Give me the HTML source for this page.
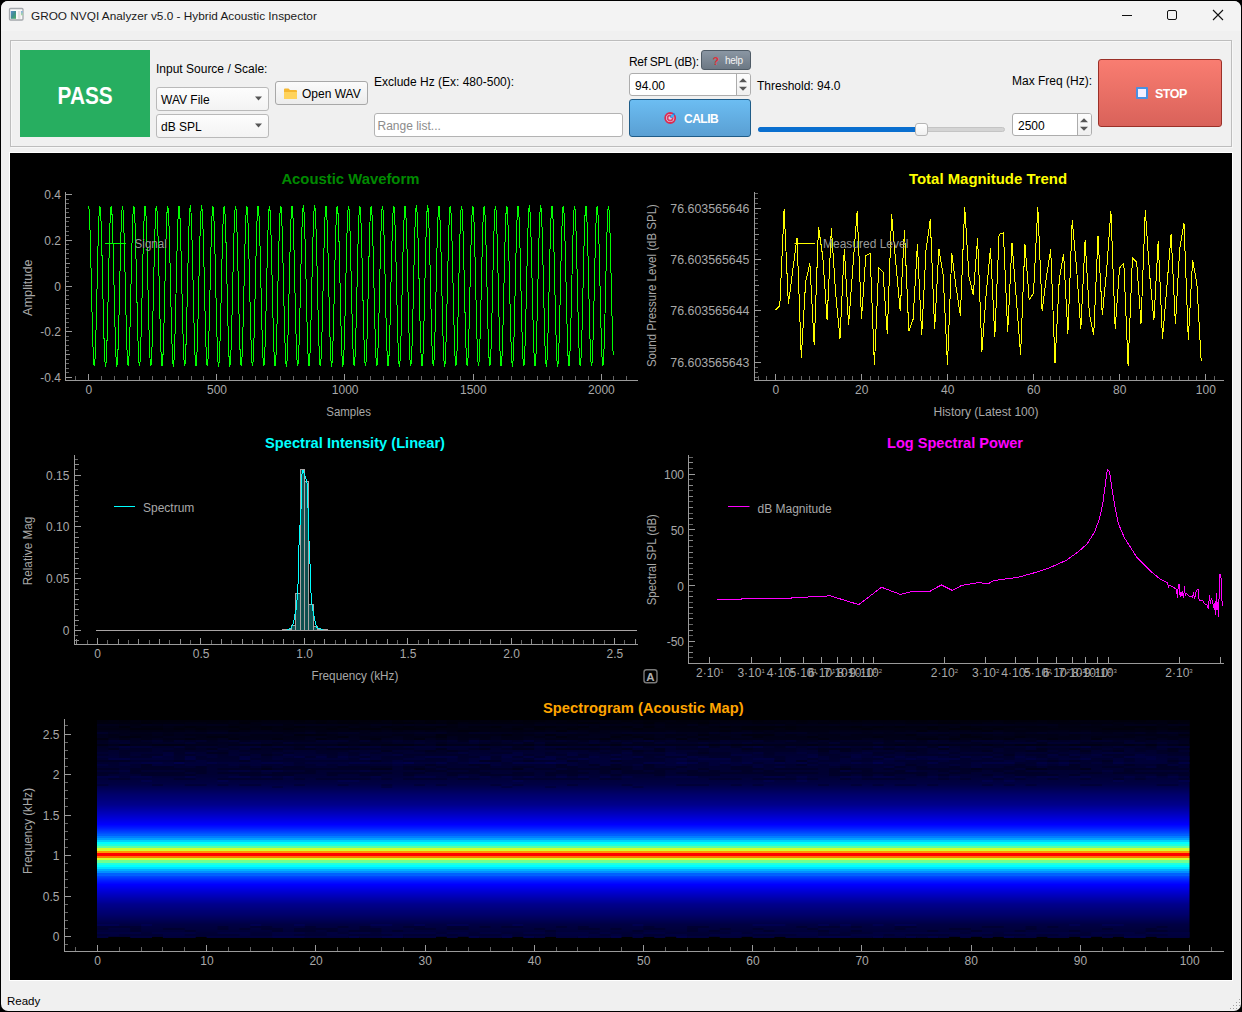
<!DOCTYPE html><html><head><meta charset="utf-8"><style>
*{box-sizing:border-box}
html,body{margin:0;padding:0}
body{width:1242px;height:1012px;overflow:hidden;background:#000;font-family:"Liberation Sans", sans-serif;position:relative;font-size:12px;color:#000}
.a{position:absolute}
#win{position:absolute;left:1px;top:1px;width:1240px;height:1010px;background:#f0f0f0;border-radius:7px;overflow:hidden}
#tb{position:absolute;left:0;top:0;width:1240px;height:30px;background:#f3f3f3}
.lbl{position:absolute;white-space:nowrap;font-size:12px;line-height:14px;color:#000;margin-top:1px}
.combo{position:absolute;border:1px solid #b9b9b9;border-radius:3px;background:linear-gradient(#fdfdfd,#f3f3f3)}
.btn{position:absolute;border:1px solid #a8a8a8;border-radius:3px;background:linear-gradient(#fbfbfb,#ececec)}
.edit{position:absolute;border:1px solid #b3b3b3;border-radius:3px;background:#fff}
</style></head><body><div id="win">
<div id="tb"></div>
<svg class="a" style="left:7px;top:6px" width="16" height="14"><defs><linearGradient id="ic1" x1="0" y1="0" x2="1" y2="1"><stop offset="0" stop-color="#5a8ccc"/><stop offset="0.5" stop-color="#3f8f90"/><stop offset="1" stop-color="#4fae60"/></linearGradient><linearGradient id="ic2" x1="0" y1="0" x2="0" y2="1"><stop offset="0" stop-color="#8ab0e0"/><stop offset="1" stop-color="#a8dca0"/></linearGradient></defs><rect x="1.5" y="1.5" width="13.5" height="11.5" rx="1" fill="#fafafa" stroke="#a4a8ac" stroke-width="1.3"/><rect x="2.8" y="4" width="5.2" height="7.8" fill="url(#ic1)"/><rect x="9.9" y="4" width="2.6" height="7.8" fill="#e2e2e2"/><rect x="13" y="4" width="1.9" height="4.3" fill="url(#ic2)"/></svg>
<div class="lbl" style="left:30px;top:7px;font-size:11.8px;line-height:14px;color:#1a1a1a">GROO NVQI Analyzer v5.0 - Hybrid Acoustic Inspector</div>
<div class="a" style="left:1121px;top:14px;width:10px;height:1px;background:#111"></div>
<div class="a" style="left:1166px;top:9px;width:10px;height:10px;border:1px solid #111;border-radius:2px"></div>
<svg class="a" style="left:1211px;top:8px" width="12" height="12"><path d="M1 1L11 11M11 1L1 11" stroke="#111" stroke-width="1.1"/></svg>
<div class="a" style="left:9px;top:39px;width:1222px;height:107px;border:1px solid #bdbdbd;box-shadow:inset 1px 1px 0 #f7f7f7, 1px 1px 0 #f7f7f7"></div>
<div class="a" style="left:19px;top:49px;width:130px;height:87px;background:#27ae60;color:#fff;font-weight:bold;font-size:23.5px;text-align:center;line-height:92px"><span style="display:inline-block;transform:scaleX(0.885)">PASS</span></div>
<div class="lbl" style="left:155px;top:60px">Input Source / Scale:</div>
<div class="combo" style="left:155px;top:86px;width:113px;height:24px"><div class="lbl" style="left:4px;top:3.5px">WAV File</div><svg class="a" style="left:97px;top:8px" width="9" height="6"><path d="M1 0.5L8 0.5L4.5 4.5Z" fill="#555"/></svg></div>
<div class="combo" style="left:155px;top:113px;width:113px;height:24px"><div class="lbl" style="left:4px;top:3.5px">dB SPL</div><svg class="a" style="left:97px;top:8px" width="9" height="6"><path d="M1 0.5L8 0.5L4.5 4.5Z" fill="#555"/></svg></div>
<div class="btn" style="left:274px;top:80px;width:93px;height:24px"><svg class="a" style="left:8px;top:6px" width="13" height="11"><path d="M0 1.5Q0 0.5 1 0.5L4.5 0.5L6 2L12 2Q13 2 13 3L13 11L0 11Z" fill="#f5b731"/><path d="M0 4L13 4L13 11L0 11Z" fill="#ffd35c"/></svg><div class="lbl" style="left:26px;top:4px">Open WAV</div></div>
<div class="lbl" style="left:373px;top:73px">Exclude Hz (Ex: 480-500):</div>
<div class="edit" style="left:373px;top:112px;width:249px;height:24px"><div class="lbl" style="left:2.5px;top:4px;color:#8c8c8c">Range list...</div></div>
<div class="lbl" style="left:628px;top:53px;letter-spacing:-0.3px">Ref SPL (dB):</div>
<div class="a" style="left:700px;top:49px;width:50px;height:20px;border:1px solid #4f5b66;border-radius:3px;background:linear-gradient(#8a96a3,#6c7884)"><div class="lbl" style="left:10.5px;top:2px;color:#e0303a;font-weight:bold;font-size:10.5px">?</div><div class="lbl" style="left:23px;top:2px;color:#f4f4f4;font-size:10px;letter-spacing:-0.3px">help</div></div>
<div class="edit" style="left:628px;top:72px;width:122px;height:23px;border-color:#adadad"><div class="lbl" style="left:5px;top:4px">94.00</div><div class="a" style="left:106px;top:0;width:14px;height:21px;background:linear-gradient(#fdfdfd,#efefef);border-radius:0 2px 2px 0"></div><div class="a" style="left:106px;top:0;width:1px;height:21px;background:#acacac"></div><svg class="a" style="left:108px;top:3px" width="10" height="15"><path d="M1 5.2L5 1.2L9 5.2Z" fill="#555"/><path d="M1 9.8L9 9.8L5 13.8Z" fill="#555"/></svg></div>
<div class="a" style="left:628px;top:98px;width:122px;height:38px;border:1px solid #1f5c88;border-radius:3px;background:linear-gradient(#6cbdf2,#5a9fd3)"><svg class="a" style="left:34px;top:11px" width="14" height="14"><circle cx="6.2" cy="7" r="5" fill="#dcd6ea" stroke="#dc2a50" stroke-width="1.8"/><circle cx="6.2" cy="7" r="2.6" fill="#e8c8d8" stroke="#e03a64" stroke-width="1.6"/><path d="M6.5 6.5L10.5 2.5" stroke="#2a78e0" stroke-width="2"/><circle cx="8.5" cy="5" r="1.6" fill="#40b8f0"/></svg><div class="lbl" style="left:54px;top:11px;color:#fff;font-weight:bold;font-size:12px;letter-spacing:-0.5px">CALIB</div></div>
<div class="lbl" style="left:756px;top:77px">Threshold: 94.0</div>
<div class="a" style="left:757px;top:126px;width:247px;height:5px;border-radius:3px;background:#d4d4d4;border:1px solid #c4c4c4"></div>
<div class="a" style="left:757px;top:126px;width:162px;height:5px;border-radius:3px;background:#0a6fcf"></div>
<div class="a" style="left:914px;top:122px;width:13px;height:13px;border-radius:3px;background:linear-gradient(#ffffff,#f0f0f0);border:1px solid #b5b5b5"></div>
<div class="lbl" style="left:1011px;top:72px">Max Freq (Hz):</div>
<div class="edit" style="left:1011px;top:112px;width:80px;height:23px;border-color:#adadad"><div class="lbl" style="left:5px;top:4px">2500</div><div class="a" style="left:64px;top:0;width:14px;height:21px;background:linear-gradient(#fdfdfd,#efefef);border-radius:0 2px 2px 0"></div><div class="a" style="left:64px;top:0;width:1px;height:21px;background:#acacac"></div><svg class="a" style="left:66px;top:3px" width="10" height="15"><path d="M1 5.2L5 1.2L9 5.2Z" fill="#555"/><path d="M1 9.8L9 9.8L5 13.8Z" fill="#555"/></svg></div>
<div class="a" style="left:1097px;top:58px;width:124px;height:68px;border:1px solid #9a3028;border-radius:3px;background:linear-gradient(#f97d71,#d9625a)"><div class="a" style="left:37px;top:27px;width:12px;height:12px;background:#4a90e2;border-radius:1px"><div class="a" style="left:2px;top:2px;width:8px;height:8px;background:#f4efff"></div></div><div class="lbl" style="left:56px;top:26px;color:#fff;font-weight:bold;font-size:12.5px;letter-spacing:-0.5px">STOP</div></div>
<div class="lbl" style="left:6px;top:992px;font-size:11.5px">Ready</div>
<div class="a" style="left:1238px;top:998px;width:1px;height:1px;background:#a0a0a0"></div>
<div class="a" style="left:1235px;top:1001px;width:1px;height:1px;background:#a0a0a0"></div>
<div class="a" style="left:1238px;top:1001px;width:1px;height:1px;background:#a0a0a0"></div>
<div class="a" style="left:1232px;top:1004px;width:1px;height:1px;background:#a0a0a0"></div>
<div class="a" style="left:1235px;top:1004px;width:1px;height:1px;background:#a0a0a0"></div>
<div class="a" style="left:1238px;top:1004px;width:1px;height:1px;background:#a0a0a0"></div>
<div class="a" style="left:1229px;top:1007px;width:1px;height:1px;background:#a0a0a0"></div>
<div class="a" style="left:1232px;top:1007px;width:1px;height:1px;background:#a0a0a0"></div>
<div class="a" style="left:1235px;top:1007px;width:1px;height:1px;background:#a0a0a0"></div>
</div>
<svg class="a" style="left:0;top:0" width="1242" height="1012" font-family='"Liberation Sans", sans-serif'>
<rect x="9" y="152" width="1224" height="829" fill="#fff"/>
<rect x="10" y="153" width="1222" height="827" fill="#000"/>
<line x1="65.5" y1="192" x2="65.5" y2="381" stroke="#9a9a9a" stroke-width="1"/>
<line x1="65" y1="380.5" x2="638" y2="380.5" stroke="#9a9a9a" stroke-width="1"/>
<line x1="66" y1="377.5" x2="72" y2="377.5" stroke="#9a9a9a" stroke-width="1"/>
<line x1="66" y1="331.5" x2="72" y2="331.5" stroke="#9a9a9a" stroke-width="1"/>
<line x1="66" y1="286.5" x2="72" y2="286.5" stroke="#9a9a9a" stroke-width="1"/>
<line x1="66" y1="240.5" x2="72" y2="240.5" stroke="#9a9a9a" stroke-width="1"/>
<line x1="66" y1="194.5" x2="72" y2="194.5" stroke="#9a9a9a" stroke-width="1"/>
<line x1="66" y1="354.5" x2="70" y2="354.5" stroke="#8a8a8a" stroke-width="1"/>
<line x1="66" y1="308.5" x2="70" y2="308.5" stroke="#8a8a8a" stroke-width="1"/>
<line x1="66" y1="263.5" x2="70" y2="263.5" stroke="#8a8a8a" stroke-width="1"/>
<line x1="66" y1="217.5" x2="70" y2="217.5" stroke="#8a8a8a" stroke-width="1"/>
<line x1="66" y1="372.5" x2="69" y2="372.5" stroke="#646464" stroke-width="1"/>
<line x1="66" y1="368.5" x2="69" y2="368.5" stroke="#646464" stroke-width="1"/>
<line x1="66" y1="363.5" x2="69" y2="363.5" stroke="#646464" stroke-width="1"/>
<line x1="66" y1="359.5" x2="69" y2="359.5" stroke="#646464" stroke-width="1"/>
<line x1="66" y1="350.5" x2="69" y2="350.5" stroke="#646464" stroke-width="1"/>
<line x1="66" y1="345.5" x2="69" y2="345.5" stroke="#646464" stroke-width="1"/>
<line x1="66" y1="340.5" x2="69" y2="340.5" stroke="#646464" stroke-width="1"/>
<line x1="66" y1="336.5" x2="69" y2="336.5" stroke="#646464" stroke-width="1"/>
<line x1="66" y1="327.5" x2="69" y2="327.5" stroke="#646464" stroke-width="1"/>
<line x1="66" y1="322.5" x2="69" y2="322.5" stroke="#646464" stroke-width="1"/>
<line x1="66" y1="318.5" x2="69" y2="318.5" stroke="#646464" stroke-width="1"/>
<line x1="66" y1="313.5" x2="69" y2="313.5" stroke="#646464" stroke-width="1"/>
<line x1="66" y1="304.5" x2="69" y2="304.5" stroke="#646464" stroke-width="1"/>
<line x1="66" y1="299.5" x2="69" y2="299.5" stroke="#646464" stroke-width="1"/>
<line x1="66" y1="295.5" x2="69" y2="295.5" stroke="#646464" stroke-width="1"/>
<line x1="66" y1="290.5" x2="69" y2="290.5" stroke="#646464" stroke-width="1"/>
<line x1="66" y1="281.5" x2="69" y2="281.5" stroke="#646464" stroke-width="1"/>
<line x1="66" y1="276.5" x2="69" y2="276.5" stroke="#646464" stroke-width="1"/>
<line x1="66" y1="272.5" x2="69" y2="272.5" stroke="#646464" stroke-width="1"/>
<line x1="66" y1="267.5" x2="69" y2="267.5" stroke="#646464" stroke-width="1"/>
<line x1="66" y1="258.5" x2="69" y2="258.5" stroke="#646464" stroke-width="1"/>
<line x1="66" y1="253.5" x2="69" y2="253.5" stroke="#646464" stroke-width="1"/>
<line x1="66" y1="249.5" x2="69" y2="249.5" stroke="#646464" stroke-width="1"/>
<line x1="66" y1="244.5" x2="69" y2="244.5" stroke="#646464" stroke-width="1"/>
<line x1="66" y1="235.5" x2="69" y2="235.5" stroke="#646464" stroke-width="1"/>
<line x1="66" y1="231.5" x2="69" y2="231.5" stroke="#646464" stroke-width="1"/>
<line x1="66" y1="226.5" x2="69" y2="226.5" stroke="#646464" stroke-width="1"/>
<line x1="66" y1="221.5" x2="69" y2="221.5" stroke="#646464" stroke-width="1"/>
<line x1="66" y1="212.5" x2="69" y2="212.5" stroke="#646464" stroke-width="1"/>
<line x1="66" y1="208.5" x2="69" y2="208.5" stroke="#646464" stroke-width="1"/>
<line x1="66" y1="203.5" x2="69" y2="203.5" stroke="#646464" stroke-width="1"/>
<line x1="66" y1="199.5" x2="69" y2="199.5" stroke="#646464" stroke-width="1"/>
<text x="61" y="199" font-size="12" fill="#a8a8a8" text-anchor="end" font-weight="normal" >0.4</text>
<text x="61" y="244.75" font-size="12" fill="#a8a8a8" text-anchor="end" font-weight="normal" >0.2</text>
<text x="61" y="290.5" font-size="12" fill="#a8a8a8" text-anchor="end" font-weight="normal" >0</text>
<text x="61" y="336.25" font-size="12" fill="#a8a8a8" text-anchor="end" font-weight="normal" >-0.2</text>
<text x="61" y="382" font-size="12" fill="#a8a8a8" text-anchor="end" font-weight="normal" >-0.4</text>
<line x1="88.5" y1="380" x2="88.5" y2="374" stroke="#9a9a9a" stroke-width="1"/>
<line x1="216.5" y1="380" x2="216.5" y2="374" stroke="#9a9a9a" stroke-width="1"/>
<line x1="344.5" y1="380" x2="344.5" y2="374" stroke="#9a9a9a" stroke-width="1"/>
<line x1="473.5" y1="380" x2="473.5" y2="374" stroke="#9a9a9a" stroke-width="1"/>
<line x1="601.5" y1="380" x2="601.5" y2="374" stroke="#9a9a9a" stroke-width="1"/>
<line x1="75.5" y1="380" x2="75.5" y2="376" stroke="#646464" stroke-width="1"/>
<line x1="101.5" y1="380" x2="101.5" y2="376" stroke="#646464" stroke-width="1"/>
<line x1="114.5" y1="380" x2="114.5" y2="376" stroke="#646464" stroke-width="1"/>
<line x1="127.5" y1="380" x2="127.5" y2="376" stroke="#646464" stroke-width="1"/>
<line x1="139.5" y1="380" x2="139.5" y2="376" stroke="#646464" stroke-width="1"/>
<line x1="152.5" y1="380" x2="152.5" y2="376" stroke="#646464" stroke-width="1"/>
<line x1="165.5" y1="380" x2="165.5" y2="376" stroke="#646464" stroke-width="1"/>
<line x1="178.5" y1="380" x2="178.5" y2="376" stroke="#646464" stroke-width="1"/>
<line x1="191.5" y1="380" x2="191.5" y2="376" stroke="#646464" stroke-width="1"/>
<line x1="203.5" y1="380" x2="203.5" y2="376" stroke="#646464" stroke-width="1"/>
<line x1="229.5" y1="380" x2="229.5" y2="376" stroke="#646464" stroke-width="1"/>
<line x1="242.5" y1="380" x2="242.5" y2="376" stroke="#646464" stroke-width="1"/>
<line x1="255.5" y1="380" x2="255.5" y2="376" stroke="#646464" stroke-width="1"/>
<line x1="267.5" y1="380" x2="267.5" y2="376" stroke="#646464" stroke-width="1"/>
<line x1="280.5" y1="380" x2="280.5" y2="376" stroke="#646464" stroke-width="1"/>
<line x1="293.5" y1="380" x2="293.5" y2="376" stroke="#646464" stroke-width="1"/>
<line x1="306.5" y1="380" x2="306.5" y2="376" stroke="#646464" stroke-width="1"/>
<line x1="319.5" y1="380" x2="319.5" y2="376" stroke="#646464" stroke-width="1"/>
<line x1="332.5" y1="380" x2="332.5" y2="376" stroke="#646464" stroke-width="1"/>
<line x1="357.5" y1="380" x2="357.5" y2="376" stroke="#646464" stroke-width="1"/>
<line x1="370.5" y1="380" x2="370.5" y2="376" stroke="#646464" stroke-width="1"/>
<line x1="383.5" y1="380" x2="383.5" y2="376" stroke="#646464" stroke-width="1"/>
<line x1="396.5" y1="380" x2="396.5" y2="376" stroke="#646464" stroke-width="1"/>
<line x1="408.5" y1="380" x2="408.5" y2="376" stroke="#646464" stroke-width="1"/>
<line x1="421.5" y1="380" x2="421.5" y2="376" stroke="#646464" stroke-width="1"/>
<line x1="434.5" y1="380" x2="434.5" y2="376" stroke="#646464" stroke-width="1"/>
<line x1="447.5" y1="380" x2="447.5" y2="376" stroke="#646464" stroke-width="1"/>
<line x1="460.5" y1="380" x2="460.5" y2="376" stroke="#646464" stroke-width="1"/>
<line x1="485.5" y1="380" x2="485.5" y2="376" stroke="#646464" stroke-width="1"/>
<line x1="498.5" y1="380" x2="498.5" y2="376" stroke="#646464" stroke-width="1"/>
<line x1="511.5" y1="380" x2="511.5" y2="376" stroke="#646464" stroke-width="1"/>
<line x1="524.5" y1="380" x2="524.5" y2="376" stroke="#646464" stroke-width="1"/>
<line x1="537.5" y1="380" x2="537.5" y2="376" stroke="#646464" stroke-width="1"/>
<line x1="549.5" y1="380" x2="549.5" y2="376" stroke="#646464" stroke-width="1"/>
<line x1="562.5" y1="380" x2="562.5" y2="376" stroke="#646464" stroke-width="1"/>
<line x1="575.5" y1="380" x2="575.5" y2="376" stroke="#646464" stroke-width="1"/>
<line x1="588.5" y1="380" x2="588.5" y2="376" stroke="#646464" stroke-width="1"/>
<line x1="613.5" y1="380" x2="613.5" y2="376" stroke="#646464" stroke-width="1"/>
<line x1="626.5" y1="380" x2="626.5" y2="376" stroke="#646464" stroke-width="1"/>
<text x="88.9" y="394" font-size="12" fill="#a8a8a8" text-anchor="middle" font-weight="normal" >0</text>
<text x="217.04" y="394" font-size="12" fill="#a8a8a8" text-anchor="middle" font-weight="normal" >500</text>
<text x="345.18" y="394" font-size="12" fill="#a8a8a8" text-anchor="middle" font-weight="normal" >1000</text>
<text x="473.32" y="394" font-size="12" fill="#a8a8a8" text-anchor="middle" font-weight="normal" >1500</text>
<text x="601.46" y="394" font-size="12" fill="#a8a8a8" text-anchor="middle" font-weight="normal" >2000</text>
<text x="348.6" y="415.8" font-size="12" fill="#a8a8a8" text-anchor="middle" font-weight="normal" textLength="44.7" lengthAdjust="spacingAndGlyphs" >Samples</text>
<text x="32.2" y="287.7" font-size="12" fill="#a8a8a8" text-anchor="middle" font-weight="normal" textLength="56.7" lengthAdjust="spacingAndGlyphs" transform="rotate(-90 32.2 287.7)">Amplitude</text>
<text x="350.4" y="183.7" font-size="15" fill="#008a00" text-anchor="middle" font-weight="bold" textLength="138" lengthAdjust="spacingAndGlyphs" >Acoustic Waveform</text>
<polyline points="88.60,206.4 88.86,207.2 89.11,209.6 89.37,213.6 89.63,219.0 89.88,225.8 90.14,233.8 90.39,242.8 90.65,252.7 90.91,263.4 91.16,274.4 91.42,285.7 91.68,297.0 91.93,308.1 92.19,318.7 92.44,328.7 92.70,337.8 92.96,345.9 93.21,352.7 93.47,358.2 93.73,362.2 93.98,364.7 94.24,365.6 94.49,364.9 94.75,362.6 95.01,358.7 95.26,353.3 95.52,346.6 95.78,338.7 96.03,329.7 96.29,319.8 96.54,309.2 96.80,298.1 97.06,286.9 97.31,275.5 97.57,264.4 97.83,253.8 98.08,243.8 98.34,234.6 98.59,226.5 98.85,219.6 99.11,214.0 99.36,209.9 99.62,207.4 99.88,206.4 100.13,207.0 100.39,209.3 100.65,213.1 100.90,218.4 101.16,225.0 101.41,232.9 101.67,241.9 101.93,251.7 102.18,262.3 102.44,273.3 102.70,284.6 102.95,295.9 103.21,307.0 103.46,317.7 103.72,327.8 103.98,337.0 104.23,345.1 104.49,352.1 104.75,357.7 105.00,361.9 105.26,364.5 105.51,365.6 105.77,365.0 106.03,362.9 106.28,359.1 106.54,353.9 106.80,347.3 107.05,339.5 107.31,330.6 107.56,320.8 107.82,310.3 108.08,299.3 108.33,288.0 108.59,276.7 108.85,265.5 109.10,254.8 109.36,244.7 109.61,235.5 109.87,227.3 110.13,220.2 110.38,214.5 110.64,210.3 110.90,207.6 111.15,206.4 111.41,206.9 111.67,209.0 111.92,212.6 112.18,217.8 112.43,224.3 112.69,232.1 112.95,240.9 113.20,250.7 113.46,261.2 113.72,272.2 113.97,283.4 114.23,294.8 114.48,305.9 114.74,316.7 115.00,326.8 115.25,336.1 115.51,344.4 115.77,351.5 116.02,357.2 116.28,361.5 116.53,364.3 116.79,365.6 117.05,365.2 117.30,363.1 117.56,359.6 117.82,354.5 118.07,348.1 118.33,340.4 118.58,331.5 118.84,321.8 119.10,311.4 119.35,300.4 119.61,289.1 119.87,277.8 120.12,266.6 120.38,255.9 120.63,245.7 120.89,236.4 121.15,228.0 121.40,220.9 121.66,215.0 121.92,210.6 122.17,207.8 122.43,206.5 122.69,206.8 122.94,208.7 123.20,212.2 123.45,217.2 123.71,223.6 123.97,231.2 124.22,240.0 124.48,249.7 124.74,260.1 124.99,271.1 125.25,282.3 125.50,293.6 125.76,304.8 126.02,315.6 126.27,325.8 126.53,335.2 126.79,343.6 127.04,350.8 127.30,356.7 127.55,361.2 127.81,364.1 128.07,365.5 128.32,365.3 128.58,363.4 128.84,360.0 129.09,355.1 129.35,348.8 129.60,341.2 129.86,332.5 130.12,322.8 130.37,312.4 130.63,301.5 130.89,290.3 131.14,278.9 131.40,267.7 131.66,256.9 131.91,246.7 132.17,237.3 132.42,228.8 132.68,221.5 132.94,215.6 133.19,211.0 133.45,208.0 133.71,206.5 133.96,206.7 134.22,208.5 134.47,211.8 134.73,216.6 134.99,222.9 135.24,230.4 135.50,239.1 135.76,248.7 136.01,259.0 136.27,269.9 136.52,281.2 136.78,292.5 137.04,303.7 137.29,314.6 137.55,324.8 137.81,334.3 138.06,342.8 138.32,350.1 138.57,356.2 138.83,360.8 139.09,363.9 139.34,365.4 139.60,365.4 139.86,363.7 140.11,360.4 140.37,355.6 140.62,349.5 140.88,342.0 141.14,333.4 141.39,323.8 141.65,313.5 141.91,302.6 142.16,291.4 142.42,280.1 142.68,268.8 142.93,258.0 143.19,247.7 143.44,238.2 143.70,229.6 143.96,222.2 144.21,216.1 144.47,211.4 144.73,208.2 144.98,206.6 145.24,206.6 145.49,208.2 145.75,211.4 146.01,216.1 146.26,222.2 146.52,229.6 146.78,238.2 147.03,247.7 147.29,258.0 147.54,268.8 147.80,280.1 148.06,291.4 148.31,302.6 148.57,313.5 148.83,323.8 149.08,333.4 149.34,342.0 149.59,349.5 149.85,355.6 150.11,360.4 150.36,363.7 150.62,365.4 150.88,365.4 151.13,363.9 151.39,360.8 151.64,356.2 151.90,350.1 152.16,342.8 152.41,334.3 152.67,324.8 152.93,314.6 153.18,303.7 153.44,292.5 153.70,281.2 153.95,269.9 154.21,259.0 154.46,248.7 154.72,239.1 154.98,230.4 155.23,222.9 155.49,216.6 155.75,211.8 156.00,208.5 156.26,206.7 156.51,206.5 156.77,208.0 157.03,211.0 157.28,215.6 157.54,221.5 157.80,228.8 158.05,237.3 158.31,246.7 158.56,256.9 158.82,267.7 159.08,278.9 159.33,290.3 159.59,301.5 159.85,312.4 160.10,322.8 160.36,332.5 160.61,341.2 160.87,348.8 161.13,355.1 161.38,360.0 161.64,363.4 161.90,365.3 162.15,365.5 162.41,364.1 162.66,361.2 162.92,356.7 163.18,350.8 163.43,343.6 163.69,335.2 163.95,325.8 164.20,315.6 164.46,304.8 164.72,293.6 164.97,282.3 165.23,271.1 165.48,260.1 165.74,249.7 166.00,240.0 166.25,231.2 166.51,223.6 166.77,217.2 167.02,212.2 167.28,208.7 167.53,206.8 167.79,206.5 168.05,207.8 168.30,210.6 168.56,215.0 168.82,220.9 169.07,228.0 169.33,236.4 169.58,245.7 169.84,255.9 170.10,266.6 170.35,277.8 170.61,289.1 170.87,300.4 171.12,311.4 171.38,321.8 171.63,331.5 171.89,340.4 172.15,348.1 172.40,354.5 172.66,359.6 172.92,363.1 173.17,365.2 173.43,365.6 173.68,364.3 173.94,361.5 174.20,357.2 174.45,351.5 174.71,344.4 174.97,336.1 175.22,326.8 175.48,316.7 175.74,305.9 175.99,294.8 176.25,283.4 176.50,272.2 176.76,261.2 177.02,250.7 177.27,240.9 177.53,232.1 177.79,224.3 178.04,217.8 178.30,212.6 178.55,209.0 178.81,206.9 179.07,206.4 179.32,207.6 179.58,210.3 179.84,214.5 180.09,220.2 180.35,227.3 180.60,235.5 180.86,244.7 181.12,254.8 181.37,265.5 181.63,276.7 181.89,288.0 182.14,299.3 182.40,310.3 182.65,320.8 182.91,330.6 183.17,339.5 183.42,347.3 183.68,353.9 183.94,359.1 184.19,362.9 184.45,365.0 184.70,365.6 184.96,364.5 185.22,361.9 185.47,357.7 185.73,352.1 185.99,345.1 186.24,337.0 186.50,327.8 186.76,317.7 187.01,307.0 187.27,295.9 187.52,284.6 187.78,273.3 188.04,262.3 188.29,251.7 188.55,241.9 188.81,232.9 189.06,225.0 189.32,218.4 189.57,213.1 189.83,209.3 190.09,207.0 190.34,206.4 190.60,207.4 190.86,209.9 191.11,214.0 191.37,219.6 191.62,226.5 191.88,234.6 192.14,243.8 192.39,253.8 192.65,264.4 192.91,275.5 193.16,286.9 193.42,298.1 193.67,309.2 193.93,319.8 194.19,329.7 194.44,338.7 194.70,346.6 194.96,353.3 195.21,358.7 195.47,362.6 195.73,364.9 195.98,365.6 196.24,364.7 196.49,362.2 196.75,358.2 197.01,352.7 197.26,345.9 197.52,337.8 197.78,328.7 198.03,318.7 198.29,308.1 198.54,297.0 198.80,285.7 199.06,274.4 199.31,263.4 199.57,252.7 199.83,242.8 200.08,233.8 200.34,225.8 200.59,219.0 200.85,213.6 201.11,209.6 201.36,207.2 201.62,206.4 201.88,207.2 202.13,209.6 202.39,213.6 202.64,219.0 202.90,225.8 203.16,233.8 203.41,242.8 203.67,252.7 203.93,263.4 204.18,274.4 204.44,285.7 204.69,297.0 204.95,308.1 205.21,318.7 205.46,328.7 205.72,337.8 205.98,345.9 206.23,352.7 206.49,358.2 206.75,362.2 207.00,364.7 207.26,365.6 207.51,364.9 207.77,362.6 208.03,358.7 208.28,353.3 208.54,346.6 208.80,338.7 209.05,329.7 209.31,319.8 209.56,309.2 209.82,298.1 210.08,286.9 210.33,275.5 210.59,264.4 210.85,253.8 211.10,243.8 211.36,234.6 211.61,226.5 211.87,219.6 212.13,214.0 212.38,209.9 212.64,207.4 212.90,206.4 213.15,207.0 213.41,209.3 213.66,213.1 213.92,218.4 214.18,225.0 214.43,232.9 214.69,241.9 214.95,251.7 215.20,262.3 215.46,273.3 215.71,284.6 215.97,295.9 216.23,307.0 216.48,317.7 216.74,327.8 217.00,337.0 217.25,345.1 217.51,352.1 217.77,357.7 218.02,361.9 218.28,364.5 218.53,365.6 218.79,365.0 219.05,362.9 219.30,359.1 219.56,353.9 219.82,347.3 220.07,339.5 220.33,330.6 220.58,320.8 220.84,310.3 221.10,299.3 221.35,288.0 221.61,276.7 221.87,265.5 222.12,254.8 222.38,244.7 222.63,235.5 222.89,227.3 223.15,220.2 223.40,214.5 223.66,210.3 223.92,207.6 224.17,206.4 224.43,206.9 224.68,209.0 224.94,212.6 225.20,217.8 225.45,224.3 225.71,232.1 225.97,240.9 226.22,250.7 226.48,261.2 226.73,272.2 226.99,283.4 227.25,294.8 227.50,305.9 227.76,316.7 228.02,326.8 228.27,336.1 228.53,344.4 228.79,351.5 229.04,357.2 229.30,361.5 229.55,364.3 229.81,365.6 230.07,365.2 230.32,363.1 230.58,359.6 230.84,354.5 231.09,348.1 231.35,340.4 231.60,331.5 231.86,321.8 232.12,311.4 232.37,300.4 232.63,289.1 232.89,277.8 233.14,266.6 233.40,255.9 233.65,245.7 233.91,236.4 234.17,228.0 234.42,220.9 234.68,215.0 234.94,210.6 235.19,207.8 235.45,206.5 235.70,206.8 235.96,208.7 236.22,212.2 236.47,217.2 236.73,223.6 236.99,231.2 237.24,240.0 237.50,249.7 237.75,260.1 238.01,271.1 238.27,282.3 238.52,293.6 238.78,304.8 239.04,315.6 239.29,325.8 239.55,335.2 239.81,343.6 240.06,350.8 240.32,356.7 240.57,361.2 240.83,364.1 241.09,365.5 241.34,365.3 241.60,363.4 241.86,360.0 242.11,355.1 242.37,348.8 242.62,341.2 242.88,332.5 243.14,322.8 243.39,312.4 243.65,301.5 243.91,290.3 244.16,278.9 244.42,267.7 244.67,256.9 244.93,246.7 245.19,237.3 245.44,228.8 245.70,221.5 245.96,215.6 246.21,211.0 246.47,208.0 246.72,206.5 246.98,206.7 247.24,208.5 247.49,211.8 247.75,216.6 248.01,222.9 248.26,230.4 248.52,239.1 248.78,248.7 249.03,259.0 249.29,269.9 249.54,281.2 249.80,292.5 250.06,303.7 250.31,314.6 250.57,324.8 250.83,334.3 251.08,342.8 251.34,350.1 251.59,356.2 251.85,360.8 252.11,363.9 252.36,365.4 252.62,365.4 252.88,363.7 253.13,360.4 253.39,355.6 253.64,349.5 253.90,342.0 254.16,333.4 254.41,323.8 254.67,313.5 254.93,302.6 255.18,291.4 255.44,280.1 255.69,268.8 255.95,258.0 256.21,247.7 256.46,238.2 256.72,229.6 256.98,222.2 257.23,216.1 257.49,211.4 257.74,208.2 258.00,206.6 258.26,206.6 258.51,208.2 258.77,211.4 259.03,216.1 259.28,222.2 259.54,229.6 259.80,238.2 260.05,247.7 260.31,258.0 260.56,268.8 260.82,280.1 261.08,291.4 261.33,302.6 261.59,313.5 261.85,323.8 262.10,333.4 262.36,342.0 262.61,349.5 262.87,355.6 263.13,360.4 263.38,363.7 263.64,365.4 263.90,365.4 264.15,363.9 264.41,360.8 264.66,356.2 264.92,350.1 265.18,342.8 265.43,334.3 265.69,324.8 265.95,314.6 266.20,303.7 266.46,292.5 266.71,281.2 266.97,269.9 267.23,259.0 267.48,248.7 267.74,239.1 268.00,230.4 268.25,222.9 268.51,216.6 268.76,211.8 269.02,208.5 269.28,206.7 269.53,206.5 269.79,208.0 270.05,211.0 270.30,215.6 270.56,221.5 270.82,228.8 271.07,237.3 271.33,246.7 271.58,256.9 271.84,267.7 272.10,278.9 272.35,290.3 272.61,301.5 272.87,312.4 273.12,322.8 273.38,332.5 273.63,341.2 273.89,348.8 274.15,355.1 274.40,360.0 274.66,363.4 274.92,365.3 275.17,365.5 275.43,364.1 275.68,361.2 275.94,356.7 276.20,350.8 276.45,343.6 276.71,335.2 276.97,325.8 277.22,315.6 277.48,304.8 277.73,293.6 277.99,282.3 278.25,271.1 278.50,260.1 278.76,249.7 279.02,240.0 279.27,231.2 279.53,223.6 279.78,217.2 280.04,212.2 280.30,208.7 280.55,206.8 280.81,206.5 281.07,207.8 281.32,210.6 281.58,215.0 281.84,220.9 282.09,228.0 282.35,236.4 282.60,245.7 282.86,255.9 283.12,266.6 283.37,277.8 283.63,289.1 283.89,300.4 284.14,311.4 284.40,321.8 284.65,331.5 284.91,340.4 285.17,348.1 285.42,354.5 285.68,359.6 285.94,363.1 286.19,365.2 286.45,365.6 286.70,364.3 286.96,361.5 287.22,357.2 287.47,351.5 287.73,344.4 287.99,336.1 288.24,326.8 288.50,316.7 288.75,305.9 289.01,294.8 289.27,283.4 289.52,272.2 289.78,261.2 290.04,250.7 290.29,240.9 290.55,232.1 290.80,224.3 291.06,217.8 291.32,212.6 291.57,209.0 291.83,206.9 292.09,206.4 292.34,207.6 292.60,210.3 292.86,214.5 293.11,220.2 293.37,227.3 293.62,235.5 293.88,244.7 294.14,254.8 294.39,265.5 294.65,276.7 294.91,288.0 295.16,299.3 295.42,310.3 295.67,320.8 295.93,330.6 296.19,339.5 296.44,347.3 296.70,353.9 296.96,359.1 297.21,362.9 297.47,365.0 297.72,365.6 297.98,364.5 298.24,361.9 298.49,357.7 298.75,352.1 299.01,345.1 299.26,337.0 299.52,327.8 299.77,317.7 300.03,307.0 300.29,295.9 300.54,284.6 300.80,273.3 301.06,262.3 301.31,251.7 301.57,241.9 301.82,232.9 302.08,225.0 302.34,218.4 302.59,213.1 302.85,209.3 303.11,207.0 303.36,206.4 303.62,207.4 303.88,209.9 304.13,214.0 304.39,219.6 304.64,226.5 304.90,234.6 305.16,243.8 305.41,253.8 305.67,264.4 305.93,275.5 306.18,286.9 306.44,298.1 306.69,309.2 306.95,319.8 307.21,329.7 307.46,338.7 307.72,346.6 307.98,353.3 308.23,358.7 308.49,362.6 308.74,364.9 309.00,365.6 309.26,364.7 309.51,362.2 309.77,358.2 310.03,352.7 310.28,345.9 310.54,337.8 310.79,328.7 311.05,318.7 311.31,308.1 311.56,297.0 311.82,285.7 312.08,274.4 312.33,263.4 312.59,252.7 312.85,242.8 313.10,233.8 313.36,225.8 313.61,219.0 313.87,213.6 314.13,209.6 314.38,207.2 314.64,206.4 314.90,207.2 315.15,209.6 315.41,213.6 315.66,219.0 315.92,225.8 316.18,233.8 316.43,242.8 316.69,252.7 316.95,263.4 317.20,274.4 317.46,285.7 317.71,297.0 317.97,308.1 318.23,318.7 318.48,328.7 318.74,337.8 319.00,345.9 319.25,352.7 319.51,358.2 319.76,362.2 320.02,364.7 320.28,365.6 320.53,364.9 320.79,362.6 321.05,358.7 321.30,353.3 321.56,346.6 321.81,338.7 322.07,329.7 322.33,319.8 322.58,309.2 322.84,298.1 323.10,286.9 323.35,275.5 323.61,264.4 323.87,253.8 324.12,243.8 324.38,234.6 324.63,226.5 324.89,219.6 325.15,214.0 325.40,209.9 325.66,207.4 325.92,206.4 326.17,207.0 326.43,209.3 326.68,213.1 326.94,218.4 327.20,225.0 327.45,232.9 327.71,241.9 327.97,251.7 328.22,262.3 328.48,273.3 328.73,284.6 328.99,295.9 329.25,307.0 329.50,317.7 329.76,327.8 330.02,337.0 330.27,345.1 330.53,352.1 330.78,357.7 331.04,361.9 331.30,364.5 331.55,365.6 331.81,365.0 332.07,362.9 332.32,359.1 332.58,353.9 332.83,347.3 333.09,339.5 333.35,330.6 333.60,320.8 333.86,310.3 334.12,299.3 334.37,288.0 334.63,276.7 334.89,265.5 335.14,254.8 335.40,244.7 335.65,235.5 335.91,227.3 336.17,220.2 336.42,214.5 336.68,210.3 336.94,207.6 337.19,206.4 337.45,206.9 337.70,209.0 337.96,212.6 338.22,217.8 338.47,224.3 338.73,232.1 338.99,240.9 339.24,250.7 339.50,261.2 339.75,272.2 340.01,283.4 340.27,294.8 340.52,305.9 340.78,316.7 341.04,326.8 341.29,336.1 341.55,344.4 341.80,351.5 342.06,357.2 342.32,361.5 342.57,364.3 342.83,365.6 343.09,365.2 343.34,363.1 343.60,359.6 343.85,354.5 344.11,348.1 344.37,340.4 344.62,331.5 344.88,321.8 345.14,311.4 345.39,300.4 345.65,289.1 345.91,277.8 346.16,266.6 346.42,255.9 346.67,245.7 346.93,236.4 347.19,228.0 347.44,220.9 347.70,215.0 347.96,210.6 348.21,207.8 348.47,206.5 348.72,206.8 348.98,208.7 349.24,212.2 349.49,217.2 349.75,223.6 350.01,231.2 350.26,240.0 350.52,249.7 350.77,260.1 351.03,271.1 351.29,282.3 351.54,293.6 351.80,304.8 352.06,315.6 352.31,325.8 352.57,335.2 352.82,343.6 353.08,350.8 353.34,356.7 353.59,361.2 353.85,364.1 354.11,365.5 354.36,365.3 354.62,363.4 354.87,360.0 355.13,355.1 355.39,348.8 355.64,341.2 355.90,332.5 356.16,322.8 356.41,312.4 356.67,301.5 356.93,290.3 357.18,278.9 357.44,267.7 357.69,256.9 357.95,246.7 358.21,237.3 358.46,228.8 358.72,221.5 358.98,215.6 359.23,211.0 359.49,208.0 359.74,206.5 360.00,206.7 360.26,208.5 360.51,211.8 360.77,216.6 361.03,222.9 361.28,230.4 361.54,239.1 361.79,248.7 362.05,259.0 362.31,269.9 362.56,281.2 362.82,292.5 363.08,303.7 363.33,314.6 363.59,324.8 363.84,334.3 364.10,342.8 364.36,350.1 364.61,356.2 364.87,360.8 365.13,363.9 365.38,365.4 365.64,365.4 365.89,363.7 366.15,360.4 366.41,355.6 366.66,349.5 366.92,342.0 367.18,333.4 367.43,323.8 367.69,313.5 367.95,302.6 368.20,291.4 368.46,280.1 368.71,268.8 368.97,258.0 369.23,247.7 369.48,238.2 369.74,229.6 370.00,222.2 370.25,216.1 370.51,211.4 370.76,208.2 371.02,206.6 371.28,206.6 371.53,208.2 371.79,211.4 372.05,216.1 372.30,222.2 372.56,229.6 372.81,238.2 373.07,247.7 373.33,258.0 373.58,268.8 373.84,280.1 374.10,291.4 374.35,302.6 374.61,313.5 374.86,323.8 375.12,333.4 375.38,342.0 375.63,349.5 375.89,355.6 376.15,360.4 376.40,363.7 376.66,365.4 376.91,365.4 377.17,363.9 377.43,360.8 377.68,356.2 377.94,350.1 378.20,342.8 378.45,334.3 378.71,324.8 378.97,314.6 379.22,303.7 379.48,292.5 379.73,281.2 379.99,269.9 380.25,259.0 380.50,248.7 380.76,239.1 381.02,230.4 381.27,222.9 381.53,216.6 381.78,211.8 382.04,208.5 382.30,206.7 382.55,206.5 382.81,208.0 383.07,211.0 383.32,215.6 383.58,221.5 383.83,228.8 384.09,237.3 384.35,246.7 384.60,256.9 384.86,267.7 385.12,278.9 385.37,290.3 385.63,301.5 385.88,312.4 386.14,322.8 386.40,332.5 386.65,341.2 386.91,348.8 387.17,355.1 387.42,360.0 387.68,363.4 387.94,365.3 388.19,365.5 388.45,364.1 388.70,361.2 388.96,356.7 389.22,350.8 389.47,343.6 389.73,335.2 389.99,325.8 390.24,315.6 390.50,304.8 390.75,293.6 391.01,282.3 391.27,271.1 391.52,260.1 391.78,249.7 392.04,240.0 392.29,231.2 392.55,223.6 392.80,217.2 393.06,212.2 393.32,208.7 393.57,206.8 393.83,206.5 394.09,207.8 394.34,210.6 394.60,215.0 394.85,220.9 395.11,228.0 395.37,236.4 395.62,245.7 395.88,255.9 396.14,266.6 396.39,277.8 396.65,289.1 396.90,300.4 397.16,311.4 397.42,321.8 397.67,331.5 397.93,340.4 398.19,348.1 398.44,354.5 398.70,359.6 398.96,363.1 399.21,365.2 399.47,365.6 399.72,364.3 399.98,361.5 400.24,357.2 400.49,351.5 400.75,344.4 401.01,336.1 401.26,326.8 401.52,316.7 401.77,305.9 402.03,294.8 402.29,283.4 402.54,272.2 402.80,261.2 403.06,250.7 403.31,240.9 403.57,232.1 403.82,224.3 404.08,217.8 404.34,212.6 404.59,209.0 404.85,206.9 405.11,206.4 405.36,207.6 405.62,210.3 405.87,214.5 406.13,220.2 406.39,227.3 406.64,235.5 406.90,244.7 407.16,254.8 407.41,265.5 407.67,276.7 407.92,288.0 408.18,299.3 408.44,310.3 408.69,320.8 408.95,330.6 409.21,339.5 409.46,347.3 409.72,353.9 409.98,359.1 410.23,362.9 410.49,365.0 410.74,365.6 411.00,364.5 411.26,361.9 411.51,357.7 411.77,352.1 412.03,345.1 412.28,337.0 412.54,327.8 412.79,317.7 413.05,307.0 413.31,295.9 413.56,284.6 413.82,273.3 414.08,262.3 414.33,251.7 414.59,241.9 414.84,232.9 415.10,225.0 415.36,218.4 415.61,213.1 415.87,209.3 416.13,207.0 416.38,206.4 416.64,207.4 416.89,209.9 417.15,214.0 417.41,219.6 417.66,226.5 417.92,234.6 418.18,243.8 418.43,253.8 418.69,264.4 418.94,275.5 419.20,286.9 419.46,298.1 419.71,309.2 419.97,319.8 420.23,329.7 420.48,338.7 420.74,346.6 421.00,353.3 421.25,358.7 421.51,362.6 421.76,364.9 422.02,365.6 422.28,364.7 422.53,362.2 422.79,358.2 423.05,352.7 423.30,345.9 423.56,337.8 423.81,328.7 424.07,318.7 424.33,308.1 424.58,297.0 424.84,285.7 425.10,274.4 425.35,263.4 425.61,252.7 425.86,242.8 426.12,233.8 426.38,225.8 426.63,219.0 426.89,213.6 427.15,209.6 427.40,207.2 427.66,206.4 427.91,207.2 428.17,209.6 428.43,213.6 428.68,219.0 428.94,225.8 429.20,233.8 429.45,242.8 429.71,252.7 429.96,263.4 430.22,274.4 430.48,285.7 430.73,297.0 430.99,308.1 431.25,318.7 431.50,328.7 431.76,337.8 432.02,345.9 432.27,352.7 432.53,358.2 432.78,362.2 433.04,364.7 433.30,365.6 433.55,364.9 433.81,362.6 434.07,358.7 434.32,353.3 434.58,346.6 434.83,338.7 435.09,329.7 435.35,319.8 435.60,309.2 435.86,298.1 436.12,286.9 436.37,275.5 436.63,264.4 436.88,253.8 437.14,243.8 437.40,234.6 437.65,226.5 437.91,219.6 438.17,214.0 438.42,209.9 438.68,207.4 438.93,206.4 439.19,207.0 439.45,209.3 439.70,213.1 439.96,218.4 440.22,225.0 440.47,232.9 440.73,241.9 440.99,251.7 441.24,262.3 441.50,273.3 441.75,284.6 442.01,295.9 442.27,307.0 442.52,317.7 442.78,327.8 443.04,337.0 443.29,345.1 443.55,352.1 443.80,357.7 444.06,361.9 444.32,364.5 444.57,365.6 444.83,365.0 445.09,362.9 445.34,359.1 445.60,353.9 445.85,347.3 446.11,339.5 446.37,330.6 446.62,320.8 446.88,310.3 447.14,299.3 447.39,288.0 447.65,276.7 447.90,265.5 448.16,254.8 448.42,244.7 448.67,235.5 448.93,227.3 449.19,220.2 449.44,214.5 449.70,210.3 449.95,207.6 450.21,206.4 450.47,206.9 450.72,209.0 450.98,212.6 451.24,217.8 451.49,224.3 451.75,232.1 452.01,240.9 452.26,250.7 452.52,261.2 452.77,272.2 453.03,283.4 453.29,294.8 453.54,305.9 453.80,316.7 454.06,326.8 454.31,336.1 454.57,344.4 454.82,351.5 455.08,357.2 455.34,361.5 455.59,364.3 455.85,365.6 456.11,365.2 456.36,363.1 456.62,359.6 456.87,354.5 457.13,348.1 457.39,340.4 457.64,331.5 457.90,321.8 458.16,311.4 458.41,300.4 458.67,289.1 458.92,277.8 459.18,266.6 459.44,255.9 459.69,245.7 459.95,236.4 460.21,228.0 460.46,220.9 460.72,215.0 460.97,210.6 461.23,207.8 461.49,206.5 461.74,206.8 462.00,208.7 462.26,212.2 462.51,217.2 462.77,223.6 463.03,231.2 463.28,240.0 463.54,249.7 463.79,260.1 464.05,271.1 464.31,282.3 464.56,293.6 464.82,304.8 465.08,315.6 465.33,325.8 465.59,335.2 465.84,343.6 466.10,350.8 466.36,356.7 466.61,361.2 466.87,364.1 467.13,365.5 467.38,365.3 467.64,363.4 467.89,360.0 468.15,355.1 468.41,348.8 468.66,341.2 468.92,332.5 469.18,322.8 469.43,312.4 469.69,301.5 469.94,290.3 470.20,278.9 470.46,267.7 470.71,256.9 470.97,246.7 471.23,237.3 471.48,228.8 471.74,221.5 471.99,215.6 472.25,211.0 472.51,208.0 472.76,206.5 473.02,206.7 473.28,208.5 473.53,211.8 473.79,216.6 474.05,222.9 474.30,230.4 474.56,239.1 474.81,248.7 475.07,259.0 475.33,269.9 475.58,281.2 475.84,292.5 476.10,303.7 476.35,314.6 476.61,324.8 476.86,334.3 477.12,342.8 477.38,350.1 477.63,356.2 477.89,360.8 478.15,363.9 478.40,365.4 478.66,365.4 478.91,363.7 479.17,360.4 479.43,355.6 479.68,349.5 479.94,342.0 480.20,333.4 480.45,323.8 480.71,313.5 480.96,302.6 481.22,291.4 481.48,280.1 481.73,268.8 481.99,258.0 482.25,247.7 482.50,238.2 482.76,229.6 483.01,222.2 483.27,216.1 483.53,211.4 483.78,208.2 484.04,206.6 484.30,206.6 484.55,208.2 484.81,211.4 485.07,216.1 485.32,222.2 485.58,229.6 485.83,238.2 486.09,247.7 486.35,258.0 486.60,268.8 486.86,280.1 487.12,291.4 487.37,302.6 487.63,313.5 487.88,323.8 488.14,333.4 488.40,342.0 488.65,349.5 488.91,355.6 489.17,360.4 489.42,363.7 489.68,365.4 489.93,365.4 490.19,363.9 490.45,360.8 490.70,356.2 490.96,350.1 491.22,342.8 491.47,334.3 491.73,324.8 491.98,314.6 492.24,303.7 492.50,292.5 492.75,281.2 493.01,269.9 493.27,259.0 493.52,248.7 493.78,239.1 494.03,230.4 494.29,222.9 494.55,216.6 494.80,211.8 495.06,208.5 495.32,206.7 495.57,206.5 495.83,208.0 496.09,211.0 496.34,215.6 496.60,221.5 496.85,228.8 497.11,237.3 497.37,246.7 497.62,256.9 497.88,267.7 498.14,278.9 498.39,290.3 498.65,301.5 498.90,312.4 499.16,322.8 499.42,332.5 499.67,341.2 499.93,348.8 500.19,355.1 500.44,360.0 500.70,363.4 500.95,365.3 501.21,365.5 501.47,364.1 501.72,361.2 501.98,356.7 502.24,350.8 502.49,343.6 502.75,335.2 503.00,325.8 503.26,315.6 503.52,304.8 503.77,293.6 504.03,282.3 504.29,271.1 504.54,260.1 504.80,249.7 505.06,240.0 505.31,231.2 505.57,223.6 505.82,217.2 506.08,212.2 506.34,208.7 506.59,206.8 506.85,206.5 507.11,207.8 507.36,210.6 507.62,215.0 507.87,220.9 508.13,228.0 508.39,236.4 508.64,245.7 508.90,255.9 509.16,266.6 509.41,277.8 509.67,289.1 509.92,300.4 510.18,311.4 510.44,321.8 510.69,331.5 510.95,340.4 511.21,348.1 511.46,354.5 511.72,359.6 511.97,363.1 512.23,365.2 512.49,365.6 512.74,364.3 513.00,361.5 513.26,357.2 513.51,351.5 513.77,344.4 514.02,336.1 514.28,326.8 514.54,316.7 514.79,305.9 515.05,294.8 515.31,283.4 515.56,272.2 515.82,261.2 516.08,250.7 516.33,240.9 516.59,232.1 516.84,224.3 517.10,217.8 517.36,212.6 517.61,209.0 517.87,206.9 518.13,206.4 518.38,207.6 518.64,210.3 518.89,214.5 519.15,220.2 519.41,227.3 519.66,235.5 519.92,244.7 520.18,254.8 520.43,265.5 520.69,276.7 520.94,288.0 521.20,299.3 521.46,310.3 521.71,320.8 521.97,330.6 522.23,339.5 522.48,347.3 522.74,353.9 522.99,359.1 523.25,362.9 523.51,365.0 523.76,365.6 524.02,364.5 524.28,361.9 524.53,357.7 524.79,352.1 525.04,345.1 525.30,337.0 525.56,327.8 525.81,317.7 526.07,307.0 526.33,295.9 526.58,284.6 526.84,273.3 527.10,262.3 527.35,251.7 527.61,241.9 527.86,232.9 528.12,225.0 528.38,218.4 528.63,213.1 528.89,209.3 529.15,207.0 529.40,206.4 529.66,207.4 529.91,209.9 530.17,214.0 530.43,219.6 530.68,226.5 530.94,234.6 531.20,243.8 531.45,253.8 531.71,264.4 531.96,275.5 532.22,286.9 532.48,298.1 532.73,309.2 532.99,319.8 533.25,329.7 533.50,338.7 533.76,346.6 534.01,353.3 534.27,358.7 534.53,362.6 534.78,364.9 535.04,365.6 535.30,364.7 535.55,362.2 535.81,358.2 536.06,352.7 536.32,345.9 536.58,337.8 536.83,328.7 537.09,318.7 537.35,308.1 537.60,297.0 537.86,285.7 538.12,274.4 538.37,263.4 538.63,252.7 538.88,242.8 539.14,233.8 539.40,225.8 539.65,219.0 539.91,213.6 540.17,209.6 540.42,207.2 540.68,206.4 540.93,207.2 541.19,209.6 541.45,213.6 541.70,219.0 541.96,225.8 542.22,233.8 542.47,242.8 542.73,252.7 542.98,263.4 543.24,274.4 543.50,285.7 543.75,297.0 544.01,308.1 544.27,318.7 544.52,328.7 544.78,337.8 545.03,345.9 545.29,352.7 545.55,358.2 545.80,362.2 546.06,364.7 546.32,365.6 546.57,364.9 546.83,362.6 547.08,358.7 547.34,353.3 547.60,346.6 547.85,338.7 548.11,329.7 548.37,319.8 548.62,309.2 548.88,298.1 549.14,286.9 549.39,275.5 549.65,264.4 549.90,253.8 550.16,243.8 550.42,234.6 550.67,226.5 550.93,219.6 551.19,214.0 551.44,209.9 551.70,207.4 551.95,206.4 552.21,207.0 552.47,209.3 552.72,213.1 552.98,218.4 553.24,225.0 553.49,232.9 553.75,241.9 554.00,251.7 554.26,262.3 554.52,273.3 554.77,284.6 555.03,295.9 555.29,307.0 555.54,317.7 555.80,327.8 556.05,337.0 556.31,345.1 556.57,352.1 556.82,357.7 557.08,361.9 557.34,364.5 557.59,365.6 557.85,365.0 558.10,362.9 558.36,359.1 558.62,353.9 558.87,347.3 559.13,339.5 559.39,330.6 559.64,320.8 559.90,310.3 560.16,299.3 560.41,288.0 560.67,276.7 560.92,265.5 561.18,254.8 561.44,244.7 561.69,235.5 561.95,227.3 562.21,220.2 562.46,214.5 562.72,210.3 562.97,207.6 563.23,206.4 563.49,206.9 563.74,209.0 564.00,212.6 564.26,217.8 564.51,224.3 564.77,232.1 565.02,240.9 565.28,250.7 565.54,261.2 565.79,272.2 566.05,283.4 566.31,294.8 566.56,305.9 566.82,316.7 567.07,326.8 567.33,336.1 567.59,344.4 567.84,351.5 568.10,357.2 568.36,361.5 568.61,364.3 568.87,365.6 569.12,365.2 569.38,363.1 569.64,359.6 569.89,354.5 570.15,348.1 570.41,340.4 570.66,331.5 570.92,321.8 571.18,311.4 571.43,300.4 571.69,289.1 571.94,277.8 572.20,266.6 572.46,255.9 572.71,245.7 572.97,236.4 573.23,228.0 573.48,220.9 573.74,215.0 573.99,210.6 574.25,207.8 574.51,206.5 574.76,206.8 575.02,208.7 575.28,212.2 575.53,217.2 575.79,223.6 576.04,231.2 576.30,240.0 576.56,249.7 576.81,260.1 577.07,271.1 577.33,282.3 577.58,293.6 577.84,304.8 578.09,315.6 578.35,325.8 578.61,335.2 578.86,343.6 579.12,350.8 579.38,356.7 579.63,361.2 579.89,364.1 580.15,365.5 580.40,365.3 580.66,363.4 580.91,360.0 581.17,355.1 581.43,348.8 581.68,341.2 581.94,332.5 582.20,322.8 582.45,312.4 582.71,301.5 582.96,290.3 583.22,278.9 583.48,267.7 583.73,256.9 583.99,246.7 584.25,237.3 584.50,228.8 584.76,221.5 585.01,215.6 585.27,211.0 585.53,208.0 585.78,206.5 586.04,206.7 586.30,208.5 586.55,211.8 586.81,216.6 587.06,222.9 587.32,230.4 587.58,239.1 587.83,248.7 588.09,259.0 588.35,269.9 588.60,281.2 588.86,292.5 589.11,303.7 589.37,314.6 589.63,324.8 589.88,334.3 590.14,342.8 590.40,350.1 590.65,356.2 590.91,360.8 591.17,363.9 591.42,365.4 591.68,365.4 591.93,363.7 592.19,360.4 592.45,355.6 592.70,349.5 592.96,342.0 593.22,333.4 593.47,323.8 593.73,313.5 593.98,302.6 594.24,291.4 594.50,280.1 594.75,268.8 595.01,258.0 595.27,247.7 595.52,238.2 595.78,229.6 596.03,222.2 596.29,216.1 596.55,211.4 596.80,208.2 597.06,206.6 597.32,206.6 597.57,208.2 597.83,211.4 598.08,216.1 598.34,222.2 598.60,229.6 598.85,238.2 599.11,247.7 599.37,258.0 599.62,268.8 599.88,280.1 600.13,291.4 600.39,302.6 600.65,313.5 600.90,323.8 601.16,333.4 601.42,342.0 601.67,349.5 601.93,355.6 602.19,360.4 602.44,363.7 602.70,365.4 602.95,365.4 603.21,363.9 603.47,360.8 603.72,356.2 603.98,350.1 604.24,342.8 604.49,334.3 604.75,324.8 605.00,314.6 605.26,303.7 605.52,292.5 605.77,281.2 606.03,269.9 606.29,259.0 606.54,248.7 606.80,239.1 607.05,230.4 607.31,222.9 607.57,216.6 607.82,211.8 608.08,208.5 608.34,206.7 608.59,206.5 608.85,208.0 609.10,211.0 609.36,215.6 609.62,221.5 609.87,228.8 610.13,237.3 610.39,246.7 610.64,256.9 610.90,267.7 611.15,278.9 611.41,290.3 611.67,301.5 611.92,312.4 612.18,322.8 612.44,332.5 612.69,341.2 612.95,348.8 613.21,355.1" fill="none" stroke="#00ff00" stroke-width="1" shape-rendering="crispEdges"/>
<line x1="105" y1="243.5" x2="126" y2="243.5" stroke="#00ff00" stroke-width="1"/>
<text x="134.6" y="248" font-size="12" fill="#9a9a9a" text-anchor="start" font-weight="normal" textLength="32.2" lengthAdjust="spacingAndGlyphs" >Signal</text>
<line x1="754.5" y1="192" x2="754.5" y2="381" stroke="#9a9a9a" stroke-width="1"/>
<line x1="754" y1="380.5" x2="1224" y2="380.5" stroke="#9a9a9a" stroke-width="1"/>
<line x1="755" y1="362.5" x2="761" y2="362.5" stroke="#9a9a9a" stroke-width="1"/>
<line x1="755" y1="310.5" x2="761" y2="310.5" stroke="#9a9a9a" stroke-width="1"/>
<line x1="755" y1="259.5" x2="761" y2="259.5" stroke="#9a9a9a" stroke-width="1"/>
<line x1="755" y1="208.5" x2="761" y2="208.5" stroke="#9a9a9a" stroke-width="1"/>
<line x1="755" y1="336.5" x2="759" y2="336.5" stroke="#8a8a8a" stroke-width="1"/>
<line x1="755" y1="285.5" x2="759" y2="285.5" stroke="#8a8a8a" stroke-width="1"/>
<line x1="755" y1="234.5" x2="759" y2="234.5" stroke="#8a8a8a" stroke-width="1"/>
<line x1="755" y1="377.5" x2="758" y2="377.5" stroke="#646464" stroke-width="1"/>
<line x1="755" y1="372.5" x2="758" y2="372.5" stroke="#646464" stroke-width="1"/>
<line x1="755" y1="367.5" x2="758" y2="367.5" stroke="#646464" stroke-width="1"/>
<line x1="755" y1="356.5" x2="758" y2="356.5" stroke="#646464" stroke-width="1"/>
<line x1="755" y1="351.5" x2="758" y2="351.5" stroke="#646464" stroke-width="1"/>
<line x1="755" y1="346.5" x2="758" y2="346.5" stroke="#646464" stroke-width="1"/>
<line x1="755" y1="341.5" x2="758" y2="341.5" stroke="#646464" stroke-width="1"/>
<line x1="755" y1="331.5" x2="758" y2="331.5" stroke="#646464" stroke-width="1"/>
<line x1="755" y1="326.5" x2="758" y2="326.5" stroke="#646464" stroke-width="1"/>
<line x1="755" y1="321.5" x2="758" y2="321.5" stroke="#646464" stroke-width="1"/>
<line x1="755" y1="316.5" x2="758" y2="316.5" stroke="#646464" stroke-width="1"/>
<line x1="755" y1="305.5" x2="758" y2="305.5" stroke="#646464" stroke-width="1"/>
<line x1="755" y1="300.5" x2="758" y2="300.5" stroke="#646464" stroke-width="1"/>
<line x1="755" y1="295.5" x2="758" y2="295.5" stroke="#646464" stroke-width="1"/>
<line x1="755" y1="290.5" x2="758" y2="290.5" stroke="#646464" stroke-width="1"/>
<line x1="755" y1="280.5" x2="758" y2="280.5" stroke="#646464" stroke-width="1"/>
<line x1="755" y1="275.5" x2="758" y2="275.5" stroke="#646464" stroke-width="1"/>
<line x1="755" y1="269.5" x2="758" y2="269.5" stroke="#646464" stroke-width="1"/>
<line x1="755" y1="264.5" x2="758" y2="264.5" stroke="#646464" stroke-width="1"/>
<line x1="755" y1="254.5" x2="758" y2="254.5" stroke="#646464" stroke-width="1"/>
<line x1="755" y1="249.5" x2="758" y2="249.5" stroke="#646464" stroke-width="1"/>
<line x1="755" y1="244.5" x2="758" y2="244.5" stroke="#646464" stroke-width="1"/>
<line x1="755" y1="239.5" x2="758" y2="239.5" stroke="#646464" stroke-width="1"/>
<line x1="755" y1="228.5" x2="758" y2="228.5" stroke="#646464" stroke-width="1"/>
<line x1="755" y1="223.5" x2="758" y2="223.5" stroke="#646464" stroke-width="1"/>
<line x1="755" y1="218.5" x2="758" y2="218.5" stroke="#646464" stroke-width="1"/>
<line x1="755" y1="213.5" x2="758" y2="213.5" stroke="#646464" stroke-width="1"/>
<line x1="755" y1="203.5" x2="758" y2="203.5" stroke="#646464" stroke-width="1"/>
<line x1="755" y1="198.5" x2="758" y2="198.5" stroke="#646464" stroke-width="1"/>
<line x1="755" y1="193.5" x2="758" y2="193.5" stroke="#646464" stroke-width="1"/>
<text x="749.5" y="213" font-size="12" fill="#a8a8a8" text-anchor="end" font-weight="normal" textLength="79.2" lengthAdjust="spacingAndGlyphs" >76.603565646</text>
<text x="749.5" y="264.2" font-size="12" fill="#a8a8a8" text-anchor="end" font-weight="normal" textLength="79.2" lengthAdjust="spacingAndGlyphs" >76.603565645</text>
<text x="749.5" y="315.4" font-size="12" fill="#a8a8a8" text-anchor="end" font-weight="normal" textLength="79.2" lengthAdjust="spacingAndGlyphs" >76.603565644</text>
<text x="749.5" y="366.6" font-size="12" fill="#a8a8a8" text-anchor="end" font-weight="normal" textLength="79.2" lengthAdjust="spacingAndGlyphs" >76.603565643</text>
<line x1="775.5" y1="380" x2="775.5" y2="374" stroke="#9a9a9a" stroke-width="1"/>
<line x1="861.5" y1="380" x2="861.5" y2="374" stroke="#9a9a9a" stroke-width="1"/>
<line x1="947.5" y1="380" x2="947.5" y2="374" stroke="#9a9a9a" stroke-width="1"/>
<line x1="1033.5" y1="380" x2="1033.5" y2="374" stroke="#9a9a9a" stroke-width="1"/>
<line x1="1119.5" y1="380" x2="1119.5" y2="374" stroke="#9a9a9a" stroke-width="1"/>
<line x1="1205.5" y1="380" x2="1205.5" y2="374" stroke="#9a9a9a" stroke-width="1"/>
<line x1="758.5" y1="380" x2="758.5" y2="376" stroke="#646464" stroke-width="1"/>
<line x1="766.5" y1="380" x2="766.5" y2="376" stroke="#646464" stroke-width="1"/>
<line x1="784.5" y1="380" x2="784.5" y2="376" stroke="#646464" stroke-width="1"/>
<line x1="792.5" y1="380" x2="792.5" y2="376" stroke="#646464" stroke-width="1"/>
<line x1="801.5" y1="380" x2="801.5" y2="376" stroke="#646464" stroke-width="1"/>
<line x1="809.5" y1="380" x2="809.5" y2="376" stroke="#646464" stroke-width="1"/>
<line x1="818.5" y1="380" x2="818.5" y2="376" stroke="#646464" stroke-width="1"/>
<line x1="827.5" y1="380" x2="827.5" y2="376" stroke="#646464" stroke-width="1"/>
<line x1="835.5" y1="380" x2="835.5" y2="376" stroke="#646464" stroke-width="1"/>
<line x1="844.5" y1="380" x2="844.5" y2="376" stroke="#646464" stroke-width="1"/>
<line x1="852.5" y1="380" x2="852.5" y2="376" stroke="#646464" stroke-width="1"/>
<line x1="870.5" y1="380" x2="870.5" y2="376" stroke="#646464" stroke-width="1"/>
<line x1="878.5" y1="380" x2="878.5" y2="376" stroke="#646464" stroke-width="1"/>
<line x1="887.5" y1="380" x2="887.5" y2="376" stroke="#646464" stroke-width="1"/>
<line x1="895.5" y1="380" x2="895.5" y2="376" stroke="#646464" stroke-width="1"/>
<line x1="904.5" y1="380" x2="904.5" y2="376" stroke="#646464" stroke-width="1"/>
<line x1="913.5" y1="380" x2="913.5" y2="376" stroke="#646464" stroke-width="1"/>
<line x1="921.5" y1="380" x2="921.5" y2="376" stroke="#646464" stroke-width="1"/>
<line x1="930.5" y1="380" x2="930.5" y2="376" stroke="#646464" stroke-width="1"/>
<line x1="938.5" y1="380" x2="938.5" y2="376" stroke="#646464" stroke-width="1"/>
<line x1="956.5" y1="380" x2="956.5" y2="376" stroke="#646464" stroke-width="1"/>
<line x1="964.5" y1="380" x2="964.5" y2="376" stroke="#646464" stroke-width="1"/>
<line x1="973.5" y1="380" x2="973.5" y2="376" stroke="#646464" stroke-width="1"/>
<line x1="981.5" y1="380" x2="981.5" y2="376" stroke="#646464" stroke-width="1"/>
<line x1="990.5" y1="380" x2="990.5" y2="376" stroke="#646464" stroke-width="1"/>
<line x1="999.5" y1="380" x2="999.5" y2="376" stroke="#646464" stroke-width="1"/>
<line x1="1007.5" y1="380" x2="1007.5" y2="376" stroke="#646464" stroke-width="1"/>
<line x1="1016.5" y1="380" x2="1016.5" y2="376" stroke="#646464" stroke-width="1"/>
<line x1="1024.5" y1="380" x2="1024.5" y2="376" stroke="#646464" stroke-width="1"/>
<line x1="1042.5" y1="380" x2="1042.5" y2="376" stroke="#646464" stroke-width="1"/>
<line x1="1050.5" y1="380" x2="1050.5" y2="376" stroke="#646464" stroke-width="1"/>
<line x1="1059.5" y1="380" x2="1059.5" y2="376" stroke="#646464" stroke-width="1"/>
<line x1="1067.5" y1="380" x2="1067.5" y2="376" stroke="#646464" stroke-width="1"/>
<line x1="1076.5" y1="380" x2="1076.5" y2="376" stroke="#646464" stroke-width="1"/>
<line x1="1085.5" y1="380" x2="1085.5" y2="376" stroke="#646464" stroke-width="1"/>
<line x1="1093.5" y1="380" x2="1093.5" y2="376" stroke="#646464" stroke-width="1"/>
<line x1="1102.5" y1="380" x2="1102.5" y2="376" stroke="#646464" stroke-width="1"/>
<line x1="1110.5" y1="380" x2="1110.5" y2="376" stroke="#646464" stroke-width="1"/>
<line x1="1128.5" y1="380" x2="1128.5" y2="376" stroke="#646464" stroke-width="1"/>
<line x1="1136.5" y1="380" x2="1136.5" y2="376" stroke="#646464" stroke-width="1"/>
<line x1="1145.5" y1="380" x2="1145.5" y2="376" stroke="#646464" stroke-width="1"/>
<line x1="1153.5" y1="380" x2="1153.5" y2="376" stroke="#646464" stroke-width="1"/>
<line x1="1162.5" y1="380" x2="1162.5" y2="376" stroke="#646464" stroke-width="1"/>
<line x1="1171.5" y1="380" x2="1171.5" y2="376" stroke="#646464" stroke-width="1"/>
<line x1="1179.5" y1="380" x2="1179.5" y2="376" stroke="#646464" stroke-width="1"/>
<line x1="1188.5" y1="380" x2="1188.5" y2="376" stroke="#646464" stroke-width="1"/>
<line x1="1196.5" y1="380" x2="1196.5" y2="376" stroke="#646464" stroke-width="1"/>
<line x1="1214.5" y1="380" x2="1214.5" y2="376" stroke="#646464" stroke-width="1"/>
<text x="775.8" y="394" font-size="12" fill="#a8a8a8" text-anchor="middle" font-weight="normal" >0</text>
<text x="861.8" y="394" font-size="12" fill="#a8a8a8" text-anchor="middle" font-weight="normal" >20</text>
<text x="947.8" y="394" font-size="12" fill="#a8a8a8" text-anchor="middle" font-weight="normal" >40</text>
<text x="1033.8" y="394" font-size="12" fill="#a8a8a8" text-anchor="middle" font-weight="normal" >60</text>
<text x="1119.8" y="394" font-size="12" fill="#a8a8a8" text-anchor="middle" font-weight="normal" >80</text>
<text x="1205.8" y="394" font-size="12" fill="#a8a8a8" text-anchor="middle" font-weight="normal" >100</text>
<text x="986" y="415.9" font-size="12" fill="#a8a8a8" text-anchor="middle" font-weight="normal" textLength="105" lengthAdjust="spacingAndGlyphs" >History (Latest 100)</text>
<text x="656.5" y="285.6" font-size="12" fill="#a8a8a8" text-anchor="middle" font-weight="normal" textLength="163" lengthAdjust="spacingAndGlyphs" transform="rotate(-90 656.5 285.6)">Sound Pressure Level (dB SPL)</text>
<text x="988" y="183.7" font-size="15" fill="#ffff00" text-anchor="middle" font-weight="bold" textLength="158" lengthAdjust="spacingAndGlyphs" >Total Magnitude Trend</text>
<polyline points="775.5,310.0 779.8,305.8 784.1,209.2 788.4,304.1 792.7,270.9 797.0,237.8 801.3,357.9 805.6,282.3 809.9,263.5 814.2,345.3 818.5,226.9 822.8,257.0 827.1,320.0 831.4,228.5 835.7,294.0 840.0,338.5 844.3,248.7 848.6,325.1 852.9,267.0 857.2,210.9 861.5,319.2 865.8,255.4 870.1,253.4 874.4,365.4 878.7,268.0 883.0,272.2 887.3,334.3 891.6,214.3 895.9,263.8 900.2,310.8 904.5,230.2 908.8,331.0 913.1,319.2 917.4,244.5 921.7,335.2 926.0,250.4 930.3,219.3 934.6,329.3 938.9,248.7 943.2,275.6 947.5,364.6 951.8,253.4 956.1,287.3 960.4,315.9 964.7,206.7 969.0,277.0 973.3,294.9 977.6,237.8 981.9,352.0 986.2,294.0 990.5,247.9 994.8,336.9 999.1,234.4 1003.4,232.7 1007.7,331.8 1012.0,242.8 1016.3,299.0 1020.6,354.5 1024.9,243.7 1029.2,300.0 1033.5,293.2 1037.8,206.7 1042.1,310.8 1046.4,277.2 1050.7,249.5 1055.0,362.9 1059.3,278.9 1063.6,253.7 1067.9,333.5 1072.2,220.2 1076.5,267.0 1080.8,329.4 1085.1,240.3 1089.4,314.0 1093.7,335.3 1098.0,236.1 1102.3,315.1 1106.6,270.6 1110.9,210.9 1115.2,328.6 1119.5,268.1 1123.8,263.0 1128.1,366.4 1132.4,258.0 1136.7,262.2 1141.0,323.5 1145.3,210.1 1149.6,274.0 1153.9,320.2 1158.2,241.2 1162.5,338.7 1166.8,287.4 1171.1,234.5 1175.4,324.4 1179.7,248.7 1184.0,223.5 1188.3,339.5 1192.6,259.7 1196.9,284.0 1201.2,361.3" fill="none" stroke="#ffff00" stroke-width="1" shape-rendering="crispEdges"/>
<line x1="794.5" y1="243.5" x2="815" y2="243.5" stroke="#ffff00" stroke-width="1"/>
<text x="823" y="248" font-size="12" fill="#9a9a9a" text-anchor="start" font-weight="normal" >Measured Level</text>
<line x1="74.5" y1="455" x2="74.5" y2="645" stroke="#9a9a9a" stroke-width="1"/>
<line x1="74" y1="644.5" x2="638" y2="644.5" stroke="#9a9a9a" stroke-width="1"/>
<line x1="75" y1="630.5" x2="81" y2="630.5" stroke="#9a9a9a" stroke-width="1"/>
<line x1="75" y1="578.5" x2="81" y2="578.5" stroke="#9a9a9a" stroke-width="1"/>
<line x1="75" y1="526.5" x2="81" y2="526.5" stroke="#9a9a9a" stroke-width="1"/>
<line x1="75" y1="475.5" x2="81" y2="475.5" stroke="#9a9a9a" stroke-width="1"/>
<line x1="75" y1="640.5" x2="79" y2="640.5" stroke="#8a8a8a" stroke-width="1"/>
<line x1="75" y1="620.5" x2="79" y2="620.5" stroke="#8a8a8a" stroke-width="1"/>
<line x1="75" y1="609.5" x2="79" y2="609.5" stroke="#8a8a8a" stroke-width="1"/>
<line x1="75" y1="599.5" x2="79" y2="599.5" stroke="#8a8a8a" stroke-width="1"/>
<line x1="75" y1="589.5" x2="79" y2="589.5" stroke="#8a8a8a" stroke-width="1"/>
<line x1="75" y1="568.5" x2="79" y2="568.5" stroke="#8a8a8a" stroke-width="1"/>
<line x1="75" y1="558.5" x2="79" y2="558.5" stroke="#8a8a8a" stroke-width="1"/>
<line x1="75" y1="547.5" x2="79" y2="547.5" stroke="#8a8a8a" stroke-width="1"/>
<line x1="75" y1="537.5" x2="79" y2="537.5" stroke="#8a8a8a" stroke-width="1"/>
<line x1="75" y1="516.5" x2="79" y2="516.5" stroke="#8a8a8a" stroke-width="1"/>
<line x1="75" y1="506.5" x2="79" y2="506.5" stroke="#8a8a8a" stroke-width="1"/>
<line x1="75" y1="495.5" x2="79" y2="495.5" stroke="#8a8a8a" stroke-width="1"/>
<line x1="75" y1="485.5" x2="79" y2="485.5" stroke="#8a8a8a" stroke-width="1"/>
<line x1="75" y1="464.5" x2="79" y2="464.5" stroke="#8a8a8a" stroke-width="1"/>
<line x1="75" y1="635.5" x2="78" y2="635.5" stroke="#646464" stroke-width="1"/>
<line x1="75" y1="625.5" x2="78" y2="625.5" stroke="#646464" stroke-width="1"/>
<line x1="75" y1="615.5" x2="78" y2="615.5" stroke="#646464" stroke-width="1"/>
<line x1="75" y1="604.5" x2="78" y2="604.5" stroke="#646464" stroke-width="1"/>
<line x1="75" y1="594.5" x2="78" y2="594.5" stroke="#646464" stroke-width="1"/>
<line x1="75" y1="583.5" x2="78" y2="583.5" stroke="#646464" stroke-width="1"/>
<line x1="75" y1="573.5" x2="78" y2="573.5" stroke="#646464" stroke-width="1"/>
<line x1="75" y1="563.5" x2="78" y2="563.5" stroke="#646464" stroke-width="1"/>
<line x1="75" y1="552.5" x2="78" y2="552.5" stroke="#646464" stroke-width="1"/>
<line x1="75" y1="542.5" x2="78" y2="542.5" stroke="#646464" stroke-width="1"/>
<line x1="75" y1="532.5" x2="78" y2="532.5" stroke="#646464" stroke-width="1"/>
<line x1="75" y1="521.5" x2="78" y2="521.5" stroke="#646464" stroke-width="1"/>
<line x1="75" y1="511.5" x2="78" y2="511.5" stroke="#646464" stroke-width="1"/>
<line x1="75" y1="500.5" x2="78" y2="500.5" stroke="#646464" stroke-width="1"/>
<line x1="75" y1="490.5" x2="78" y2="490.5" stroke="#646464" stroke-width="1"/>
<line x1="75" y1="480.5" x2="78" y2="480.5" stroke="#646464" stroke-width="1"/>
<line x1="75" y1="469.5" x2="78" y2="469.5" stroke="#646464" stroke-width="1"/>
<line x1="75" y1="459.5" x2="78" y2="459.5" stroke="#646464" stroke-width="1"/>
<text x="69.4" y="479.55" font-size="12" fill="#a8a8a8" text-anchor="end" font-weight="normal" >0.15</text>
<text x="69.4" y="531.4" font-size="12" fill="#a8a8a8" text-anchor="end" font-weight="normal" >0.10</text>
<text x="69.4" y="583.25" font-size="12" fill="#a8a8a8" text-anchor="end" font-weight="normal" >0.05</text>
<text x="69.4" y="635.1" font-size="12" fill="#a8a8a8" text-anchor="end" font-weight="normal" >0</text>
<line x1="97.5" y1="644" x2="97.5" y2="638" stroke="#9a9a9a" stroke-width="1"/>
<line x1="200.5" y1="644" x2="200.5" y2="638" stroke="#9a9a9a" stroke-width="1"/>
<line x1="304.5" y1="644" x2="304.5" y2="638" stroke="#9a9a9a" stroke-width="1"/>
<line x1="407.5" y1="644" x2="407.5" y2="638" stroke="#9a9a9a" stroke-width="1"/>
<line x1="511.5" y1="644" x2="511.5" y2="638" stroke="#9a9a9a" stroke-width="1"/>
<line x1="614.5" y1="644" x2="614.5" y2="638" stroke="#9a9a9a" stroke-width="1"/>
<line x1="76.5" y1="644" x2="76.5" y2="639" stroke="#8a8a8a" stroke-width="1"/>
<line x1="118.5" y1="644" x2="118.5" y2="639" stroke="#8a8a8a" stroke-width="1"/>
<line x1="138.5" y1="644" x2="138.5" y2="639" stroke="#8a8a8a" stroke-width="1"/>
<line x1="159.5" y1="644" x2="159.5" y2="639" stroke="#8a8a8a" stroke-width="1"/>
<line x1="180.5" y1="644" x2="180.5" y2="639" stroke="#8a8a8a" stroke-width="1"/>
<line x1="221.5" y1="644" x2="221.5" y2="639" stroke="#8a8a8a" stroke-width="1"/>
<line x1="242.5" y1="644" x2="242.5" y2="639" stroke="#8a8a8a" stroke-width="1"/>
<line x1="262.5" y1="644" x2="262.5" y2="639" stroke="#8a8a8a" stroke-width="1"/>
<line x1="283.5" y1="644" x2="283.5" y2="639" stroke="#8a8a8a" stroke-width="1"/>
<line x1="324.5" y1="644" x2="324.5" y2="639" stroke="#8a8a8a" stroke-width="1"/>
<line x1="345.5" y1="644" x2="345.5" y2="639" stroke="#8a8a8a" stroke-width="1"/>
<line x1="366.5" y1="644" x2="366.5" y2="639" stroke="#8a8a8a" stroke-width="1"/>
<line x1="387.5" y1="644" x2="387.5" y2="639" stroke="#8a8a8a" stroke-width="1"/>
<line x1="428.5" y1="644" x2="428.5" y2="639" stroke="#8a8a8a" stroke-width="1"/>
<line x1="449.5" y1="644" x2="449.5" y2="639" stroke="#8a8a8a" stroke-width="1"/>
<line x1="469.5" y1="644" x2="469.5" y2="639" stroke="#8a8a8a" stroke-width="1"/>
<line x1="490.5" y1="644" x2="490.5" y2="639" stroke="#8a8a8a" stroke-width="1"/>
<line x1="531.5" y1="644" x2="531.5" y2="639" stroke="#8a8a8a" stroke-width="1"/>
<line x1="552.5" y1="644" x2="552.5" y2="639" stroke="#8a8a8a" stroke-width="1"/>
<line x1="573.5" y1="644" x2="573.5" y2="639" stroke="#8a8a8a" stroke-width="1"/>
<line x1="593.5" y1="644" x2="593.5" y2="639" stroke="#8a8a8a" stroke-width="1"/>
<line x1="635.5" y1="644" x2="635.5" y2="639" stroke="#8a8a8a" stroke-width="1"/>
<line x1="87.5" y1="644" x2="87.5" y2="640" stroke="#646464" stroke-width="1"/>
<line x1="107.5" y1="644" x2="107.5" y2="640" stroke="#646464" stroke-width="1"/>
<line x1="128.5" y1="644" x2="128.5" y2="640" stroke="#646464" stroke-width="1"/>
<line x1="149.5" y1="644" x2="149.5" y2="640" stroke="#646464" stroke-width="1"/>
<line x1="169.5" y1="644" x2="169.5" y2="640" stroke="#646464" stroke-width="1"/>
<line x1="190.5" y1="644" x2="190.5" y2="640" stroke="#646464" stroke-width="1"/>
<line x1="211.5" y1="644" x2="211.5" y2="640" stroke="#646464" stroke-width="1"/>
<line x1="231.5" y1="644" x2="231.5" y2="640" stroke="#646464" stroke-width="1"/>
<line x1="252.5" y1="644" x2="252.5" y2="640" stroke="#646464" stroke-width="1"/>
<line x1="273.5" y1="644" x2="273.5" y2="640" stroke="#646464" stroke-width="1"/>
<line x1="293.5" y1="644" x2="293.5" y2="640" stroke="#646464" stroke-width="1"/>
<line x1="314.5" y1="644" x2="314.5" y2="640" stroke="#646464" stroke-width="1"/>
<line x1="335.5" y1="644" x2="335.5" y2="640" stroke="#646464" stroke-width="1"/>
<line x1="356.5" y1="644" x2="356.5" y2="640" stroke="#646464" stroke-width="1"/>
<line x1="376.5" y1="644" x2="376.5" y2="640" stroke="#646464" stroke-width="1"/>
<line x1="397.5" y1="644" x2="397.5" y2="640" stroke="#646464" stroke-width="1"/>
<line x1="418.5" y1="644" x2="418.5" y2="640" stroke="#646464" stroke-width="1"/>
<line x1="438.5" y1="644" x2="438.5" y2="640" stroke="#646464" stroke-width="1"/>
<line x1="459.5" y1="644" x2="459.5" y2="640" stroke="#646464" stroke-width="1"/>
<line x1="480.5" y1="644" x2="480.5" y2="640" stroke="#646464" stroke-width="1"/>
<line x1="500.5" y1="644" x2="500.5" y2="640" stroke="#646464" stroke-width="1"/>
<line x1="521.5" y1="644" x2="521.5" y2="640" stroke="#646464" stroke-width="1"/>
<line x1="542.5" y1="644" x2="542.5" y2="640" stroke="#646464" stroke-width="1"/>
<line x1="562.5" y1="644" x2="562.5" y2="640" stroke="#646464" stroke-width="1"/>
<line x1="583.5" y1="644" x2="583.5" y2="640" stroke="#646464" stroke-width="1"/>
<line x1="604.5" y1="644" x2="604.5" y2="640" stroke="#646464" stroke-width="1"/>
<line x1="624.5" y1="644" x2="624.5" y2="640" stroke="#646464" stroke-width="1"/>
<text x="97.7" y="657.8" font-size="12" fill="#a8a8a8" text-anchor="middle" font-weight="normal" >0</text>
<text x="201.15" y="657.8" font-size="12" fill="#a8a8a8" text-anchor="middle" font-weight="normal" >0.5</text>
<text x="304.6" y="657.8" font-size="12" fill="#a8a8a8" text-anchor="middle" font-weight="normal" >1.0</text>
<text x="408.05" y="657.8" font-size="12" fill="#a8a8a8" text-anchor="middle" font-weight="normal" >1.5</text>
<text x="511.5" y="657.8" font-size="12" fill="#a8a8a8" text-anchor="middle" font-weight="normal" >2.0</text>
<text x="614.95" y="657.8" font-size="12" fill="#a8a8a8" text-anchor="middle" font-weight="normal" >2.5</text>
<text x="354.9" y="679.8" font-size="12" fill="#a8a8a8" text-anchor="middle" font-weight="normal" textLength="86.8" lengthAdjust="spacingAndGlyphs" >Frequency (kHz)</text>
<text x="32.2" y="551" font-size="12" fill="#a8a8a8" text-anchor="middle" font-weight="normal" textLength="68.6" lengthAdjust="spacingAndGlyphs" transform="rotate(-90 32.2 551)">Relative Mag</text>
<text x="355" y="447.5" font-size="15" fill="#00ffff" text-anchor="middle" font-weight="bold" textLength="180" lengthAdjust="spacingAndGlyphs" >Spectral Intensity (Linear)</text>
<line x1="96" y1="630.5" x2="637" y2="630.5" stroke="#a8a4a4" stroke-width="1"/>
<rect x="282.5" y="629.5" width="9" height="1" fill="#0d4f4f" stroke="#a8a4a4" stroke-width="1"/>
<rect x="291.5" y="625.5" width="4" height="5" fill="#0d4f4f" stroke="#a8a4a4" stroke-width="1"/>
<rect x="295.5" y="593.5" width="5" height="37" fill="#0d4f4f" stroke="#a8a4a4" stroke-width="1"/>
<rect x="300.5" y="469.5" width="4" height="161" fill="#0d4f4f" stroke="#a8a4a4" stroke-width="1"/>
<rect x="304.5" y="481.5" width="4" height="149" fill="#0d4f4f" stroke="#a8a4a4" stroke-width="1"/>
<rect x="308.5" y="604.5" width="5" height="26" fill="#0d4f4f" stroke="#a8a4a4" stroke-width="1"/>
<rect x="313.5" y="626.5" width="4" height="4" fill="#0d4f4f" stroke="#a8a4a4" stroke-width="1"/>
<rect x="317.5" y="629.5" width="10" height="1" fill="#0d4f4f" stroke="#a8a4a4" stroke-width="1"/>
<polyline points="287.0,629.5 290.7,628.7 293.3,623.8 294.7,615.8 296.4,607.8 296.9,600.7 297.8,593.6 298.4,566.0 299.2,538.0 301.0,510.0 301.4,481.0 302.3,470.4 303.2,470.9 305.0,476.2 306.3,479.8 307.7,485.6 308.1,512.7 309.0,540.2 310.2,567.8 311.1,595.8 312.0,605.1 313.3,612.2 314.4,618.4 315.6,623.8 316.9,627.3 319.6,628.7 323.0,629.5" fill="none" stroke="#00ffff" stroke-width="1" shape-rendering="crispEdges"/>
<line x1="114" y1="506.5" x2="135" y2="506.5" stroke="#00ffff" stroke-width="1"/>
<text x="143" y="512" font-size="12" fill="#a8a8a8" text-anchor="start" font-weight="normal" >Spectrum</text>
<line x1="688.5" y1="455" x2="688.5" y2="664" stroke="#9a9a9a" stroke-width="1"/>
<line x1="688" y1="663.5" x2="1224" y2="663.5" stroke="#9a9a9a" stroke-width="1"/>
<line x1="689" y1="641.5" x2="695" y2="641.5" stroke="#9a9a9a" stroke-width="1"/>
<line x1="689" y1="585.5" x2="695" y2="585.5" stroke="#9a9a9a" stroke-width="1"/>
<line x1="689" y1="529.5" x2="695" y2="529.5" stroke="#9a9a9a" stroke-width="1"/>
<line x1="689" y1="474.5" x2="695" y2="474.5" stroke="#9a9a9a" stroke-width="1"/>
<line x1="689" y1="652.5" x2="693" y2="652.5" stroke="#8a8a8a" stroke-width="1"/>
<line x1="689" y1="630.5" x2="693" y2="630.5" stroke="#8a8a8a" stroke-width="1"/>
<line x1="689" y1="618.5" x2="693" y2="618.5" stroke="#8a8a8a" stroke-width="1"/>
<line x1="689" y1="607.5" x2="693" y2="607.5" stroke="#8a8a8a" stroke-width="1"/>
<line x1="689" y1="596.5" x2="693" y2="596.5" stroke="#8a8a8a" stroke-width="1"/>
<line x1="689" y1="574.5" x2="693" y2="574.5" stroke="#8a8a8a" stroke-width="1"/>
<line x1="689" y1="563.5" x2="693" y2="563.5" stroke="#8a8a8a" stroke-width="1"/>
<line x1="689" y1="552.5" x2="693" y2="552.5" stroke="#8a8a8a" stroke-width="1"/>
<line x1="689" y1="540.5" x2="693" y2="540.5" stroke="#8a8a8a" stroke-width="1"/>
<line x1="689" y1="518.5" x2="693" y2="518.5" stroke="#8a8a8a" stroke-width="1"/>
<line x1="689" y1="507.5" x2="693" y2="507.5" stroke="#8a8a8a" stroke-width="1"/>
<line x1="689" y1="496.5" x2="693" y2="496.5" stroke="#8a8a8a" stroke-width="1"/>
<line x1="689" y1="485.5" x2="693" y2="485.5" stroke="#8a8a8a" stroke-width="1"/>
<line x1="689" y1="462.5" x2="693" y2="462.5" stroke="#8a8a8a" stroke-width="1"/>
<line x1="689" y1="657.5" x2="693" y2="657.5" stroke="#646464" stroke-width="1"/>
<line x1="689" y1="646.5" x2="693" y2="646.5" stroke="#646464" stroke-width="1"/>
<line x1="689" y1="635.5" x2="693" y2="635.5" stroke="#646464" stroke-width="1"/>
<line x1="689" y1="624.5" x2="693" y2="624.5" stroke="#646464" stroke-width="1"/>
<line x1="689" y1="613.5" x2="693" y2="613.5" stroke="#646464" stroke-width="1"/>
<line x1="689" y1="602.5" x2="693" y2="602.5" stroke="#646464" stroke-width="1"/>
<line x1="689" y1="591.5" x2="693" y2="591.5" stroke="#646464" stroke-width="1"/>
<line x1="689" y1="579.5" x2="693" y2="579.5" stroke="#646464" stroke-width="1"/>
<line x1="689" y1="568.5" x2="693" y2="568.5" stroke="#646464" stroke-width="1"/>
<line x1="689" y1="557.5" x2="693" y2="557.5" stroke="#646464" stroke-width="1"/>
<line x1="689" y1="546.5" x2="693" y2="546.5" stroke="#646464" stroke-width="1"/>
<line x1="689" y1="535.5" x2="693" y2="535.5" stroke="#646464" stroke-width="1"/>
<line x1="689" y1="524.5" x2="693" y2="524.5" stroke="#646464" stroke-width="1"/>
<line x1="689" y1="513.5" x2="693" y2="513.5" stroke="#646464" stroke-width="1"/>
<line x1="689" y1="501.5" x2="693" y2="501.5" stroke="#646464" stroke-width="1"/>
<line x1="689" y1="490.5" x2="693" y2="490.5" stroke="#646464" stroke-width="1"/>
<line x1="689" y1="479.5" x2="693" y2="479.5" stroke="#646464" stroke-width="1"/>
<line x1="689" y1="468.5" x2="693" y2="468.5" stroke="#646464" stroke-width="1"/>
<line x1="689" y1="457.5" x2="693" y2="457.5" stroke="#646464" stroke-width="1"/>
<text x="684" y="479.1" font-size="12" fill="#a8a8a8" text-anchor="end" font-weight="normal" >100</text>
<text x="684" y="534.8" font-size="12" fill="#a8a8a8" text-anchor="end" font-weight="normal" >50</text>
<text x="684" y="590.5" font-size="12" fill="#a8a8a8" text-anchor="end" font-weight="normal" >0</text>
<text x="684" y="646.2" font-size="12" fill="#a8a8a8" text-anchor="end" font-weight="normal" >-50</text>
<line x1="709.5" y1="663" x2="709.5" y2="657" stroke="#9a9a9a" stroke-width="1"/>
<line x1="751.5" y1="663" x2="751.5" y2="657" stroke="#9a9a9a" stroke-width="1"/>
<line x1="780.5" y1="663" x2="780.5" y2="657" stroke="#9a9a9a" stroke-width="1"/>
<line x1="803.5" y1="663" x2="803.5" y2="657" stroke="#9a9a9a" stroke-width="1"/>
<line x1="821.5" y1="663" x2="821.5" y2="657" stroke="#9a9a9a" stroke-width="1"/>
<line x1="837.5" y1="663" x2="837.5" y2="657" stroke="#9a9a9a" stroke-width="1"/>
<line x1="851.5" y1="663" x2="851.5" y2="657" stroke="#9a9a9a" stroke-width="1"/>
<line x1="863.5" y1="663" x2="863.5" y2="657" stroke="#9a9a9a" stroke-width="1"/>
<line x1="873.5" y1="663" x2="873.5" y2="657" stroke="#9a9a9a" stroke-width="1"/>
<line x1="944.5" y1="663" x2="944.5" y2="657" stroke="#9a9a9a" stroke-width="1"/>
<line x1="985.5" y1="663" x2="985.5" y2="657" stroke="#9a9a9a" stroke-width="1"/>
<line x1="1015.5" y1="663" x2="1015.5" y2="657" stroke="#9a9a9a" stroke-width="1"/>
<line x1="1037.5" y1="663" x2="1037.5" y2="657" stroke="#9a9a9a" stroke-width="1"/>
<line x1="1056.5" y1="663" x2="1056.5" y2="657" stroke="#9a9a9a" stroke-width="1"/>
<line x1="1072.5" y1="663" x2="1072.5" y2="657" stroke="#9a9a9a" stroke-width="1"/>
<line x1="1085.5" y1="663" x2="1085.5" y2="657" stroke="#9a9a9a" stroke-width="1"/>
<line x1="1097.5" y1="663" x2="1097.5" y2="657" stroke="#9a9a9a" stroke-width="1"/>
<line x1="1108.5" y1="663" x2="1108.5" y2="657" stroke="#9a9a9a" stroke-width="1"/>
<line x1="1179.5" y1="663" x2="1179.5" y2="657" stroke="#9a9a9a" stroke-width="1"/>
<line x1="1220.5" y1="663" x2="1220.5" y2="657" stroke="#9a9a9a" stroke-width="1"/>
<text x="709.8" y="676.5" font-size="12" fill="#a8a8a8" text-anchor="middle">2·10<tspan font-size="6" dy="-3.7">1</tspan></text>
<text x="751.11" y="676.5" font-size="12" fill="#a8a8a8" text-anchor="middle">3·10<tspan font-size="6" dy="-3.7">1</tspan></text>
<text x="780.42" y="676.5" font-size="12" fill="#a8a8a8" text-anchor="middle">4·10<tspan font-size="6" dy="-3.7">1</tspan></text>
<text x="803.16" y="676.5" font-size="12" fill="#a8a8a8" text-anchor="middle">5·10<tspan font-size="6" dy="-3.7">1</tspan></text>
<text x="821.73" y="676.5" font-size="12" fill="#a8a8a8" text-anchor="middle">6·10<tspan font-size="6" dy="-3.7">1</tspan></text>
<text x="837.44" y="676.5" font-size="12" fill="#a8a8a8" text-anchor="middle">7·10<tspan font-size="6" dy="-3.7">1</tspan></text>
<text x="851.04" y="676.5" font-size="12" fill="#a8a8a8" text-anchor="middle">8·10<tspan font-size="6" dy="-3.7">1</tspan></text>
<text x="863.04" y="676.5" font-size="12" fill="#a8a8a8" text-anchor="middle">9·10<tspan font-size="6" dy="-3.7">1</tspan></text>
<text x="873.78" y="676.5" font-size="12" fill="#a8a8a8" text-anchor="middle">10<tspan font-size="6" dy="-3.7">2</tspan></text>
<text x="944.4" y="676.5" font-size="12" fill="#a8a8a8" text-anchor="middle">2·10<tspan font-size="6" dy="-3.7">2</tspan></text>
<text x="985.71" y="676.5" font-size="12" fill="#a8a8a8" text-anchor="middle">3·10<tspan font-size="6" dy="-3.7">2</tspan></text>
<text x="1015.02" y="676.5" font-size="12" fill="#a8a8a8" text-anchor="middle">4·10<tspan font-size="6" dy="-3.7">2</tspan></text>
<text x="1037.76" y="676.5" font-size="12" fill="#a8a8a8" text-anchor="middle">5·10<tspan font-size="6" dy="-3.7">2</tspan></text>
<text x="1056.33" y="676.5" font-size="12" fill="#a8a8a8" text-anchor="middle">6·10<tspan font-size="6" dy="-3.7">2</tspan></text>
<text x="1072.04" y="676.5" font-size="12" fill="#a8a8a8" text-anchor="middle">7·10<tspan font-size="6" dy="-3.7">2</tspan></text>
<text x="1085.64" y="676.5" font-size="12" fill="#a8a8a8" text-anchor="middle">8·10<tspan font-size="6" dy="-3.7">2</tspan></text>
<text x="1097.64" y="676.5" font-size="12" fill="#a8a8a8" text-anchor="middle">9·10<tspan font-size="6" dy="-3.7">2</tspan></text>
<text x="1108.38" y="676.5" font-size="12" fill="#a8a8a8" text-anchor="middle">10<tspan font-size="6" dy="-3.7">3</tspan></text>
<text x="1179" y="676.5" font-size="12" fill="#a8a8a8" text-anchor="middle">2·10<tspan font-size="6" dy="-3.7">3</tspan></text>
<text x="656.5" y="559.7" font-size="12" fill="#a8a8a8" text-anchor="middle" font-weight="normal" textLength="91.3" lengthAdjust="spacingAndGlyphs" transform="rotate(-90 656.5 559.7)">Spectral SPL (dB)</text>
<text x="955" y="447.5" font-size="15" fill="#ff00ff" text-anchor="middle" font-weight="bold" textLength="136" lengthAdjust="spacingAndGlyphs" >Log Spectral Power</text>
<rect x="644" y="669.8" width="13" height="13" rx="2.5" fill="none" stroke="#7a7a7a" stroke-width="1.4"/>
<text x="650.5" y="680.6" font-size="11.5" font-weight="bold" fill="#b0b0b0" text-anchor="middle">A</text>
<polyline points="716.9,599.5 741.0,599.5 741.5,598.6 791.0,598.6 791.5,597.6 807.9,597.6 808.2,596.5 824.8,596.5 828.8,595.4 858.6,604.6 881.6,587.3 900.6,594.5 911.6,591.5 929.8,591.4 941.4,584.9 952.4,590.4 961.5,585.5 978.9,582.6 988.4,583.7 993.9,580.5 1017.6,577.4 1038.2,571.7 1050.0,567.6 1066.0,560.5 1078.5,551.6 1087.4,543.6 1094.5,532.0 1098.9,520.5 1102.5,505.4 1104.8,488.5 1107.3,469.8 1109.6,471.6 1112.3,491.1 1114.9,506.2 1118.5,524.0 1124.7,538.3 1137.2,557.8 1149.6,570.3 1160.0,579.0 1163.5,580.7 1166.9,582.5 1167.6,582.1 1168.3,587.3 1169.7,585.2 1173.1,587.0 1176.6,589.7 1177.3,597.7 1178.3,584.9 1179.4,584.2 1179.7,594.6 1180.4,592.5 1180.7,596.7 1182.1,591.5 1183.5,598.4 1184.6,586.3 1185.2,596.3 1186.3,593.2 1189.0,596.0 1192.5,597.3 1193.5,592.2 1194.6,599.4 1196.0,591.8 1197.3,589.0 1198.4,589.7 1199.1,600.8 1202.2,600.1 1205.0,604.3 1207.0,605.0 1208.4,609.4 1209.4,595.3 1210.5,604.3 1211.2,598.0 1212.6,601.5 1213.6,607.7 1214.5,603.0 1215.3,614.6 1216.4,593.2 1217.0,610.0 1218.1,601.5 1218.4,616.7 1219.1,596.7 1219.5,574.2 1220.9,574.2 1221.2,584.2 1221.9,600.1 1222.6,605.6" fill="none" stroke="#ff00ff" stroke-width="1" shape-rendering="crispEdges"/>
<line x1="728" y1="506.5" x2="749.5" y2="506.5" stroke="#ff00ff" stroke-width="1"/>
<text x="757.5" y="512.5" font-size="12" fill="#a8a8a8" text-anchor="start" font-weight="normal" >dB Magnitude</text>
<rect x="97" y="720" width="1092.5" height="1" fill="#00000f"/>
<rect x="97" y="721" width="1092.5" height="1" fill="#000010"/>
<rect x="97" y="722" width="1092.5" height="1" fill="#000011"/>
<rect x="97" y="723" width="1092.5" height="2" fill="#000012"/>
<rect x="97" y="725" width="1092.5" height="1" fill="#000013"/>
<rect x="97" y="726" width="1092.5" height="1" fill="#000014"/>
<rect x="97" y="727" width="1092.5" height="1" fill="#000015"/>
<rect x="97" y="728" width="1092.5" height="2" fill="#000016"/>
<rect x="97" y="730" width="1092.5" height="1" fill="#000017"/>
<rect x="97" y="731" width="1092.5" height="1" fill="#000018"/>
<rect x="97" y="732" width="1092.5" height="1" fill="#000019"/>
<rect x="97" y="733" width="1092.5" height="1" fill="#00001a"/>
<rect x="97" y="734" width="1092.5" height="2" fill="#00001b"/>
<rect x="97" y="736" width="1092.5" height="1" fill="#00001c"/>
<rect x="97" y="737" width="1092.5" height="1" fill="#00001d"/>
<rect x="97" y="738" width="1092.5" height="1" fill="#00001e"/>
<rect x="97" y="739" width="1092.5" height="2" fill="#00001f"/>
<rect x="97" y="741" width="1092.5" height="1" fill="#000020"/>
<rect x="97" y="742" width="1092.5" height="1" fill="#000021"/>
<rect x="97" y="743" width="1092.5" height="2" fill="#000022"/>
<rect x="97" y="745" width="1092.5" height="1" fill="#000023"/>
<rect x="97" y="746" width="1092.5" height="1" fill="#000024"/>
<rect x="97" y="747" width="1092.5" height="2" fill="#000025"/>
<rect x="97" y="749" width="1092.5" height="1" fill="#000026"/>
<rect x="97" y="750" width="1092.5" height="1" fill="#000027"/>
<rect x="97" y="751" width="1092.5" height="1" fill="#000028"/>
<rect x="97" y="752" width="1092.5" height="2" fill="#000029"/>
<rect x="97" y="754" width="1092.5" height="1" fill="#00002a"/>
<rect x="97" y="755" width="1092.5" height="1" fill="#00002b"/>
<rect x="97" y="756" width="1092.5" height="2" fill="#00002c"/>
<rect x="97" y="758" width="1092.5" height="1" fill="#00002d"/>
<rect x="97" y="759" width="1092.5" height="2" fill="#00002e"/>
<rect x="97" y="761" width="1092.5" height="3" fill="#00002f"/>
<rect x="97" y="764" width="1092.5" height="3" fill="#000030"/>
<rect x="97" y="767" width="1092.5" height="3" fill="#000031"/>
<rect x="97" y="770" width="1092.5" height="3" fill="#000032"/>
<rect x="97" y="773" width="1092.5" height="2" fill="#000033"/>
<rect x="97" y="775" width="1092.5" height="1" fill="#000035"/>
<rect x="97" y="776" width="1092.5" height="1" fill="#000036"/>
<rect x="97" y="777" width="1092.5" height="1" fill="#000038"/>
<rect x="97" y="778" width="1092.5" height="1" fill="#00003a"/>
<rect x="97" y="779" width="1092.5" height="1" fill="#00003b"/>
<rect x="97" y="780" width="1092.5" height="1" fill="#00003d"/>
<rect x="97" y="781" width="1092.5" height="1" fill="#00003e"/>
<rect x="97" y="782" width="1092.5" height="1" fill="#000040"/>
<rect x="97" y="783" width="1092.5" height="1" fill="#000042"/>
<rect x="97" y="784" width="1092.5" height="1" fill="#000043"/>
<rect x="97" y="785" width="1092.5" height="1" fill="#000047"/>
<rect x="97" y="786" width="1092.5" height="1" fill="#00004b"/>
<rect x="97" y="787" width="1092.5" height="1" fill="#00004f"/>
<rect x="97" y="788" width="1092.5" height="1" fill="#000053"/>
<rect x="97" y="789" width="1092.5" height="1" fill="#000057"/>
<rect x="97" y="790" width="1092.5" height="1" fill="#00005b"/>
<rect x="97" y="791" width="1092.5" height="1" fill="#00005f"/>
<rect x="97" y="792" width="1092.5" height="1" fill="#000063"/>
<rect x="97" y="793" width="1092.5" height="1" fill="#000067"/>
<rect x="97" y="794" width="1092.5" height="1" fill="#00006b"/>
<rect x="97" y="795" width="1092.5" height="1" fill="#00006e"/>
<rect x="97" y="796" width="1092.5" height="1" fill="#000071"/>
<rect x="97" y="797" width="1092.5" height="1" fill="#000074"/>
<rect x="97" y="798" width="1092.5" height="1" fill="#000077"/>
<rect x="97" y="799" width="1092.5" height="1" fill="#00007a"/>
<rect x="97" y="800" width="1092.5" height="1" fill="#00007d"/>
<rect x="97" y="801" width="1092.5" height="1" fill="#000081"/>
<rect x="97" y="802" width="1092.5" height="1" fill="#000084"/>
<rect x="97" y="803" width="1092.5" height="1" fill="#000087"/>
<rect x="97" y="804" width="1092.5" height="1" fill="#00008a"/>
<rect x="97" y="805" width="1092.5" height="1" fill="#00008f"/>
<rect x="97" y="806" width="1092.5" height="1" fill="#000095"/>
<rect x="97" y="807" width="1092.5" height="1" fill="#00009b"/>
<rect x="97" y="808" width="1092.5" height="1" fill="#0000a0"/>
<rect x="97" y="809" width="1092.5" height="1" fill="#0000a6"/>
<rect x="97" y="810" width="1092.5" height="1" fill="#0000ab"/>
<rect x="97" y="811" width="1092.5" height="1" fill="#0000b1"/>
<rect x="97" y="812" width="1092.5" height="1" fill="#0000b7"/>
<rect x="97" y="813" width="1092.5" height="1" fill="#0000bc"/>
<rect x="97" y="814" width="1092.5" height="1" fill="#0000c2"/>
<rect x="97" y="815" width="1092.5" height="1" fill="#0000c8"/>
<rect x="97" y="816" width="1092.5" height="1" fill="#0000ce"/>
<rect x="97" y="817" width="1092.5" height="1" fill="#0000d4"/>
<rect x="97" y="818" width="1092.5" height="1" fill="#0000da"/>
<rect x="97" y="819" width="1092.5" height="1" fill="#0000e0"/>
<rect x="97" y="820" width="1092.5" height="1" fill="#0000e7"/>
<rect x="97" y="821" width="1092.5" height="1" fill="#0000ed"/>
<rect x="97" y="822" width="1092.5" height="1" fill="#0000f3"/>
<rect x="97" y="823" width="1092.5" height="1" fill="#0000f9"/>
<rect x="97" y="824" width="1092.5" height="1" fill="#0000ff"/>
<rect x="97" y="825" width="1092.5" height="1" fill="#0008ff"/>
<rect x="97" y="826" width="1092.5" height="1" fill="#000fff"/>
<rect x="97" y="827" width="1092.5" height="1" fill="#0017ff"/>
<rect x="97" y="828" width="1092.5" height="1" fill="#001fff"/>
<rect x="97" y="829" width="1092.5" height="1" fill="#0029ff"/>
<rect x="97" y="830" width="1092.5" height="1" fill="#0033ff"/>
<rect x="97" y="831" width="1092.5" height="1" fill="#003dff"/>
<rect x="97" y="832" width="1092.5" height="1" fill="#0047ff"/>
<rect x="97" y="833" width="1092.5" height="1" fill="#0052ff"/>
<rect x="97" y="834" width="1092.5" height="2" fill="#0060ff"/>
<rect x="97" y="836" width="1092.5" height="2" fill="#0080ff"/>
<rect x="97" y="838" width="1092.5" height="2" fill="#00a0ff"/>
<rect x="97" y="840" width="1092.5" height="2" fill="#00d0ff"/>
<rect x="97" y="842" width="1092.5" height="2" fill="#00ffff"/>
<rect x="97" y="844" width="1092.5" height="2" fill="#20ffe0"/>
<rect x="97" y="846" width="1092.5" height="2" fill="#60ffa0"/>
<rect x="97" y="848" width="1092.5" height="3" fill="#d0ff30"/>
<rect x="97" y="851" width="1092.5" height="2" fill="#ff9900"/>
<rect x="97" y="853" width="1092.5" height="3" fill="#ff0000"/>
<rect x="97" y="856" width="1092.5" height="2" fill="#ff7700"/>
<rect x="97" y="858" width="1092.5" height="2" fill="#d8ff28"/>
<rect x="97" y="860" width="1092.5" height="3" fill="#70ff90"/>
<rect x="97" y="863" width="1092.5" height="2" fill="#20ffe0"/>
<rect x="97" y="865" width="1092.5" height="2" fill="#00ffff"/>
<rect x="97" y="867" width="1092.5" height="2" fill="#00e0ff"/>
<rect x="97" y="869" width="1092.5" height="2" fill="#00b0ff"/>
<rect x="97" y="871" width="1092.5" height="2" fill="#0090ff"/>
<rect x="97" y="873" width="1092.5" height="3" fill="#0060ff"/>
<rect x="97" y="876" width="1092.5" height="1" fill="#0047ff"/>
<rect x="97" y="877" width="1092.5" height="1" fill="#003dff"/>
<rect x="97" y="878" width="1092.5" height="1" fill="#0033ff"/>
<rect x="97" y="879" width="1092.5" height="1" fill="#0029ff"/>
<rect x="97" y="880" width="1092.5" height="1" fill="#001fff"/>
<rect x="97" y="881" width="1092.5" height="1" fill="#0017ff"/>
<rect x="97" y="882" width="1092.5" height="1" fill="#000fff"/>
<rect x="97" y="883" width="1092.5" height="1" fill="#0008ff"/>
<rect x="97" y="884" width="1092.5" height="1" fill="#0000ff"/>
<rect x="97" y="885" width="1092.5" height="1" fill="#0000f9"/>
<rect x="97" y="886" width="1092.5" height="1" fill="#0000f3"/>
<rect x="97" y="887" width="1092.5" height="1" fill="#0000ed"/>
<rect x="97" y="888" width="1092.5" height="1" fill="#0000e7"/>
<rect x="97" y="889" width="1092.5" height="1" fill="#0000e0"/>
<rect x="97" y="890" width="1092.5" height="1" fill="#0000da"/>
<rect x="97" y="891" width="1092.5" height="1" fill="#0000d4"/>
<rect x="97" y="892" width="1092.5" height="1" fill="#0000ce"/>
<rect x="97" y="893" width="1092.5" height="1" fill="#0000c8"/>
<rect x="97" y="894" width="1092.5" height="1" fill="#0000c2"/>
<rect x="97" y="895" width="1092.5" height="1" fill="#0000bc"/>
<rect x="97" y="896" width="1092.5" height="1" fill="#0000b7"/>
<rect x="97" y="897" width="1092.5" height="1" fill="#0000b1"/>
<rect x="97" y="898" width="1092.5" height="1" fill="#0000ab"/>
<rect x="97" y="899" width="1092.5" height="1" fill="#0000a6"/>
<rect x="97" y="900" width="1092.5" height="1" fill="#0000a0"/>
<rect x="97" y="901" width="1092.5" height="1" fill="#00009b"/>
<rect x="97" y="902" width="1092.5" height="1" fill="#000095"/>
<rect x="97" y="903" width="1092.5" height="1" fill="#00008f"/>
<rect x="97" y="904" width="1092.5" height="1" fill="#00008a"/>
<rect x="97" y="905" width="1092.5" height="1" fill="#000087"/>
<rect x="97" y="906" width="1092.5" height="1" fill="#000084"/>
<rect x="97" y="907" width="1092.5" height="1" fill="#000081"/>
<rect x="97" y="908" width="1092.5" height="1" fill="#00007d"/>
<rect x="97" y="909" width="1092.5" height="1" fill="#00007a"/>
<rect x="97" y="910" width="1092.5" height="1" fill="#000077"/>
<rect x="97" y="911" width="1092.5" height="1" fill="#000074"/>
<rect x="97" y="912" width="1092.5" height="1" fill="#000071"/>
<rect x="97" y="913" width="1092.5" height="1" fill="#00006e"/>
<rect x="97" y="914" width="1092.5" height="1" fill="#00006b"/>
<rect x="97" y="915" width="1092.5" height="1" fill="#000067"/>
<rect x="97" y="916" width="1092.5" height="1" fill="#000063"/>
<rect x="97" y="917" width="1092.5" height="1" fill="#00005f"/>
<rect x="97" y="918" width="1092.5" height="1" fill="#00005b"/>
<rect x="97" y="919" width="1092.5" height="1" fill="#000057"/>
<rect x="97" y="920" width="1092.5" height="1" fill="#000053"/>
<rect x="97" y="921" width="1092.5" height="1" fill="#00004f"/>
<rect x="97" y="922" width="1092.5" height="1" fill="#00004b"/>
<rect x="97" y="923" width="1092.5" height="1" fill="#000047"/>
<rect x="97" y="924" width="1092.5" height="1" fill="#000043"/>
<rect x="97" y="925" width="1092.5" height="1" fill="#000042"/>
<rect x="97" y="926" width="1092.5" height="1" fill="#000040"/>
<rect x="97" y="927" width="1092.5" height="1" fill="#00003e"/>
<rect x="97" y="928" width="1092.5" height="1" fill="#00003d"/>
<rect x="97" y="929" width="1092.5" height="1" fill="#00003b"/>
<rect x="97" y="930" width="1092.5" height="1" fill="#00003a"/>
<rect x="97" y="931" width="1092.5" height="1" fill="#000038"/>
<rect x="97" y="932" width="1092.5" height="1" fill="#000036"/>
<rect x="97" y="933" width="1092.5" height="1" fill="#000035"/>
<rect x="97" y="934" width="1092.5" height="2" fill="#000033"/>
<rect x="97" y="936" width="1092.5" height="1" fill="#000032"/>
<rect x="97.0" y="720" width="11.3" height="2" fill="#00000c"/>
<rect x="119.2" y="720" width="10.9" height="2" fill="#00000c"/>
<rect x="141.1" y="720" width="87.4" height="2" fill="#00000c"/>
<rect x="239.4" y="720" width="21.8" height="2" fill="#00000c"/>
<rect x="294.0" y="720" width="10.9" height="2" fill="#00000c"/>
<rect x="315.8" y="720" width="10.9" height="2" fill="#00000c"/>
<rect x="337.6" y="720" width="43.7" height="2" fill="#00000c"/>
<rect x="392.2" y="720" width="10.9" height="2" fill="#00000c"/>
<rect x="425.0" y="720" width="10.9" height="2" fill="#00000c"/>
<rect x="446.8" y="720" width="32.8" height="2" fill="#00000c"/>
<rect x="490.5" y="720" width="21.8" height="2" fill="#00000c"/>
<rect x="523.3" y="720" width="21.8" height="2" fill="#00000c"/>
<rect x="567.0" y="720" width="10.9" height="2" fill="#00000c"/>
<rect x="621.6" y="720" width="10.9" height="2" fill="#00000c"/>
<rect x="643.4" y="720" width="21.8" height="2" fill="#00000c"/>
<rect x="676.2" y="720" width="32.8" height="2" fill="#00000c"/>
<rect x="752.6" y="720" width="10.9" height="2" fill="#00000c"/>
<rect x="796.3" y="720" width="10.9" height="2" fill="#00000c"/>
<rect x="829.0" y="720" width="10.9" height="2" fill="#00000c"/>
<rect x="850.9" y="720" width="10.9" height="2" fill="#00000c"/>
<rect x="905.5" y="720" width="21.8" height="2" fill="#00000c"/>
<rect x="938.2" y="720" width="54.6" height="2" fill="#00000c"/>
<rect x="1003.8" y="720" width="32.8" height="2" fill="#00000c"/>
<rect x="1047.4" y="720" width="21.8" height="2" fill="#00000c"/>
<rect x="1113.0" y="720" width="32.8" height="2" fill="#00000c"/>
<rect x="1167.6" y="720" width="21.9" height="2" fill="#00000c"/>
<rect x="97.0" y="722" width="44.1" height="2" fill="#00000e"/>
<rect x="141.1" y="722" width="10.9" height="2" fill="#00000a"/>
<rect x="152.0" y="722" width="32.8" height="2" fill="#00000e"/>
<rect x="206.6" y="722" width="21.8" height="2" fill="#00000e"/>
<rect x="239.4" y="722" width="10.9" height="2" fill="#00000a"/>
<rect x="294.0" y="722" width="21.8" height="2" fill="#00000e"/>
<rect x="315.8" y="722" width="10.9" height="2" fill="#00000a"/>
<rect x="326.7" y="722" width="10.9" height="2" fill="#00000e"/>
<rect x="337.6" y="722" width="21.8" height="2" fill="#00000a"/>
<rect x="359.5" y="722" width="32.8" height="2" fill="#00000e"/>
<rect x="392.2" y="722" width="21.8" height="2" fill="#00000a"/>
<rect x="414.1" y="722" width="10.9" height="2" fill="#00000e"/>
<rect x="425.0" y="722" width="10.9" height="2" fill="#00000a"/>
<rect x="435.9" y="722" width="10.9" height="2" fill="#00000e"/>
<rect x="446.8" y="722" width="10.9" height="2" fill="#00000a"/>
<rect x="468.7" y="722" width="65.5" height="2" fill="#00000e"/>
<rect x="556.0" y="722" width="21.8" height="2" fill="#00000e"/>
<rect x="577.9" y="722" width="21.8" height="2" fill="#00000a"/>
<rect x="599.7" y="722" width="21.8" height="2" fill="#00000e"/>
<rect x="632.5" y="722" width="10.9" height="2" fill="#00000e"/>
<rect x="643.4" y="722" width="10.9" height="2" fill="#00000a"/>
<rect x="665.2" y="722" width="32.8" height="2" fill="#00000e"/>
<rect x="698.0" y="722" width="10.9" height="2" fill="#00000a"/>
<rect x="708.9" y="722" width="10.9" height="2" fill="#00000e"/>
<rect x="752.6" y="722" width="32.8" height="2" fill="#00000e"/>
<rect x="796.3" y="722" width="10.9" height="2" fill="#00000e"/>
<rect x="818.1" y="722" width="21.8" height="2" fill="#00000e"/>
<rect x="905.5" y="722" width="32.8" height="2" fill="#00000e"/>
<rect x="938.2" y="722" width="21.8" height="2" fill="#00000a"/>
<rect x="960.1" y="722" width="21.8" height="2" fill="#00000e"/>
<rect x="1003.8" y="722" width="10.9" height="2" fill="#00000e"/>
<rect x="1047.4" y="722" width="65.5" height="2" fill="#00000e"/>
<rect x="1134.8" y="722" width="21.8" height="2" fill="#00000e"/>
<rect x="1167.6" y="722" width="10.9" height="2" fill="#00000a"/>
<rect x="1178.5" y="722" width="11.0" height="2" fill="#00000e"/>
<rect x="97.0" y="724" width="22.2" height="2" fill="#00001a"/>
<rect x="119.2" y="724" width="10.9" height="2" fill="#000017"/>
<rect x="141.1" y="724" width="10.9" height="2" fill="#00001a"/>
<rect x="152.0" y="724" width="10.9" height="2" fill="#000017"/>
<rect x="162.9" y="724" width="21.8" height="2" fill="#00001a"/>
<rect x="184.8" y="724" width="21.8" height="2" fill="#000017"/>
<rect x="206.6" y="724" width="21.8" height="2" fill="#00001a"/>
<rect x="261.2" y="724" width="21.8" height="2" fill="#00001a"/>
<rect x="294.0" y="724" width="32.8" height="2" fill="#00001a"/>
<rect x="326.7" y="724" width="21.8" height="2" fill="#000017"/>
<rect x="370.4" y="724" width="21.8" height="2" fill="#00001a"/>
<rect x="392.2" y="724" width="10.9" height="2" fill="#000017"/>
<rect x="403.2" y="724" width="10.9" height="2" fill="#00001a"/>
<rect x="414.1" y="724" width="10.9" height="2" fill="#000017"/>
<rect x="425.0" y="724" width="21.8" height="2" fill="#00001a"/>
<rect x="457.8" y="724" width="65.5" height="2" fill="#000017"/>
<rect x="534.2" y="724" width="10.9" height="2" fill="#00001a"/>
<rect x="545.1" y="724" width="32.8" height="2" fill="#000017"/>
<rect x="577.9" y="724" width="10.9" height="2" fill="#00001a"/>
<rect x="588.8" y="724" width="10.9" height="2" fill="#000017"/>
<rect x="599.7" y="724" width="10.9" height="2" fill="#00001a"/>
<rect x="610.6" y="724" width="32.8" height="2" fill="#000017"/>
<rect x="654.3" y="724" width="10.9" height="2" fill="#000017"/>
<rect x="687.1" y="724" width="10.9" height="2" fill="#00001a"/>
<rect x="708.9" y="724" width="10.9" height="2" fill="#000017"/>
<rect x="719.8" y="724" width="10.9" height="2" fill="#00001a"/>
<rect x="730.8" y="724" width="43.7" height="2" fill="#000017"/>
<rect x="774.4" y="724" width="10.9" height="2" fill="#00001a"/>
<rect x="796.3" y="724" width="32.8" height="2" fill="#000017"/>
<rect x="829.0" y="724" width="10.9" height="2" fill="#00001a"/>
<rect x="840.0" y="724" width="21.8" height="2" fill="#000017"/>
<rect x="861.8" y="724" width="21.8" height="2" fill="#00001a"/>
<rect x="883.6" y="724" width="10.9" height="2" fill="#000017"/>
<rect x="894.6" y="724" width="10.9" height="2" fill="#00001a"/>
<rect x="905.5" y="724" width="21.8" height="2" fill="#000017"/>
<rect x="927.3" y="724" width="10.9" height="2" fill="#00001a"/>
<rect x="938.2" y="724" width="32.8" height="2" fill="#000017"/>
<rect x="971.0" y="724" width="43.7" height="2" fill="#00001a"/>
<rect x="1014.7" y="724" width="21.8" height="2" fill="#000017"/>
<rect x="1036.5" y="724" width="21.8" height="2" fill="#00001a"/>
<rect x="1080.2" y="724" width="10.9" height="2" fill="#000017"/>
<rect x="1102.0" y="724" width="10.9" height="2" fill="#000017"/>
<rect x="1123.9" y="724" width="32.8" height="2" fill="#00001a"/>
<rect x="1167.6" y="724" width="21.9" height="2" fill="#00001a"/>
<rect x="119.2" y="726" width="10.9" height="2" fill="#00000c"/>
<rect x="141.1" y="726" width="21.8" height="2" fill="#000010"/>
<rect x="173.8" y="726" width="10.9" height="2" fill="#000010"/>
<rect x="184.8" y="726" width="10.9" height="2" fill="#00000c"/>
<rect x="195.7" y="726" width="32.8" height="2" fill="#000010"/>
<rect x="228.4" y="726" width="10.9" height="2" fill="#00000c"/>
<rect x="239.4" y="726" width="21.8" height="2" fill="#000010"/>
<rect x="261.2" y="726" width="10.9" height="2" fill="#00000c"/>
<rect x="272.1" y="726" width="21.8" height="2" fill="#000010"/>
<rect x="294.0" y="726" width="10.9" height="2" fill="#00000c"/>
<rect x="304.9" y="726" width="32.8" height="2" fill="#000010"/>
<rect x="337.6" y="726" width="10.9" height="2" fill="#00000c"/>
<rect x="359.5" y="726" width="10.9" height="2" fill="#000010"/>
<rect x="381.3" y="726" width="10.9" height="2" fill="#00000c"/>
<rect x="392.2" y="726" width="10.9" height="2" fill="#000010"/>
<rect x="403.2" y="726" width="10.9" height="2" fill="#00000c"/>
<rect x="414.1" y="726" width="21.8" height="2" fill="#000010"/>
<rect x="435.9" y="726" width="10.9" height="2" fill="#00000c"/>
<rect x="446.8" y="726" width="10.9" height="2" fill="#000010"/>
<rect x="468.7" y="726" width="21.8" height="2" fill="#000010"/>
<rect x="490.5" y="726" width="10.9" height="2" fill="#00000c"/>
<rect x="512.4" y="726" width="21.8" height="2" fill="#000010"/>
<rect x="534.2" y="726" width="21.8" height="2" fill="#00000c"/>
<rect x="556.0" y="726" width="21.8" height="2" fill="#000010"/>
<rect x="577.9" y="726" width="10.9" height="2" fill="#00000c"/>
<rect x="599.7" y="726" width="21.8" height="2" fill="#000010"/>
<rect x="621.6" y="726" width="10.9" height="2" fill="#00000c"/>
<rect x="643.4" y="726" width="10.9" height="2" fill="#00000c"/>
<rect x="665.2" y="726" width="32.8" height="2" fill="#000010"/>
<rect x="708.9" y="726" width="10.9" height="2" fill="#000010"/>
<rect x="719.8" y="726" width="10.9" height="2" fill="#00000c"/>
<rect x="730.8" y="726" width="10.9" height="2" fill="#000010"/>
<rect x="741.7" y="726" width="54.6" height="2" fill="#00000c"/>
<rect x="796.3" y="726" width="54.6" height="2" fill="#000010"/>
<rect x="850.9" y="726" width="10.9" height="2" fill="#00000c"/>
<rect x="861.8" y="726" width="10.9" height="2" fill="#000010"/>
<rect x="872.7" y="726" width="10.9" height="2" fill="#00000c"/>
<rect x="883.6" y="726" width="10.9" height="2" fill="#000010"/>
<rect x="894.6" y="726" width="10.9" height="2" fill="#00000c"/>
<rect x="905.5" y="726" width="21.8" height="2" fill="#000010"/>
<rect x="927.3" y="726" width="10.9" height="2" fill="#00000c"/>
<rect x="938.2" y="726" width="10.9" height="2" fill="#000010"/>
<rect x="960.1" y="726" width="10.9" height="2" fill="#00000c"/>
<rect x="971.0" y="726" width="76.4" height="2" fill="#000010"/>
<rect x="1058.4" y="726" width="65.5" height="2" fill="#000010"/>
<rect x="1123.9" y="726" width="32.8" height="2" fill="#00000c"/>
<rect x="1156.6" y="726" width="21.8" height="2" fill="#000010"/>
<rect x="1178.5" y="726" width="11.0" height="2" fill="#00000c"/>
<rect x="97.0" y="728" width="33.2" height="2" fill="#000012"/>
<rect x="130.2" y="728" width="32.8" height="2" fill="#00000d"/>
<rect x="162.9" y="728" width="10.9" height="2" fill="#000012"/>
<rect x="173.8" y="728" width="10.9" height="2" fill="#00000d"/>
<rect x="184.8" y="728" width="10.9" height="2" fill="#000012"/>
<rect x="195.7" y="728" width="10.9" height="2" fill="#00000d"/>
<rect x="206.6" y="728" width="32.8" height="2" fill="#000012"/>
<rect x="239.4" y="728" width="10.9" height="2" fill="#00000d"/>
<rect x="250.3" y="728" width="10.9" height="2" fill="#000012"/>
<rect x="261.2" y="728" width="10.9" height="2" fill="#00000d"/>
<rect x="272.1" y="728" width="10.9" height="2" fill="#000012"/>
<rect x="283.0" y="728" width="10.9" height="2" fill="#00000d"/>
<rect x="294.0" y="728" width="32.8" height="2" fill="#000012"/>
<rect x="326.7" y="728" width="10.9" height="2" fill="#00000d"/>
<rect x="337.6" y="728" width="10.9" height="2" fill="#000012"/>
<rect x="348.6" y="728" width="32.8" height="2" fill="#00000d"/>
<rect x="381.3" y="728" width="10.9" height="2" fill="#000012"/>
<rect x="392.2" y="728" width="43.7" height="2" fill="#00000d"/>
<rect x="435.9" y="728" width="76.4" height="2" fill="#000012"/>
<rect x="512.4" y="728" width="10.9" height="2" fill="#00000d"/>
<rect x="534.2" y="728" width="10.9" height="2" fill="#00000d"/>
<rect x="545.1" y="728" width="21.8" height="2" fill="#000012"/>
<rect x="567.0" y="728" width="10.9" height="2" fill="#00000d"/>
<rect x="577.9" y="728" width="54.6" height="2" fill="#000012"/>
<rect x="632.5" y="728" width="10.9" height="2" fill="#00000d"/>
<rect x="643.4" y="728" width="98.3" height="2" fill="#000012"/>
<rect x="741.7" y="728" width="32.8" height="2" fill="#00000d"/>
<rect x="774.4" y="728" width="10.9" height="2" fill="#000012"/>
<rect x="785.4" y="728" width="10.9" height="2" fill="#00000d"/>
<rect x="796.3" y="728" width="65.5" height="2" fill="#000012"/>
<rect x="861.8" y="728" width="10.9" height="2" fill="#00000d"/>
<rect x="872.7" y="728" width="54.6" height="2" fill="#000012"/>
<rect x="927.3" y="728" width="10.9" height="2" fill="#00000d"/>
<rect x="938.2" y="728" width="10.9" height="2" fill="#000012"/>
<rect x="949.2" y="728" width="32.8" height="2" fill="#00000d"/>
<rect x="981.9" y="728" width="10.9" height="2" fill="#000012"/>
<rect x="992.8" y="728" width="10.9" height="2" fill="#00000d"/>
<rect x="1003.8" y="728" width="10.9" height="2" fill="#000012"/>
<rect x="1025.6" y="728" width="76.4" height="2" fill="#000012"/>
<rect x="1102.0" y="728" width="32.8" height="2" fill="#00000d"/>
<rect x="1134.8" y="728" width="10.9" height="2" fill="#000012"/>
<rect x="1145.7" y="728" width="10.9" height="2" fill="#00000d"/>
<rect x="1156.6" y="728" width="10.9" height="2" fill="#000012"/>
<rect x="1167.6" y="728" width="21.9" height="2" fill="#00000d"/>
<rect x="130.2" y="730" width="54.6" height="2" fill="#000013"/>
<rect x="195.7" y="730" width="10.9" height="2" fill="#000013"/>
<rect x="228.4" y="730" width="10.9" height="2" fill="#00000e"/>
<rect x="239.4" y="730" width="10.9" height="2" fill="#000013"/>
<rect x="272.1" y="730" width="32.8" height="2" fill="#000013"/>
<rect x="315.8" y="730" width="43.7" height="2" fill="#000013"/>
<rect x="370.4" y="730" width="10.9" height="2" fill="#000013"/>
<rect x="392.2" y="730" width="10.9" height="2" fill="#000013"/>
<rect x="425.0" y="730" width="10.9" height="2" fill="#000013"/>
<rect x="446.8" y="730" width="10.9" height="2" fill="#000013"/>
<rect x="457.8" y="730" width="21.8" height="2" fill="#00000e"/>
<rect x="479.6" y="730" width="65.5" height="2" fill="#000013"/>
<rect x="556.0" y="730" width="10.9" height="2" fill="#00000e"/>
<rect x="588.8" y="730" width="10.9" height="2" fill="#000013"/>
<rect x="632.5" y="730" width="32.8" height="2" fill="#000013"/>
<rect x="676.2" y="730" width="43.7" height="2" fill="#000013"/>
<rect x="719.8" y="730" width="10.9" height="2" fill="#00000e"/>
<rect x="730.8" y="730" width="10.9" height="2" fill="#000013"/>
<rect x="752.6" y="730" width="10.9" height="2" fill="#000013"/>
<rect x="774.4" y="730" width="54.6" height="2" fill="#000013"/>
<rect x="894.6" y="730" width="10.9" height="2" fill="#000013"/>
<rect x="916.4" y="730" width="10.9" height="2" fill="#00000e"/>
<rect x="938.2" y="730" width="10.9" height="2" fill="#000013"/>
<rect x="971.0" y="730" width="10.9" height="2" fill="#000013"/>
<rect x="981.9" y="730" width="10.9" height="2" fill="#00000e"/>
<rect x="1003.8" y="730" width="43.7" height="2" fill="#000013"/>
<rect x="1069.3" y="730" width="10.9" height="2" fill="#000013"/>
<rect x="1091.1" y="730" width="65.5" height="2" fill="#000013"/>
<rect x="1167.6" y="730" width="21.9" height="2" fill="#000013"/>
<rect x="97.0" y="732" width="11.3" height="2" fill="#000028"/>
<rect x="108.3" y="732" width="10.9" height="2" fill="#00001e"/>
<rect x="152.0" y="732" width="10.9" height="2" fill="#00001e"/>
<rect x="173.8" y="732" width="32.8" height="2" fill="#00001e"/>
<rect x="206.6" y="732" width="21.8" height="2" fill="#000023"/>
<rect x="228.4" y="732" width="54.6" height="2" fill="#00001e"/>
<rect x="294.0" y="732" width="10.9" height="2" fill="#00001e"/>
<rect x="304.9" y="732" width="10.9" height="2" fill="#000023"/>
<rect x="326.7" y="732" width="10.9" height="2" fill="#00001e"/>
<rect x="337.6" y="732" width="21.8" height="2" fill="#000023"/>
<rect x="370.4" y="732" width="43.7" height="2" fill="#00001e"/>
<rect x="414.1" y="732" width="32.8" height="2" fill="#000023"/>
<rect x="468.7" y="732" width="21.8" height="2" fill="#000023"/>
<rect x="490.5" y="732" width="21.8" height="2" fill="#00001e"/>
<rect x="523.3" y="732" width="10.9" height="2" fill="#00001e"/>
<rect x="534.2" y="732" width="43.7" height="2" fill="#000023"/>
<rect x="577.9" y="732" width="10.9" height="2" fill="#00001e"/>
<rect x="610.6" y="732" width="10.9" height="2" fill="#00001e"/>
<rect x="621.6" y="732" width="54.6" height="2" fill="#000023"/>
<rect x="676.2" y="732" width="21.8" height="2" fill="#00001e"/>
<rect x="708.9" y="732" width="10.9" height="2" fill="#000023"/>
<rect x="719.8" y="732" width="10.9" height="2" fill="#00001e"/>
<rect x="730.8" y="732" width="21.8" height="2" fill="#000023"/>
<rect x="752.6" y="732" width="10.9" height="2" fill="#00001e"/>
<rect x="774.4" y="732" width="10.9" height="2" fill="#00001e"/>
<rect x="785.4" y="732" width="21.8" height="2" fill="#000023"/>
<rect x="829.0" y="732" width="32.8" height="2" fill="#00001e"/>
<rect x="872.7" y="732" width="10.9" height="2" fill="#00001e"/>
<rect x="894.6" y="732" width="21.8" height="2" fill="#00001e"/>
<rect x="916.4" y="732" width="32.8" height="2" fill="#000023"/>
<rect x="949.2" y="732" width="32.8" height="2" fill="#00001e"/>
<rect x="981.9" y="732" width="21.8" height="2" fill="#000023"/>
<rect x="1003.8" y="732" width="10.9" height="2" fill="#00001e"/>
<rect x="1025.6" y="732" width="10.9" height="2" fill="#00001e"/>
<rect x="1036.5" y="732" width="10.9" height="2" fill="#000023"/>
<rect x="1047.4" y="732" width="21.8" height="2" fill="#00001e"/>
<rect x="1069.3" y="732" width="21.8" height="2" fill="#000023"/>
<rect x="1091.1" y="732" width="10.9" height="2" fill="#00001e"/>
<rect x="1113.0" y="732" width="21.8" height="2" fill="#00001e"/>
<rect x="1134.8" y="732" width="10.9" height="2" fill="#000023"/>
<rect x="1156.6" y="732" width="21.8" height="2" fill="#000023"/>
<rect x="1178.5" y="732" width="11.0" height="2" fill="#00001e"/>
<rect x="108.3" y="734" width="10.9" height="2" fill="#000016"/>
<rect x="130.2" y="734" width="21.8" height="2" fill="#000016"/>
<rect x="162.9" y="734" width="10.9" height="2" fill="#000016"/>
<rect x="184.8" y="734" width="54.6" height="2" fill="#000016"/>
<rect x="250.3" y="734" width="32.8" height="2" fill="#000016"/>
<rect x="294.0" y="734" width="32.8" height="2" fill="#000010"/>
<rect x="326.7" y="734" width="10.9" height="2" fill="#000016"/>
<rect x="392.2" y="734" width="21.8" height="2" fill="#000016"/>
<rect x="435.9" y="734" width="10.9" height="2" fill="#000010"/>
<rect x="446.8" y="734" width="54.6" height="2" fill="#000016"/>
<rect x="501.4" y="734" width="10.9" height="2" fill="#000010"/>
<rect x="512.4" y="734" width="21.8" height="2" fill="#000016"/>
<rect x="545.1" y="734" width="10.9" height="2" fill="#000010"/>
<rect x="567.0" y="734" width="21.8" height="2" fill="#000016"/>
<rect x="610.6" y="734" width="10.9" height="2" fill="#000016"/>
<rect x="621.6" y="734" width="10.9" height="2" fill="#000010"/>
<rect x="632.5" y="734" width="21.8" height="2" fill="#000016"/>
<rect x="665.2" y="734" width="21.8" height="2" fill="#000016"/>
<rect x="698.0" y="734" width="10.9" height="2" fill="#000010"/>
<rect x="708.9" y="734" width="10.9" height="2" fill="#000016"/>
<rect x="741.7" y="734" width="32.8" height="2" fill="#000010"/>
<rect x="785.4" y="734" width="10.9" height="2" fill="#000016"/>
<rect x="818.1" y="734" width="21.8" height="2" fill="#000016"/>
<rect x="850.9" y="734" width="54.6" height="2" fill="#000016"/>
<rect x="905.5" y="734" width="10.9" height="2" fill="#000010"/>
<rect x="938.2" y="734" width="10.9" height="2" fill="#000016"/>
<rect x="960.1" y="734" width="10.9" height="2" fill="#000010"/>
<rect x="971.0" y="734" width="21.8" height="2" fill="#000016"/>
<rect x="1014.7" y="734" width="43.7" height="2" fill="#000016"/>
<rect x="1069.3" y="734" width="10.9" height="2" fill="#000016"/>
<rect x="1123.9" y="734" width="43.7" height="2" fill="#000016"/>
<rect x="1178.5" y="734" width="11.0" height="2" fill="#000010"/>
<rect x="108.3" y="736" width="10.9" height="2" fill="#000017"/>
<rect x="119.2" y="736" width="21.8" height="2" fill="#000011"/>
<rect x="141.1" y="736" width="21.8" height="2" fill="#000017"/>
<rect x="195.7" y="736" width="10.9" height="2" fill="#000017"/>
<rect x="206.6" y="736" width="21.8" height="2" fill="#000011"/>
<rect x="228.4" y="736" width="76.4" height="2" fill="#000017"/>
<rect x="326.7" y="736" width="10.9" height="2" fill="#000017"/>
<rect x="337.6" y="736" width="10.9" height="2" fill="#000011"/>
<rect x="359.5" y="736" width="32.8" height="2" fill="#000017"/>
<rect x="403.2" y="736" width="32.8" height="2" fill="#000017"/>
<rect x="435.9" y="736" width="10.9" height="2" fill="#000011"/>
<rect x="457.8" y="736" width="32.8" height="2" fill="#000017"/>
<rect x="501.4" y="736" width="21.8" height="2" fill="#000017"/>
<rect x="534.2" y="736" width="10.9" height="2" fill="#000017"/>
<rect x="556.0" y="736" width="10.9" height="2" fill="#000011"/>
<rect x="567.0" y="736" width="10.9" height="2" fill="#000017"/>
<rect x="610.6" y="736" width="10.9" height="2" fill="#000011"/>
<rect x="621.6" y="736" width="10.9" height="2" fill="#000017"/>
<rect x="632.5" y="736" width="10.9" height="2" fill="#000011"/>
<rect x="643.4" y="736" width="10.9" height="2" fill="#000017"/>
<rect x="665.2" y="736" width="10.9" height="2" fill="#000017"/>
<rect x="687.1" y="736" width="10.9" height="2" fill="#000017"/>
<rect x="708.9" y="736" width="21.8" height="2" fill="#000017"/>
<rect x="752.6" y="736" width="10.9" height="2" fill="#000011"/>
<rect x="763.5" y="736" width="43.7" height="2" fill="#000017"/>
<rect x="807.2" y="736" width="10.9" height="2" fill="#000011"/>
<rect x="818.1" y="736" width="54.6" height="2" fill="#000017"/>
<rect x="872.7" y="736" width="10.9" height="2" fill="#000011"/>
<rect x="883.6" y="736" width="54.6" height="2" fill="#000017"/>
<rect x="949.2" y="736" width="10.9" height="2" fill="#000017"/>
<rect x="960.1" y="736" width="21.8" height="2" fill="#000011"/>
<rect x="981.9" y="736" width="32.8" height="2" fill="#000017"/>
<rect x="1014.7" y="736" width="10.9" height="2" fill="#000011"/>
<rect x="1025.6" y="736" width="54.6" height="2" fill="#000017"/>
<rect x="1091.1" y="736" width="43.7" height="2" fill="#000017"/>
<rect x="1156.6" y="736" width="32.9" height="2" fill="#000017"/>
<rect x="97.0" y="738" width="11.3" height="2" fill="#000012"/>
<rect x="119.2" y="738" width="10.9" height="2" fill="#000018"/>
<rect x="141.1" y="738" width="10.9" height="2" fill="#000018"/>
<rect x="162.9" y="738" width="21.8" height="2" fill="#000018"/>
<rect x="184.8" y="738" width="10.9" height="2" fill="#000012"/>
<rect x="195.7" y="738" width="21.8" height="2" fill="#000018"/>
<rect x="228.4" y="738" width="10.9" height="2" fill="#000012"/>
<rect x="239.4" y="738" width="32.8" height="2" fill="#000018"/>
<rect x="272.1" y="738" width="10.9" height="2" fill="#000012"/>
<rect x="283.0" y="738" width="21.8" height="2" fill="#000018"/>
<rect x="315.8" y="738" width="10.9" height="2" fill="#000012"/>
<rect x="326.7" y="738" width="10.9" height="2" fill="#000018"/>
<rect x="359.5" y="738" width="10.9" height="2" fill="#000018"/>
<rect x="370.4" y="738" width="10.9" height="2" fill="#000012"/>
<rect x="403.2" y="738" width="10.9" height="2" fill="#000018"/>
<rect x="414.1" y="738" width="10.9" height="2" fill="#000012"/>
<rect x="435.9" y="738" width="10.9" height="2" fill="#000018"/>
<rect x="457.8" y="738" width="10.9" height="2" fill="#000018"/>
<rect x="479.6" y="738" width="10.9" height="2" fill="#000018"/>
<rect x="501.4" y="738" width="21.8" height="2" fill="#000018"/>
<rect x="545.1" y="738" width="54.6" height="2" fill="#000018"/>
<rect x="599.7" y="738" width="10.9" height="2" fill="#000012"/>
<rect x="610.6" y="738" width="21.8" height="2" fill="#000018"/>
<rect x="643.4" y="738" width="10.9" height="2" fill="#000012"/>
<rect x="654.3" y="738" width="10.9" height="2" fill="#000018"/>
<rect x="676.2" y="738" width="10.9" height="2" fill="#000012"/>
<rect x="698.0" y="738" width="10.9" height="2" fill="#000012"/>
<rect x="708.9" y="738" width="109.2" height="2" fill="#000018"/>
<rect x="818.1" y="738" width="10.9" height="2" fill="#000012"/>
<rect x="829.0" y="738" width="32.8" height="2" fill="#000018"/>
<rect x="883.6" y="738" width="32.8" height="2" fill="#000018"/>
<rect x="916.4" y="738" width="21.8" height="2" fill="#000012"/>
<rect x="938.2" y="738" width="10.9" height="2" fill="#000018"/>
<rect x="949.2" y="738" width="10.9" height="2" fill="#000012"/>
<rect x="960.1" y="738" width="21.8" height="2" fill="#000018"/>
<rect x="981.9" y="738" width="10.9" height="2" fill="#000012"/>
<rect x="992.8" y="738" width="10.9" height="2" fill="#000018"/>
<rect x="1003.8" y="738" width="10.9" height="2" fill="#000012"/>
<rect x="1036.5" y="738" width="10.9" height="2" fill="#000018"/>
<rect x="1047.4" y="738" width="10.9" height="2" fill="#000012"/>
<rect x="1058.4" y="738" width="21.8" height="2" fill="#000018"/>
<rect x="1091.1" y="738" width="10.9" height="2" fill="#000012"/>
<rect x="1145.7" y="738" width="10.9" height="2" fill="#000018"/>
<rect x="1167.6" y="738" width="10.9" height="2" fill="#000018"/>
<rect x="108.3" y="740" width="21.8" height="2" fill="#00002c"/>
<rect x="141.1" y="740" width="10.9" height="2" fill="#000026"/>
<rect x="152.0" y="740" width="10.9" height="2" fill="#00002c"/>
<rect x="173.8" y="740" width="10.9" height="2" fill="#00002c"/>
<rect x="184.8" y="740" width="10.9" height="2" fill="#000026"/>
<rect x="195.7" y="740" width="10.9" height="2" fill="#00002c"/>
<rect x="217.5" y="740" width="10.9" height="2" fill="#000026"/>
<rect x="228.4" y="740" width="10.9" height="2" fill="#00002c"/>
<rect x="250.3" y="740" width="32.8" height="2" fill="#000026"/>
<rect x="315.8" y="740" width="32.8" height="2" fill="#00002c"/>
<rect x="359.5" y="740" width="10.9" height="2" fill="#00002c"/>
<rect x="381.3" y="740" width="10.9" height="2" fill="#000026"/>
<rect x="392.2" y="740" width="10.9" height="2" fill="#00002c"/>
<rect x="403.2" y="740" width="10.9" height="2" fill="#000026"/>
<rect x="414.1" y="740" width="10.9" height="2" fill="#00002c"/>
<rect x="425.0" y="740" width="21.8" height="2" fill="#000026"/>
<rect x="446.8" y="740" width="10.9" height="2" fill="#00002c"/>
<rect x="468.7" y="740" width="10.9" height="2" fill="#000033"/>
<rect x="479.6" y="740" width="10.9" height="2" fill="#00002c"/>
<rect x="490.5" y="740" width="10.9" height="2" fill="#000026"/>
<rect x="501.4" y="740" width="10.9" height="2" fill="#00002c"/>
<rect x="512.4" y="740" width="10.9" height="2" fill="#000026"/>
<rect x="523.3" y="740" width="10.9" height="2" fill="#000033"/>
<rect x="534.2" y="740" width="21.8" height="2" fill="#000026"/>
<rect x="556.0" y="740" width="10.9" height="2" fill="#00002c"/>
<rect x="567.0" y="740" width="10.9" height="2" fill="#000026"/>
<rect x="588.8" y="740" width="10.9" height="2" fill="#00002c"/>
<rect x="610.6" y="740" width="10.9" height="2" fill="#00002c"/>
<rect x="621.6" y="740" width="10.9" height="2" fill="#000026"/>
<rect x="632.5" y="740" width="10.9" height="2" fill="#00002c"/>
<rect x="643.4" y="740" width="10.9" height="2" fill="#000033"/>
<rect x="654.3" y="740" width="10.9" height="2" fill="#000026"/>
<rect x="665.2" y="740" width="10.9" height="2" fill="#00002c"/>
<rect x="676.2" y="740" width="10.9" height="2" fill="#000026"/>
<rect x="719.8" y="740" width="10.9" height="2" fill="#00002c"/>
<rect x="730.8" y="740" width="21.8" height="2" fill="#000026"/>
<rect x="752.6" y="740" width="10.9" height="2" fill="#00002c"/>
<rect x="774.4" y="740" width="10.9" height="2" fill="#000026"/>
<rect x="785.4" y="740" width="10.9" height="2" fill="#00002c"/>
<rect x="818.1" y="740" width="10.9" height="2" fill="#000026"/>
<rect x="840.0" y="740" width="43.7" height="2" fill="#000026"/>
<rect x="894.6" y="740" width="10.9" height="2" fill="#00002c"/>
<rect x="905.5" y="740" width="10.9" height="2" fill="#000026"/>
<rect x="927.3" y="740" width="10.9" height="2" fill="#00002c"/>
<rect x="938.2" y="740" width="10.9" height="2" fill="#000026"/>
<rect x="971.0" y="740" width="32.8" height="2" fill="#00002c"/>
<rect x="1003.8" y="740" width="21.8" height="2" fill="#000026"/>
<rect x="1036.5" y="740" width="10.9" height="2" fill="#00002c"/>
<rect x="1047.4" y="740" width="21.8" height="2" fill="#000026"/>
<rect x="1069.3" y="740" width="10.9" height="2" fill="#00002c"/>
<rect x="1080.2" y="740" width="10.9" height="2" fill="#000026"/>
<rect x="1091.1" y="740" width="21.8" height="2" fill="#00002c"/>
<rect x="1113.0" y="740" width="10.9" height="2" fill="#000026"/>
<rect x="1123.9" y="740" width="10.9" height="2" fill="#00002c"/>
<rect x="1145.7" y="740" width="32.8" height="2" fill="#000026"/>
<rect x="108.3" y="742" width="10.9" height="2" fill="#000028"/>
<rect x="119.2" y="742" width="10.9" height="2" fill="#00002f"/>
<rect x="152.0" y="742" width="32.8" height="2" fill="#000028"/>
<rect x="184.8" y="742" width="10.9" height="2" fill="#00002f"/>
<rect x="239.4" y="742" width="21.8" height="2" fill="#00002f"/>
<rect x="261.2" y="742" width="10.9" height="2" fill="#000028"/>
<rect x="283.0" y="742" width="10.9" height="2" fill="#00002f"/>
<rect x="294.0" y="742" width="43.7" height="2" fill="#000028"/>
<rect x="392.2" y="742" width="21.8" height="2" fill="#000028"/>
<rect x="414.1" y="742" width="10.9" height="2" fill="#00002f"/>
<rect x="425.0" y="742" width="10.9" height="2" fill="#000028"/>
<rect x="446.8" y="742" width="21.8" height="2" fill="#000028"/>
<rect x="468.7" y="742" width="10.9" height="2" fill="#00002f"/>
<rect x="479.6" y="742" width="10.9" height="2" fill="#000028"/>
<rect x="501.4" y="742" width="10.9" height="2" fill="#000028"/>
<rect x="512.4" y="742" width="10.9" height="2" fill="#00002f"/>
<rect x="534.2" y="742" width="10.9" height="2" fill="#00002f"/>
<rect x="577.9" y="742" width="10.9" height="2" fill="#000028"/>
<rect x="588.8" y="742" width="10.9" height="2" fill="#00002f"/>
<rect x="599.7" y="742" width="10.9" height="2" fill="#000028"/>
<rect x="621.6" y="742" width="10.9" height="2" fill="#00002f"/>
<rect x="654.3" y="742" width="10.9" height="2" fill="#00002f"/>
<rect x="665.2" y="742" width="32.8" height="2" fill="#000028"/>
<rect x="698.0" y="742" width="10.9" height="2" fill="#00002f"/>
<rect x="708.9" y="742" width="10.9" height="2" fill="#000028"/>
<rect x="719.8" y="742" width="10.9" height="2" fill="#00002f"/>
<rect x="730.8" y="742" width="10.9" height="2" fill="#000028"/>
<rect x="741.7" y="742" width="10.9" height="2" fill="#00002f"/>
<rect x="752.6" y="742" width="32.8" height="2" fill="#000028"/>
<rect x="807.2" y="742" width="10.9" height="2" fill="#000028"/>
<rect x="829.0" y="742" width="10.9" height="2" fill="#00002f"/>
<rect x="872.7" y="742" width="10.9" height="2" fill="#00002f"/>
<rect x="927.3" y="742" width="43.7" height="2" fill="#000028"/>
<rect x="981.9" y="742" width="21.8" height="2" fill="#000028"/>
<rect x="1003.8" y="742" width="32.8" height="2" fill="#00002f"/>
<rect x="1047.4" y="742" width="32.8" height="2" fill="#00002f"/>
<rect x="1123.9" y="742" width="21.8" height="2" fill="#00002f"/>
<rect x="1145.7" y="742" width="10.9" height="2" fill="#000028"/>
<rect x="1156.6" y="742" width="10.9" height="2" fill="#00002f"/>
<rect x="1167.6" y="742" width="10.9" height="2" fill="#000028"/>
<rect x="97.0" y="744" width="11.3" height="2" fill="#000015"/>
<rect x="108.3" y="744" width="10.9" height="2" fill="#00001c"/>
<rect x="119.2" y="744" width="10.9" height="2" fill="#000015"/>
<rect x="130.2" y="744" width="21.8" height="2" fill="#00001c"/>
<rect x="152.0" y="744" width="32.8" height="2" fill="#000015"/>
<rect x="184.8" y="744" width="32.8" height="2" fill="#00001c"/>
<rect x="228.4" y="744" width="32.8" height="2" fill="#00001c"/>
<rect x="261.2" y="744" width="10.9" height="2" fill="#000015"/>
<rect x="272.1" y="744" width="65.5" height="2" fill="#00001c"/>
<rect x="337.6" y="744" width="10.9" height="2" fill="#000015"/>
<rect x="348.6" y="744" width="10.9" height="2" fill="#00001c"/>
<rect x="359.5" y="744" width="10.9" height="2" fill="#000015"/>
<rect x="370.4" y="744" width="10.9" height="2" fill="#00001c"/>
<rect x="381.3" y="744" width="32.8" height="2" fill="#000015"/>
<rect x="414.1" y="744" width="10.9" height="2" fill="#00001c"/>
<rect x="435.9" y="744" width="10.9" height="2" fill="#000015"/>
<rect x="446.8" y="744" width="32.8" height="2" fill="#00001c"/>
<rect x="479.6" y="744" width="10.9" height="2" fill="#000015"/>
<rect x="490.5" y="744" width="32.8" height="2" fill="#00001c"/>
<rect x="523.3" y="744" width="10.9" height="2" fill="#000015"/>
<rect x="545.1" y="744" width="21.8" height="2" fill="#000015"/>
<rect x="567.0" y="744" width="21.8" height="2" fill="#00001c"/>
<rect x="588.8" y="744" width="10.9" height="2" fill="#000015"/>
<rect x="599.7" y="744" width="10.9" height="2" fill="#00001c"/>
<rect x="610.6" y="744" width="10.9" height="2" fill="#000015"/>
<rect x="621.6" y="744" width="87.4" height="2" fill="#00001c"/>
<rect x="708.9" y="744" width="10.9" height="2" fill="#000015"/>
<rect x="719.8" y="744" width="10.9" height="2" fill="#00001c"/>
<rect x="730.8" y="744" width="32.8" height="2" fill="#000015"/>
<rect x="763.5" y="744" width="43.7" height="2" fill="#00001c"/>
<rect x="807.2" y="744" width="10.9" height="2" fill="#000015"/>
<rect x="818.1" y="744" width="76.4" height="2" fill="#00001c"/>
<rect x="894.6" y="744" width="10.9" height="2" fill="#000015"/>
<rect x="905.5" y="744" width="32.8" height="2" fill="#00001c"/>
<rect x="938.2" y="744" width="10.9" height="2" fill="#000015"/>
<rect x="949.2" y="744" width="32.8" height="2" fill="#00001c"/>
<rect x="981.9" y="744" width="10.9" height="2" fill="#000015"/>
<rect x="992.8" y="744" width="21.8" height="2" fill="#00001c"/>
<rect x="1014.7" y="744" width="32.8" height="2" fill="#000015"/>
<rect x="1047.4" y="744" width="21.8" height="2" fill="#00001c"/>
<rect x="1069.3" y="744" width="32.8" height="2" fill="#000015"/>
<rect x="1102.0" y="744" width="21.8" height="2" fill="#00001c"/>
<rect x="1123.9" y="744" width="10.9" height="2" fill="#000015"/>
<rect x="1134.8" y="744" width="10.9" height="2" fill="#00001c"/>
<rect x="1145.7" y="744" width="10.9" height="2" fill="#000015"/>
<rect x="1167.6" y="744" width="10.9" height="2" fill="#00001c"/>
<rect x="1178.5" y="744" width="11.0" height="2" fill="#000015"/>
<rect x="108.3" y="746" width="10.9" height="2" fill="#00002c"/>
<rect x="119.2" y="746" width="10.9" height="2" fill="#00003a"/>
<rect x="130.2" y="746" width="21.8" height="2" fill="#000033"/>
<rect x="152.0" y="746" width="21.8" height="2" fill="#00002c"/>
<rect x="173.8" y="746" width="10.9" height="2" fill="#000033"/>
<rect x="195.7" y="746" width="21.8" height="2" fill="#00002c"/>
<rect x="228.4" y="746" width="10.9" height="2" fill="#00002c"/>
<rect x="239.4" y="746" width="21.8" height="2" fill="#000033"/>
<rect x="261.2" y="746" width="10.9" height="2" fill="#00002c"/>
<rect x="272.1" y="746" width="10.9" height="2" fill="#000033"/>
<rect x="283.0" y="746" width="10.9" height="2" fill="#00002c"/>
<rect x="304.9" y="746" width="10.9" height="2" fill="#000033"/>
<rect x="315.8" y="746" width="10.9" height="2" fill="#00002c"/>
<rect x="326.7" y="746" width="21.8" height="2" fill="#000033"/>
<rect x="348.6" y="746" width="10.9" height="2" fill="#00002c"/>
<rect x="359.5" y="746" width="21.8" height="2" fill="#000033"/>
<rect x="381.3" y="746" width="21.8" height="2" fill="#00002c"/>
<rect x="403.2" y="746" width="76.4" height="2" fill="#000033"/>
<rect x="479.6" y="746" width="21.8" height="2" fill="#00002c"/>
<rect x="501.4" y="746" width="10.9" height="2" fill="#000033"/>
<rect x="523.3" y="746" width="10.9" height="2" fill="#00002c"/>
<rect x="534.2" y="746" width="32.8" height="2" fill="#000033"/>
<rect x="567.0" y="746" width="32.8" height="2" fill="#00002c"/>
<rect x="599.7" y="746" width="10.9" height="2" fill="#000033"/>
<rect x="610.6" y="746" width="10.9" height="2" fill="#00002c"/>
<rect x="621.6" y="746" width="10.9" height="2" fill="#000033"/>
<rect x="632.5" y="746" width="10.9" height="2" fill="#00003a"/>
<rect x="643.4" y="746" width="10.9" height="2" fill="#00002c"/>
<rect x="654.3" y="746" width="21.8" height="2" fill="#000033"/>
<rect x="676.2" y="746" width="21.8" height="2" fill="#00002c"/>
<rect x="698.0" y="746" width="10.9" height="2" fill="#00003a"/>
<rect x="719.8" y="746" width="10.9" height="2" fill="#000033"/>
<rect x="741.7" y="746" width="10.9" height="2" fill="#000033"/>
<rect x="752.6" y="746" width="10.9" height="2" fill="#00003a"/>
<rect x="763.5" y="746" width="10.9" height="2" fill="#00002c"/>
<rect x="785.4" y="746" width="10.9" height="2" fill="#000033"/>
<rect x="796.3" y="746" width="10.9" height="2" fill="#00002c"/>
<rect x="807.2" y="746" width="10.9" height="2" fill="#000033"/>
<rect x="818.1" y="746" width="10.9" height="2" fill="#00002c"/>
<rect x="829.0" y="746" width="21.8" height="2" fill="#000033"/>
<rect x="850.9" y="746" width="21.8" height="2" fill="#00002c"/>
<rect x="872.7" y="746" width="10.9" height="2" fill="#00003a"/>
<rect x="883.6" y="746" width="10.9" height="2" fill="#00002c"/>
<rect x="894.6" y="746" width="10.9" height="2" fill="#000033"/>
<rect x="905.5" y="746" width="10.9" height="2" fill="#00002c"/>
<rect x="916.4" y="746" width="10.9" height="2" fill="#000033"/>
<rect x="938.2" y="746" width="10.9" height="2" fill="#00003a"/>
<rect x="949.2" y="746" width="10.9" height="2" fill="#00002c"/>
<rect x="971.0" y="746" width="21.8" height="2" fill="#00002c"/>
<rect x="1003.8" y="746" width="21.8" height="2" fill="#00002c"/>
<rect x="1025.6" y="746" width="10.9" height="2" fill="#000033"/>
<rect x="1036.5" y="746" width="32.8" height="2" fill="#00002c"/>
<rect x="1069.3" y="746" width="10.9" height="2" fill="#000033"/>
<rect x="1080.2" y="746" width="10.9" height="2" fill="#00003a"/>
<rect x="1091.1" y="746" width="21.8" height="2" fill="#00002c"/>
<rect x="1113.0" y="746" width="10.9" height="2" fill="#000033"/>
<rect x="1123.9" y="746" width="21.8" height="2" fill="#00002c"/>
<rect x="1156.6" y="746" width="32.9" height="2" fill="#000033"/>
<rect x="108.3" y="748" width="10.9" height="2" fill="#00001e"/>
<rect x="119.2" y="748" width="10.9" height="2" fill="#00002d"/>
<rect x="152.0" y="748" width="21.8" height="2" fill="#00002d"/>
<rect x="184.8" y="748" width="10.9" height="2" fill="#00001e"/>
<rect x="206.6" y="748" width="10.9" height="2" fill="#00001e"/>
<rect x="217.5" y="748" width="10.9" height="2" fill="#00002d"/>
<rect x="239.4" y="748" width="10.9" height="2" fill="#00002d"/>
<rect x="250.3" y="748" width="10.9" height="2" fill="#00001e"/>
<rect x="272.1" y="748" width="10.9" height="2" fill="#00001e"/>
<rect x="294.0" y="748" width="21.8" height="2" fill="#00001e"/>
<rect x="326.7" y="748" width="32.8" height="2" fill="#00001e"/>
<rect x="414.1" y="748" width="21.8" height="2" fill="#00002d"/>
<rect x="435.9" y="748" width="10.9" height="2" fill="#00001e"/>
<rect x="446.8" y="748" width="21.8" height="2" fill="#00002d"/>
<rect x="479.6" y="748" width="10.9" height="2" fill="#00001e"/>
<rect x="490.5" y="748" width="10.9" height="2" fill="#00002d"/>
<rect x="512.4" y="748" width="21.8" height="2" fill="#00001e"/>
<rect x="534.2" y="748" width="10.9" height="2" fill="#00002d"/>
<rect x="556.0" y="748" width="43.7" height="2" fill="#00001e"/>
<rect x="621.6" y="748" width="10.9" height="2" fill="#00001e"/>
<rect x="632.5" y="748" width="21.8" height="2" fill="#00002d"/>
<rect x="654.3" y="748" width="10.9" height="2" fill="#00001e"/>
<rect x="665.2" y="748" width="10.9" height="2" fill="#00002d"/>
<rect x="708.9" y="748" width="32.8" height="2" fill="#00002d"/>
<rect x="741.7" y="748" width="10.9" height="2" fill="#00001e"/>
<rect x="796.3" y="748" width="10.9" height="2" fill="#00002d"/>
<rect x="818.1" y="748" width="32.8" height="2" fill="#00001e"/>
<rect x="861.8" y="748" width="10.9" height="2" fill="#00001e"/>
<rect x="883.6" y="748" width="10.9" height="2" fill="#00001e"/>
<rect x="927.3" y="748" width="10.9" height="2" fill="#00002d"/>
<rect x="938.2" y="748" width="10.9" height="2" fill="#00001e"/>
<rect x="949.2" y="748" width="10.9" height="2" fill="#00002d"/>
<rect x="992.8" y="748" width="10.9" height="2" fill="#00002d"/>
<rect x="1025.6" y="748" width="10.9" height="2" fill="#00002d"/>
<rect x="1036.5" y="748" width="10.9" height="2" fill="#00001e"/>
<rect x="1069.3" y="748" width="10.9" height="2" fill="#00001e"/>
<rect x="1102.0" y="748" width="10.9" height="2" fill="#00002d"/>
<rect x="1123.9" y="748" width="10.9" height="2" fill="#00002d"/>
<rect x="1156.6" y="748" width="10.9" height="2" fill="#00002d"/>
<rect x="1167.6" y="748" width="10.9" height="2" fill="#00001e"/>
<rect x="108.3" y="750" width="10.9" height="2" fill="#00002f"/>
<rect x="152.0" y="750" width="10.9" height="2" fill="#00002f"/>
<rect x="206.6" y="750" width="10.9" height="2" fill="#00002f"/>
<rect x="228.4" y="750" width="10.9" height="2" fill="#00002f"/>
<rect x="283.0" y="750" width="32.8" height="2" fill="#00002f"/>
<rect x="348.6" y="750" width="32.8" height="2" fill="#00002f"/>
<rect x="381.3" y="750" width="10.9" height="2" fill="#000020"/>
<rect x="392.2" y="750" width="21.8" height="2" fill="#00002f"/>
<rect x="425.0" y="750" width="10.9" height="2" fill="#000020"/>
<rect x="446.8" y="750" width="10.9" height="2" fill="#000020"/>
<rect x="468.7" y="750" width="120.1" height="2" fill="#00002f"/>
<rect x="599.7" y="750" width="10.9" height="2" fill="#00002f"/>
<rect x="621.6" y="750" width="10.9" height="2" fill="#00002f"/>
<rect x="632.5" y="750" width="10.9" height="2" fill="#000020"/>
<rect x="654.3" y="750" width="10.9" height="2" fill="#000020"/>
<rect x="665.2" y="750" width="32.8" height="2" fill="#00002f"/>
<rect x="708.9" y="750" width="32.8" height="2" fill="#00002f"/>
<rect x="796.3" y="750" width="21.8" height="2" fill="#00002f"/>
<rect x="818.1" y="750" width="10.9" height="2" fill="#000020"/>
<rect x="829.0" y="750" width="10.9" height="2" fill="#00002f"/>
<rect x="840.0" y="750" width="10.9" height="2" fill="#000020"/>
<rect x="861.8" y="750" width="32.8" height="2" fill="#00002f"/>
<rect x="905.5" y="750" width="10.9" height="2" fill="#000020"/>
<rect x="927.3" y="750" width="32.8" height="2" fill="#00002f"/>
<rect x="981.9" y="750" width="10.9" height="2" fill="#000020"/>
<rect x="992.8" y="750" width="10.9" height="2" fill="#00002f"/>
<rect x="1025.6" y="750" width="21.8" height="2" fill="#000020"/>
<rect x="1047.4" y="750" width="10.9" height="2" fill="#00002f"/>
<rect x="1069.3" y="750" width="10.9" height="2" fill="#00002f"/>
<rect x="1080.2" y="750" width="10.9" height="2" fill="#000020"/>
<rect x="1091.1" y="750" width="10.9" height="2" fill="#00002f"/>
<rect x="1113.0" y="750" width="10.9" height="2" fill="#000020"/>
<rect x="1123.9" y="750" width="10.9" height="2" fill="#00002f"/>
<rect x="1145.7" y="750" width="10.9" height="2" fill="#00002f"/>
<rect x="1167.6" y="750" width="10.9" height="2" fill="#000020"/>
<rect x="1178.5" y="750" width="11.0" height="2" fill="#00002f"/>
<rect x="97.0" y="752" width="22.2" height="2" fill="#000031"/>
<rect x="130.2" y="752" width="32.8" height="2" fill="#000031"/>
<rect x="162.9" y="752" width="10.9" height="2" fill="#000039"/>
<rect x="184.8" y="752" width="10.9" height="2" fill="#000039"/>
<rect x="195.7" y="752" width="10.9" height="2" fill="#000031"/>
<rect x="206.6" y="752" width="21.8" height="2" fill="#000021"/>
<rect x="228.4" y="752" width="21.8" height="2" fill="#000031"/>
<rect x="272.1" y="752" width="10.9" height="2" fill="#000031"/>
<rect x="294.0" y="752" width="21.8" height="2" fill="#000031"/>
<rect x="337.6" y="752" width="10.9" height="2" fill="#000031"/>
<rect x="359.5" y="752" width="10.9" height="2" fill="#000031"/>
<rect x="381.3" y="752" width="10.9" height="2" fill="#000031"/>
<rect x="403.2" y="752" width="21.8" height="2" fill="#000031"/>
<rect x="446.8" y="752" width="10.9" height="2" fill="#000031"/>
<rect x="457.8" y="752" width="10.9" height="2" fill="#000039"/>
<rect x="468.7" y="752" width="21.8" height="2" fill="#000031"/>
<rect x="512.4" y="752" width="10.9" height="2" fill="#000039"/>
<rect x="523.3" y="752" width="21.8" height="2" fill="#000031"/>
<rect x="556.0" y="752" width="10.9" height="2" fill="#000031"/>
<rect x="567.0" y="752" width="10.9" height="2" fill="#000039"/>
<rect x="577.9" y="752" width="21.8" height="2" fill="#000031"/>
<rect x="621.6" y="752" width="10.9" height="2" fill="#000039"/>
<rect x="643.4" y="752" width="21.8" height="2" fill="#000031"/>
<rect x="665.2" y="752" width="10.9" height="2" fill="#000039"/>
<rect x="676.2" y="752" width="10.9" height="2" fill="#000031"/>
<rect x="698.0" y="752" width="10.9" height="2" fill="#000021"/>
<rect x="730.8" y="752" width="21.8" height="2" fill="#000031"/>
<rect x="752.6" y="752" width="10.9" height="2" fill="#000039"/>
<rect x="774.4" y="752" width="21.8" height="2" fill="#000031"/>
<rect x="796.3" y="752" width="10.9" height="2" fill="#000039"/>
<rect x="807.2" y="752" width="10.9" height="2" fill="#000031"/>
<rect x="829.0" y="752" width="32.8" height="2" fill="#000031"/>
<rect x="861.8" y="752" width="10.9" height="2" fill="#000039"/>
<rect x="894.6" y="752" width="21.8" height="2" fill="#000031"/>
<rect x="927.3" y="752" width="10.9" height="2" fill="#000031"/>
<rect x="938.2" y="752" width="10.9" height="2" fill="#000039"/>
<rect x="960.1" y="752" width="32.8" height="2" fill="#000031"/>
<rect x="1014.7" y="752" width="32.8" height="2" fill="#000031"/>
<rect x="1058.4" y="752" width="21.8" height="2" fill="#000031"/>
<rect x="1091.1" y="752" width="10.9" height="2" fill="#000031"/>
<rect x="1102.0" y="752" width="21.8" height="2" fill="#000039"/>
<rect x="1123.9" y="752" width="32.8" height="2" fill="#000031"/>
<rect x="108.3" y="754" width="10.9" height="2" fill="#000033"/>
<rect x="130.2" y="754" width="10.9" height="2" fill="#000033"/>
<rect x="162.9" y="754" width="10.9" height="2" fill="#00003b"/>
<rect x="195.7" y="754" width="21.8" height="2" fill="#000033"/>
<rect x="228.4" y="754" width="10.9" height="2" fill="#000033"/>
<rect x="250.3" y="754" width="10.9" height="2" fill="#000033"/>
<rect x="261.2" y="754" width="10.9" height="2" fill="#000022"/>
<rect x="283.0" y="754" width="10.9" height="2" fill="#00003b"/>
<rect x="294.0" y="754" width="32.8" height="2" fill="#000033"/>
<rect x="337.6" y="754" width="10.9" height="2" fill="#000033"/>
<rect x="359.5" y="754" width="10.9" height="2" fill="#00003b"/>
<rect x="370.4" y="754" width="21.8" height="2" fill="#000033"/>
<rect x="392.2" y="754" width="10.9" height="2" fill="#00003b"/>
<rect x="468.7" y="754" width="32.8" height="2" fill="#000033"/>
<rect x="501.4" y="754" width="21.8" height="2" fill="#00003b"/>
<rect x="534.2" y="754" width="10.9" height="2" fill="#000033"/>
<rect x="567.0" y="754" width="10.9" height="2" fill="#00003b"/>
<rect x="588.8" y="754" width="21.8" height="2" fill="#000033"/>
<rect x="610.6" y="754" width="10.9" height="2" fill="#00003b"/>
<rect x="621.6" y="754" width="10.9" height="2" fill="#000033"/>
<rect x="665.2" y="754" width="21.8" height="2" fill="#00003b"/>
<rect x="730.8" y="754" width="21.8" height="2" fill="#00003b"/>
<rect x="752.6" y="754" width="10.9" height="2" fill="#000033"/>
<rect x="774.4" y="754" width="32.8" height="2" fill="#000033"/>
<rect x="807.2" y="754" width="10.9" height="2" fill="#00003b"/>
<rect x="840.0" y="754" width="10.9" height="2" fill="#000033"/>
<rect x="850.9" y="754" width="10.9" height="2" fill="#00003b"/>
<rect x="861.8" y="754" width="10.9" height="2" fill="#000033"/>
<rect x="883.6" y="754" width="21.8" height="2" fill="#000033"/>
<rect x="949.2" y="754" width="10.9" height="2" fill="#000033"/>
<rect x="992.8" y="754" width="10.9" height="2" fill="#000033"/>
<rect x="1003.8" y="754" width="10.9" height="2" fill="#000022"/>
<rect x="1014.7" y="754" width="10.9" height="2" fill="#000033"/>
<rect x="1047.4" y="754" width="10.9" height="2" fill="#00003b"/>
<rect x="1069.3" y="754" width="10.9" height="2" fill="#00003b"/>
<rect x="1080.2" y="754" width="10.9" height="2" fill="#000033"/>
<rect x="1091.1" y="754" width="10.9" height="2" fill="#00003b"/>
<rect x="1134.8" y="754" width="10.9" height="2" fill="#00003b"/>
<rect x="1145.7" y="754" width="21.8" height="2" fill="#000033"/>
<rect x="97.0" y="756" width="22.2" height="2" fill="#000035"/>
<rect x="152.0" y="756" width="10.9" height="2" fill="#00003e"/>
<rect x="162.9" y="756" width="10.9" height="2" fill="#000035"/>
<rect x="184.8" y="756" width="10.9" height="2" fill="#00003e"/>
<rect x="206.6" y="756" width="10.9" height="2" fill="#000035"/>
<rect x="239.4" y="756" width="10.9" height="2" fill="#00003e"/>
<rect x="250.3" y="756" width="10.9" height="2" fill="#000035"/>
<rect x="272.1" y="756" width="21.8" height="2" fill="#000035"/>
<rect x="294.0" y="756" width="10.9" height="2" fill="#00003e"/>
<rect x="315.8" y="756" width="10.9" height="2" fill="#00003e"/>
<rect x="337.6" y="756" width="10.9" height="2" fill="#00003e"/>
<rect x="348.6" y="756" width="10.9" height="2" fill="#000035"/>
<rect x="370.4" y="756" width="10.9" height="2" fill="#000035"/>
<rect x="414.1" y="756" width="10.9" height="2" fill="#000035"/>
<rect x="425.0" y="756" width="32.8" height="2" fill="#00003e"/>
<rect x="479.6" y="756" width="10.9" height="2" fill="#00003e"/>
<rect x="501.4" y="756" width="10.9" height="2" fill="#00003e"/>
<rect x="523.3" y="756" width="10.9" height="2" fill="#00003e"/>
<rect x="545.1" y="756" width="10.9" height="2" fill="#00003e"/>
<rect x="556.0" y="756" width="10.9" height="2" fill="#000035"/>
<rect x="588.8" y="756" width="10.9" height="2" fill="#00003e"/>
<rect x="599.7" y="756" width="10.9" height="2" fill="#000035"/>
<rect x="621.6" y="756" width="10.9" height="2" fill="#000035"/>
<rect x="632.5" y="756" width="10.9" height="2" fill="#00003e"/>
<rect x="654.3" y="756" width="10.9" height="2" fill="#000035"/>
<rect x="687.1" y="756" width="10.9" height="2" fill="#00003e"/>
<rect x="698.0" y="756" width="10.9" height="2" fill="#000035"/>
<rect x="741.7" y="756" width="21.8" height="2" fill="#000035"/>
<rect x="785.4" y="756" width="21.8" height="2" fill="#000035"/>
<rect x="807.2" y="756" width="10.9" height="2" fill="#00003e"/>
<rect x="818.1" y="756" width="10.9" height="2" fill="#000035"/>
<rect x="850.9" y="756" width="10.9" height="2" fill="#00003e"/>
<rect x="861.8" y="756" width="10.9" height="2" fill="#000035"/>
<rect x="872.7" y="756" width="10.9" height="2" fill="#00003e"/>
<rect x="894.6" y="756" width="10.9" height="2" fill="#00003e"/>
<rect x="905.5" y="756" width="10.9" height="2" fill="#000035"/>
<rect x="916.4" y="756" width="21.8" height="2" fill="#00003e"/>
<rect x="938.2" y="756" width="10.9" height="2" fill="#000035"/>
<rect x="960.1" y="756" width="10.9" height="2" fill="#00003e"/>
<rect x="971.0" y="756" width="10.9" height="2" fill="#000035"/>
<rect x="981.9" y="756" width="10.9" height="2" fill="#00003e"/>
<rect x="1014.7" y="756" width="10.9" height="2" fill="#00003e"/>
<rect x="1025.6" y="756" width="10.9" height="2" fill="#000035"/>
<rect x="1047.4" y="756" width="21.8" height="2" fill="#000035"/>
<rect x="1080.2" y="756" width="32.8" height="2" fill="#000035"/>
<rect x="1123.9" y="756" width="32.8" height="2" fill="#00003e"/>
<rect x="1156.6" y="756" width="32.9" height="2" fill="#000035"/>
<rect x="108.3" y="758" width="21.8" height="2" fill="#000040"/>
<rect x="130.2" y="758" width="43.7" height="2" fill="#000037"/>
<rect x="184.8" y="758" width="10.9" height="2" fill="#000040"/>
<rect x="239.4" y="758" width="10.9" height="2" fill="#000040"/>
<rect x="272.1" y="758" width="10.9" height="2" fill="#000037"/>
<rect x="304.9" y="758" width="43.7" height="2" fill="#000037"/>
<rect x="359.5" y="758" width="10.9" height="2" fill="#000040"/>
<rect x="370.4" y="758" width="10.9" height="2" fill="#000037"/>
<rect x="403.2" y="758" width="21.8" height="2" fill="#000037"/>
<rect x="446.8" y="758" width="10.9" height="2" fill="#000037"/>
<rect x="468.7" y="758" width="10.9" height="2" fill="#000037"/>
<rect x="479.6" y="758" width="10.9" height="2" fill="#000040"/>
<rect x="501.4" y="758" width="21.8" height="2" fill="#000037"/>
<rect x="534.2" y="758" width="21.8" height="2" fill="#000040"/>
<rect x="567.0" y="758" width="10.9" height="2" fill="#000037"/>
<rect x="577.9" y="758" width="10.9" height="2" fill="#000040"/>
<rect x="588.8" y="758" width="21.8" height="2" fill="#000037"/>
<rect x="610.6" y="758" width="10.9" height="2" fill="#000040"/>
<rect x="621.6" y="758" width="10.9" height="2" fill="#000037"/>
<rect x="665.2" y="758" width="10.9" height="2" fill="#000037"/>
<rect x="676.2" y="758" width="10.9" height="2" fill="#000040"/>
<rect x="687.1" y="758" width="10.9" height="2" fill="#000037"/>
<rect x="698.0" y="758" width="32.8" height="2" fill="#000040"/>
<rect x="741.7" y="758" width="10.9" height="2" fill="#000037"/>
<rect x="752.6" y="758" width="21.8" height="2" fill="#000040"/>
<rect x="785.4" y="758" width="21.8" height="2" fill="#000037"/>
<rect x="818.1" y="758" width="10.9" height="2" fill="#000037"/>
<rect x="840.0" y="758" width="21.8" height="2" fill="#000037"/>
<rect x="883.6" y="758" width="10.9" height="2" fill="#000040"/>
<rect x="894.6" y="758" width="10.9" height="2" fill="#000037"/>
<rect x="905.5" y="758" width="10.9" height="2" fill="#000040"/>
<rect x="916.4" y="758" width="10.9" height="2" fill="#000037"/>
<rect x="927.3" y="758" width="32.8" height="2" fill="#000040"/>
<rect x="971.0" y="758" width="10.9" height="2" fill="#000037"/>
<rect x="992.8" y="758" width="10.9" height="2" fill="#000037"/>
<rect x="1014.7" y="758" width="10.9" height="2" fill="#000037"/>
<rect x="1025.6" y="758" width="10.9" height="2" fill="#000040"/>
<rect x="1036.5" y="758" width="10.9" height="2" fill="#000037"/>
<rect x="1058.4" y="758" width="21.8" height="2" fill="#000037"/>
<rect x="1080.2" y="758" width="10.9" height="2" fill="#000040"/>
<rect x="1113.0" y="758" width="10.9" height="2" fill="#000037"/>
<rect x="1134.8" y="758" width="10.9" height="2" fill="#000037"/>
<rect x="1145.7" y="758" width="10.9" height="2" fill="#000040"/>
<rect x="1156.6" y="758" width="10.9" height="2" fill="#000037"/>
<rect x="1178.5" y="758" width="11.0" height="2" fill="#000037"/>
<rect x="97.0" y="760" width="33.2" height="2" fill="#000025"/>
<rect x="173.8" y="760" width="10.9" height="2" fill="#000025"/>
<rect x="195.7" y="760" width="10.9" height="2" fill="#000038"/>
<rect x="239.4" y="760" width="10.9" height="2" fill="#000025"/>
<rect x="250.3" y="760" width="10.9" height="2" fill="#000038"/>
<rect x="370.4" y="760" width="10.9" height="2" fill="#000025"/>
<rect x="392.2" y="760" width="10.9" height="2" fill="#000038"/>
<rect x="446.8" y="760" width="10.9" height="2" fill="#000038"/>
<rect x="468.7" y="760" width="10.9" height="2" fill="#000038"/>
<rect x="479.6" y="760" width="21.8" height="2" fill="#000025"/>
<rect x="501.4" y="760" width="10.9" height="2" fill="#000038"/>
<rect x="523.3" y="760" width="10.9" height="2" fill="#000025"/>
<rect x="556.0" y="760" width="10.9" height="2" fill="#000038"/>
<rect x="567.0" y="760" width="10.9" height="2" fill="#000025"/>
<rect x="588.8" y="760" width="21.8" height="2" fill="#000038"/>
<rect x="610.6" y="760" width="10.9" height="2" fill="#000025"/>
<rect x="665.2" y="760" width="21.8" height="2" fill="#000038"/>
<rect x="698.0" y="760" width="32.8" height="2" fill="#000038"/>
<rect x="741.7" y="760" width="32.8" height="2" fill="#000038"/>
<rect x="774.4" y="760" width="10.9" height="2" fill="#000025"/>
<rect x="785.4" y="760" width="10.9" height="2" fill="#000038"/>
<rect x="796.3" y="760" width="10.9" height="2" fill="#000025"/>
<rect x="807.2" y="760" width="10.9" height="2" fill="#000038"/>
<rect x="840.0" y="760" width="10.9" height="2" fill="#000038"/>
<rect x="872.7" y="760" width="21.8" height="2" fill="#000038"/>
<rect x="938.2" y="760" width="10.9" height="2" fill="#000038"/>
<rect x="1003.8" y="760" width="21.8" height="2" fill="#000038"/>
<rect x="1047.4" y="760" width="10.9" height="2" fill="#000025"/>
<rect x="1069.3" y="760" width="10.9" height="2" fill="#000025"/>
<rect x="1102.0" y="760" width="10.9" height="2" fill="#000025"/>
<rect x="1113.0" y="760" width="10.9" height="2" fill="#000038"/>
<rect x="1134.8" y="760" width="32.8" height="2" fill="#000038"/>
<rect x="1167.6" y="760" width="10.9" height="2" fill="#000025"/>
<rect x="119.2" y="762" width="21.8" height="2" fill="#000039"/>
<rect x="141.1" y="762" width="21.8" height="2" fill="#000042"/>
<rect x="162.9" y="762" width="10.9" height="2" fill="#000039"/>
<rect x="173.8" y="762" width="10.9" height="2" fill="#00004b"/>
<rect x="184.8" y="762" width="21.8" height="2" fill="#000039"/>
<rect x="206.6" y="762" width="10.9" height="2" fill="#000042"/>
<rect x="217.5" y="762" width="43.7" height="2" fill="#000039"/>
<rect x="261.2" y="762" width="21.8" height="2" fill="#000042"/>
<rect x="283.0" y="762" width="10.9" height="2" fill="#000039"/>
<rect x="304.9" y="762" width="43.7" height="2" fill="#000039"/>
<rect x="348.6" y="762" width="21.8" height="2" fill="#000042"/>
<rect x="370.4" y="762" width="21.8" height="2" fill="#000039"/>
<rect x="392.2" y="762" width="10.9" height="2" fill="#000042"/>
<rect x="403.2" y="762" width="10.9" height="2" fill="#00004b"/>
<rect x="414.1" y="762" width="21.8" height="2" fill="#000039"/>
<rect x="435.9" y="762" width="10.9" height="2" fill="#000042"/>
<rect x="457.8" y="762" width="10.9" height="2" fill="#000039"/>
<rect x="468.7" y="762" width="21.8" height="2" fill="#000042"/>
<rect x="490.5" y="762" width="10.9" height="2" fill="#000039"/>
<rect x="512.4" y="762" width="32.8" height="2" fill="#000042"/>
<rect x="545.1" y="762" width="10.9" height="2" fill="#00004b"/>
<rect x="556.0" y="762" width="10.9" height="2" fill="#000042"/>
<rect x="567.0" y="762" width="10.9" height="2" fill="#000039"/>
<rect x="588.8" y="762" width="32.8" height="2" fill="#000039"/>
<rect x="643.4" y="762" width="21.8" height="2" fill="#000042"/>
<rect x="665.2" y="762" width="10.9" height="2" fill="#000039"/>
<rect x="676.2" y="762" width="10.9" height="2" fill="#00004b"/>
<rect x="687.1" y="762" width="10.9" height="2" fill="#000042"/>
<rect x="708.9" y="762" width="10.9" height="2" fill="#000039"/>
<rect x="719.8" y="762" width="10.9" height="2" fill="#000042"/>
<rect x="730.8" y="762" width="10.9" height="2" fill="#000039"/>
<rect x="741.7" y="762" width="10.9" height="2" fill="#000042"/>
<rect x="763.5" y="762" width="10.9" height="2" fill="#000039"/>
<rect x="774.4" y="762" width="10.9" height="2" fill="#000042"/>
<rect x="785.4" y="762" width="10.9" height="2" fill="#000039"/>
<rect x="796.3" y="762" width="10.9" height="2" fill="#000042"/>
<rect x="818.1" y="762" width="32.8" height="2" fill="#000039"/>
<rect x="850.9" y="762" width="10.9" height="2" fill="#000042"/>
<rect x="861.8" y="762" width="10.9" height="2" fill="#000039"/>
<rect x="872.7" y="762" width="10.9" height="2" fill="#00004b"/>
<rect x="883.6" y="762" width="21.8" height="2" fill="#000039"/>
<rect x="927.3" y="762" width="10.9" height="2" fill="#000042"/>
<rect x="971.0" y="762" width="10.9" height="2" fill="#000039"/>
<rect x="981.9" y="762" width="32.8" height="2" fill="#000042"/>
<rect x="1036.5" y="762" width="10.9" height="2" fill="#000042"/>
<rect x="1047.4" y="762" width="10.9" height="2" fill="#000039"/>
<rect x="1058.4" y="762" width="10.9" height="2" fill="#000042"/>
<rect x="1069.3" y="762" width="10.9" height="2" fill="#000039"/>
<rect x="1091.1" y="762" width="10.9" height="2" fill="#000039"/>
<rect x="1113.0" y="762" width="10.9" height="2" fill="#000042"/>
<rect x="1123.9" y="762" width="43.7" height="2" fill="#000039"/>
<rect x="1178.5" y="762" width="11.0" height="2" fill="#000042"/>
<rect x="97.0" y="764" width="11.3" height="2" fill="#000039"/>
<rect x="119.2" y="764" width="10.9" height="2" fill="#000039"/>
<rect x="141.1" y="764" width="10.9" height="2" fill="#000026"/>
<rect x="152.0" y="764" width="21.8" height="2" fill="#000039"/>
<rect x="184.8" y="764" width="21.8" height="2" fill="#000039"/>
<rect x="228.4" y="764" width="10.9" height="2" fill="#000039"/>
<rect x="250.3" y="764" width="10.9" height="2" fill="#000039"/>
<rect x="283.0" y="764" width="10.9" height="2" fill="#000039"/>
<rect x="315.8" y="764" width="10.9" height="2" fill="#000039"/>
<rect x="337.6" y="764" width="10.9" height="2" fill="#000039"/>
<rect x="392.2" y="764" width="10.9" height="2" fill="#000039"/>
<rect x="425.0" y="764" width="10.9" height="2" fill="#000026"/>
<rect x="468.7" y="764" width="21.8" height="2" fill="#000026"/>
<rect x="490.5" y="764" width="10.9" height="2" fill="#000039"/>
<rect x="556.0" y="764" width="10.9" height="2" fill="#000026"/>
<rect x="567.0" y="764" width="10.9" height="2" fill="#000039"/>
<rect x="588.8" y="764" width="10.9" height="2" fill="#000026"/>
<rect x="599.7" y="764" width="10.9" height="2" fill="#000039"/>
<rect x="610.6" y="764" width="10.9" height="2" fill="#000026"/>
<rect x="632.5" y="764" width="10.9" height="2" fill="#000039"/>
<rect x="643.4" y="764" width="10.9" height="2" fill="#000026"/>
<rect x="665.2" y="764" width="21.8" height="2" fill="#000039"/>
<rect x="708.9" y="764" width="10.9" height="2" fill="#000039"/>
<rect x="730.8" y="764" width="10.9" height="2" fill="#000039"/>
<rect x="752.6" y="764" width="10.9" height="2" fill="#000039"/>
<rect x="796.3" y="764" width="10.9" height="2" fill="#000026"/>
<rect x="807.2" y="764" width="10.9" height="2" fill="#000039"/>
<rect x="829.0" y="764" width="10.9" height="2" fill="#000039"/>
<rect x="894.6" y="764" width="10.9" height="2" fill="#000039"/>
<rect x="905.5" y="764" width="10.9" height="2" fill="#000026"/>
<rect x="949.2" y="764" width="10.9" height="2" fill="#000039"/>
<rect x="971.0" y="764" width="10.9" height="2" fill="#000039"/>
<rect x="1014.7" y="764" width="10.9" height="2" fill="#000026"/>
<rect x="1036.5" y="764" width="10.9" height="2" fill="#000039"/>
<rect x="1058.4" y="764" width="10.9" height="2" fill="#000039"/>
<rect x="1069.3" y="764" width="10.9" height="2" fill="#000026"/>
<rect x="1123.9" y="764" width="10.9" height="2" fill="#000026"/>
<rect x="1156.6" y="764" width="10.9" height="2" fill="#000026"/>
<rect x="1167.6" y="764" width="10.9" height="2" fill="#000039"/>
<rect x="141.1" y="766" width="32.8" height="2" fill="#000027"/>
<rect x="195.7" y="766" width="10.9" height="2" fill="#000027"/>
<rect x="239.4" y="766" width="10.9" height="2" fill="#000027"/>
<rect x="261.2" y="766" width="10.9" height="2" fill="#000027"/>
<rect x="283.0" y="766" width="21.8" height="2" fill="#000027"/>
<rect x="337.6" y="766" width="54.6" height="2" fill="#000027"/>
<rect x="403.2" y="766" width="21.8" height="2" fill="#000027"/>
<rect x="435.9" y="766" width="10.9" height="2" fill="#000027"/>
<rect x="479.6" y="766" width="10.9" height="2" fill="#000027"/>
<rect x="512.4" y="766" width="21.8" height="2" fill="#000027"/>
<rect x="556.0" y="766" width="21.8" height="2" fill="#000027"/>
<rect x="599.7" y="766" width="32.8" height="2" fill="#000027"/>
<rect x="643.4" y="766" width="10.9" height="2" fill="#000027"/>
<rect x="676.2" y="766" width="10.9" height="2" fill="#000027"/>
<rect x="730.8" y="766" width="21.8" height="2" fill="#000027"/>
<rect x="752.6" y="766" width="10.9" height="2" fill="#00003a"/>
<rect x="774.4" y="766" width="10.9" height="2" fill="#00003a"/>
<rect x="840.0" y="766" width="10.9" height="2" fill="#000027"/>
<rect x="883.6" y="766" width="10.9" height="2" fill="#00003a"/>
<rect x="894.6" y="766" width="10.9" height="2" fill="#000027"/>
<rect x="916.4" y="766" width="10.9" height="2" fill="#000027"/>
<rect x="949.2" y="766" width="10.9" height="2" fill="#000027"/>
<rect x="971.0" y="766" width="10.9" height="2" fill="#00003a"/>
<rect x="1003.8" y="766" width="32.8" height="2" fill="#000027"/>
<rect x="1047.4" y="766" width="32.8" height="2" fill="#000027"/>
<rect x="1102.0" y="766" width="21.8" height="2" fill="#000027"/>
<rect x="1145.7" y="766" width="10.9" height="2" fill="#00003a"/>
<rect x="1156.6" y="766" width="21.8" height="2" fill="#000027"/>
<rect x="97.0" y="768" width="22.2" height="2" fill="#000027"/>
<rect x="130.2" y="768" width="76.4" height="2" fill="#000027"/>
<rect x="217.5" y="768" width="43.7" height="2" fill="#000027"/>
<rect x="261.2" y="768" width="10.9" height="2" fill="#00001d"/>
<rect x="272.1" y="768" width="98.3" height="2" fill="#000027"/>
<rect x="370.4" y="768" width="21.8" height="2" fill="#00001d"/>
<rect x="403.2" y="768" width="10.9" height="2" fill="#000027"/>
<rect x="414.1" y="768" width="10.9" height="2" fill="#00001d"/>
<rect x="425.0" y="768" width="10.9" height="2" fill="#000027"/>
<rect x="446.8" y="768" width="65.5" height="2" fill="#000027"/>
<rect x="512.4" y="768" width="10.9" height="2" fill="#00001d"/>
<rect x="534.2" y="768" width="21.8" height="2" fill="#000027"/>
<rect x="567.0" y="768" width="43.7" height="2" fill="#000027"/>
<rect x="610.6" y="768" width="10.9" height="2" fill="#00001d"/>
<rect x="621.6" y="768" width="10.9" height="2" fill="#000027"/>
<rect x="643.4" y="768" width="32.8" height="2" fill="#000027"/>
<rect x="698.0" y="768" width="10.9" height="2" fill="#000027"/>
<rect x="730.8" y="768" width="32.8" height="2" fill="#000027"/>
<rect x="774.4" y="768" width="43.7" height="2" fill="#000027"/>
<rect x="829.0" y="768" width="10.9" height="2" fill="#000027"/>
<rect x="840.0" y="768" width="10.9" height="2" fill="#00001d"/>
<rect x="850.9" y="768" width="21.8" height="2" fill="#000027"/>
<rect x="883.6" y="768" width="10.9" height="2" fill="#000027"/>
<rect x="916.4" y="768" width="54.6" height="2" fill="#000027"/>
<rect x="971.0" y="768" width="10.9" height="2" fill="#00001d"/>
<rect x="981.9" y="768" width="32.8" height="2" fill="#000027"/>
<rect x="1025.6" y="768" width="21.8" height="2" fill="#00001d"/>
<rect x="1047.4" y="768" width="32.8" height="2" fill="#000027"/>
<rect x="1080.2" y="768" width="10.9" height="2" fill="#00001d"/>
<rect x="1123.9" y="768" width="65.6" height="2" fill="#000027"/>
<rect x="119.2" y="770" width="10.9" height="2" fill="#00003c"/>
<rect x="130.2" y="770" width="10.9" height="2" fill="#000028"/>
<rect x="184.8" y="770" width="21.8" height="2" fill="#000028"/>
<rect x="228.4" y="770" width="21.8" height="2" fill="#00003c"/>
<rect x="261.2" y="770" width="21.8" height="2" fill="#00003c"/>
<rect x="304.9" y="770" width="10.9" height="2" fill="#000028"/>
<rect x="359.5" y="770" width="10.9" height="2" fill="#00003c"/>
<rect x="425.0" y="770" width="21.8" height="2" fill="#000028"/>
<rect x="468.7" y="770" width="10.9" height="2" fill="#000028"/>
<rect x="556.0" y="770" width="21.8" height="2" fill="#000028"/>
<rect x="599.7" y="770" width="10.9" height="2" fill="#000028"/>
<rect x="621.6" y="770" width="21.8" height="2" fill="#000028"/>
<rect x="654.3" y="770" width="10.9" height="2" fill="#000028"/>
<rect x="687.1" y="770" width="10.9" height="2" fill="#000028"/>
<rect x="708.9" y="770" width="10.9" height="2" fill="#000028"/>
<rect x="741.7" y="770" width="10.9" height="2" fill="#000028"/>
<rect x="763.5" y="770" width="10.9" height="2" fill="#000028"/>
<rect x="829.0" y="770" width="10.9" height="2" fill="#000028"/>
<rect x="840.0" y="770" width="10.9" height="2" fill="#00003c"/>
<rect x="861.8" y="770" width="10.9" height="2" fill="#000028"/>
<rect x="894.6" y="770" width="10.9" height="2" fill="#000028"/>
<rect x="905.5" y="770" width="10.9" height="2" fill="#00003c"/>
<rect x="938.2" y="770" width="10.9" height="2" fill="#000028"/>
<rect x="960.1" y="770" width="21.8" height="2" fill="#000028"/>
<rect x="992.8" y="770" width="10.9" height="2" fill="#000028"/>
<rect x="1014.7" y="770" width="10.9" height="2" fill="#000028"/>
<rect x="1102.0" y="770" width="10.9" height="2" fill="#00003c"/>
<rect x="1123.9" y="770" width="10.9" height="2" fill="#000028"/>
<rect x="97.0" y="772" width="22.2" height="2" fill="#000028"/>
<rect x="130.2" y="772" width="54.6" height="2" fill="#000028"/>
<rect x="195.7" y="772" width="10.9" height="2" fill="#000028"/>
<rect x="217.5" y="772" width="43.7" height="2" fill="#000028"/>
<rect x="272.1" y="772" width="43.7" height="2" fill="#000028"/>
<rect x="326.7" y="772" width="65.5" height="2" fill="#000028"/>
<rect x="403.2" y="772" width="21.8" height="2" fill="#000028"/>
<rect x="446.8" y="772" width="43.7" height="2" fill="#000028"/>
<rect x="512.4" y="772" width="21.8" height="2" fill="#000028"/>
<rect x="545.1" y="772" width="43.7" height="2" fill="#000028"/>
<rect x="599.7" y="772" width="10.9" height="2" fill="#000028"/>
<rect x="621.6" y="772" width="43.7" height="2" fill="#000028"/>
<rect x="676.2" y="772" width="142.0" height="2" fill="#000028"/>
<rect x="829.0" y="772" width="98.3" height="2" fill="#000028"/>
<rect x="949.2" y="772" width="21.8" height="2" fill="#000028"/>
<rect x="1003.8" y="772" width="43.7" height="2" fill="#000028"/>
<rect x="1080.2" y="772" width="21.8" height="2" fill="#000028"/>
<rect x="1113.0" y="772" width="76.5" height="2" fill="#000028"/>
<rect x="97.0" y="774" width="11.3" height="2" fill="#000029"/>
<rect x="141.1" y="774" width="54.6" height="2" fill="#000029"/>
<rect x="239.4" y="774" width="54.6" height="2" fill="#000029"/>
<rect x="326.7" y="774" width="10.9" height="2" fill="#000029"/>
<rect x="359.5" y="774" width="21.8" height="2" fill="#000029"/>
<rect x="403.2" y="774" width="10.9" height="2" fill="#000029"/>
<rect x="446.8" y="774" width="10.9" height="2" fill="#000029"/>
<rect x="479.6" y="774" width="54.6" height="2" fill="#000029"/>
<rect x="545.1" y="774" width="10.9" height="2" fill="#000029"/>
<rect x="567.0" y="774" width="10.9" height="2" fill="#000029"/>
<rect x="610.6" y="774" width="10.9" height="2" fill="#000029"/>
<rect x="654.3" y="774" width="10.9" height="2" fill="#000029"/>
<rect x="687.1" y="774" width="32.8" height="2" fill="#000029"/>
<rect x="763.5" y="774" width="21.8" height="2" fill="#000029"/>
<rect x="829.0" y="774" width="21.8" height="2" fill="#000029"/>
<rect x="861.8" y="774" width="10.9" height="2" fill="#000029"/>
<rect x="883.6" y="774" width="10.9" height="2" fill="#000029"/>
<rect x="916.4" y="774" width="10.9" height="2" fill="#000029"/>
<rect x="938.2" y="774" width="10.9" height="2" fill="#000029"/>
<rect x="981.9" y="774" width="10.9" height="2" fill="#000029"/>
<rect x="1014.7" y="774" width="43.7" height="2" fill="#000029"/>
<rect x="1069.3" y="774" width="10.9" height="2" fill="#000029"/>
<rect x="1156.6" y="774" width="10.9" height="2" fill="#000029"/>
<rect x="1178.5" y="774" width="11.0" height="2" fill="#000029"/>
<rect x="97.0" y="776" width="22.2" height="2" fill="#000042"/>
<rect x="130.2" y="776" width="21.8" height="2" fill="#000042"/>
<rect x="184.8" y="776" width="10.9" height="2" fill="#000042"/>
<rect x="228.4" y="776" width="21.8" height="2" fill="#000042"/>
<rect x="261.2" y="776" width="10.9" height="2" fill="#000042"/>
<rect x="283.0" y="776" width="10.9" height="2" fill="#000042"/>
<rect x="370.4" y="776" width="10.9" height="2" fill="#000042"/>
<rect x="414.1" y="776" width="21.8" height="2" fill="#000042"/>
<rect x="457.8" y="776" width="10.9" height="2" fill="#000042"/>
<rect x="479.6" y="776" width="10.9" height="2" fill="#000042"/>
<rect x="501.4" y="776" width="10.9" height="2" fill="#000042"/>
<rect x="523.3" y="776" width="10.9" height="2" fill="#000042"/>
<rect x="556.0" y="776" width="10.9" height="2" fill="#000042"/>
<rect x="577.9" y="776" width="10.9" height="2" fill="#000042"/>
<rect x="599.7" y="776" width="10.9" height="2" fill="#000042"/>
<rect x="621.6" y="776" width="10.9" height="2" fill="#000042"/>
<rect x="665.2" y="776" width="32.8" height="2" fill="#000042"/>
<rect x="763.5" y="776" width="21.8" height="2" fill="#000042"/>
<rect x="796.3" y="776" width="10.9" height="2" fill="#000042"/>
<rect x="840.0" y="776" width="21.8" height="2" fill="#000042"/>
<rect x="872.7" y="776" width="21.8" height="2" fill="#000042"/>
<rect x="927.3" y="776" width="10.9" height="2" fill="#000042"/>
<rect x="949.2" y="776" width="10.9" height="2" fill="#000042"/>
<rect x="992.8" y="776" width="10.9" height="2" fill="#000042"/>
<rect x="1014.7" y="776" width="10.9" height="2" fill="#000042"/>
<rect x="1036.5" y="776" width="21.8" height="2" fill="#000042"/>
<rect x="1069.3" y="776" width="21.8" height="2" fill="#000042"/>
<rect x="1123.9" y="776" width="10.9" height="2" fill="#000042"/>
<rect x="1145.7" y="776" width="10.9" height="2" fill="#000042"/>
<rect x="1167.6" y="776" width="10.9" height="2" fill="#000042"/>
<rect x="108.3" y="778" width="21.8" height="2" fill="#00002f"/>
<rect x="173.8" y="778" width="21.8" height="2" fill="#00002f"/>
<rect x="217.5" y="778" width="65.5" height="2" fill="#00002f"/>
<rect x="294.0" y="778" width="10.9" height="2" fill="#00002f"/>
<rect x="315.8" y="778" width="54.6" height="2" fill="#00002f"/>
<rect x="381.3" y="778" width="10.9" height="2" fill="#00002f"/>
<rect x="403.2" y="778" width="43.7" height="2" fill="#00002f"/>
<rect x="457.8" y="778" width="21.8" height="2" fill="#00002f"/>
<rect x="512.4" y="778" width="76.4" height="2" fill="#00002f"/>
<rect x="599.7" y="778" width="21.8" height="2" fill="#00002f"/>
<rect x="708.9" y="778" width="32.8" height="2" fill="#00002f"/>
<rect x="752.6" y="778" width="43.7" height="2" fill="#00002f"/>
<rect x="807.2" y="778" width="10.9" height="2" fill="#00002f"/>
<rect x="840.0" y="778" width="10.9" height="2" fill="#00002f"/>
<rect x="861.8" y="778" width="43.7" height="2" fill="#00002f"/>
<rect x="938.2" y="778" width="10.9" height="2" fill="#00002f"/>
<rect x="960.1" y="778" width="10.9" height="2" fill="#00002f"/>
<rect x="992.8" y="778" width="10.9" height="2" fill="#00002f"/>
<rect x="1014.7" y="778" width="10.9" height="2" fill="#00002f"/>
<rect x="1047.4" y="778" width="10.9" height="2" fill="#00002f"/>
<rect x="1080.2" y="778" width="10.9" height="2" fill="#00002f"/>
<rect x="1113.0" y="778" width="10.9" height="2" fill="#00002f"/>
<rect x="1134.8" y="778" width="10.9" height="2" fill="#00002f"/>
<rect x="1178.5" y="778" width="11.0" height="2" fill="#00002f"/>
<rect x="141.1" y="780" width="10.9" height="2" fill="#00004a"/>
<rect x="217.5" y="780" width="10.9" height="2" fill="#00004a"/>
<rect x="337.6" y="780" width="21.8" height="2" fill="#00004a"/>
<rect x="512.4" y="780" width="10.9" height="2" fill="#00004a"/>
<rect x="763.5" y="780" width="10.9" height="2" fill="#00004a"/>
<rect x="796.3" y="780" width="10.9" height="2" fill="#00004a"/>
<rect x="981.9" y="780" width="10.9" height="2" fill="#00004a"/>
<rect x="1003.8" y="780" width="10.9" height="2" fill="#00004a"/>
<rect x="1113.0" y="780" width="10.9" height="2" fill="#00004a"/>
<rect x="1178.5" y="780" width="11.0" height="2" fill="#00004a"/>
<rect x="97.0" y="784" width="11.3" height="2" fill="#000037"/>
<rect x="152.0" y="784" width="10.9" height="2" fill="#000037"/>
<rect x="184.8" y="784" width="21.8" height="2" fill="#000037"/>
<rect x="217.5" y="784" width="10.9" height="2" fill="#000037"/>
<rect x="239.4" y="784" width="21.8" height="2" fill="#000037"/>
<rect x="294.0" y="784" width="10.9" height="2" fill="#000037"/>
<rect x="337.6" y="784" width="10.9" height="2" fill="#000037"/>
<rect x="381.3" y="784" width="10.9" height="2" fill="#000037"/>
<rect x="414.1" y="784" width="10.9" height="2" fill="#000037"/>
<rect x="435.9" y="784" width="10.9" height="2" fill="#000037"/>
<rect x="490.5" y="784" width="10.9" height="2" fill="#000037"/>
<rect x="512.4" y="784" width="10.9" height="2" fill="#000037"/>
<rect x="567.0" y="784" width="10.9" height="2" fill="#000037"/>
<rect x="621.6" y="784" width="10.9" height="2" fill="#000037"/>
<rect x="676.2" y="784" width="32.8" height="2" fill="#000037"/>
<rect x="730.8" y="784" width="10.9" height="2" fill="#000037"/>
<rect x="752.6" y="784" width="10.9" height="2" fill="#000037"/>
<rect x="818.1" y="784" width="10.9" height="2" fill="#000037"/>
<rect x="850.9" y="784" width="10.9" height="2" fill="#000037"/>
<rect x="872.7" y="784" width="10.9" height="2" fill="#000037"/>
<rect x="894.6" y="784" width="21.8" height="2" fill="#000037"/>
<rect x="927.3" y="784" width="10.9" height="2" fill="#000037"/>
<rect x="981.9" y="784" width="10.9" height="2" fill="#000037"/>
<rect x="1003.8" y="784" width="10.9" height="2" fill="#000037"/>
<rect x="1025.6" y="784" width="10.9" height="2" fill="#000037"/>
<rect x="1080.2" y="784" width="21.8" height="2" fill="#000037"/>
<rect x="1156.6" y="784" width="21.8" height="2" fill="#000037"/>
<rect x="272.1" y="786" width="10.9" height="2" fill="#00003e"/>
<rect x="381.3" y="786" width="10.9" height="2" fill="#00003e"/>
<rect x="501.4" y="786" width="10.9" height="2" fill="#00003e"/>
<rect x="545.1" y="786" width="10.9" height="2" fill="#00003e"/>
<rect x="632.5" y="786" width="10.9" height="2" fill="#00003e"/>
<rect x="97.0" y="924" width="22.2" height="2" fill="#000050"/>
<rect x="141.1" y="924" width="10.9" height="2" fill="#000050"/>
<rect x="250.3" y="924" width="10.9" height="2" fill="#000050"/>
<rect x="294.0" y="924" width="10.9" height="2" fill="#000050"/>
<rect x="370.4" y="924" width="21.8" height="2" fill="#000050"/>
<rect x="414.1" y="924" width="10.9" height="2" fill="#000050"/>
<rect x="446.8" y="924" width="21.8" height="2" fill="#000050"/>
<rect x="512.4" y="924" width="10.9" height="2" fill="#000050"/>
<rect x="632.5" y="924" width="10.9" height="2" fill="#000050"/>
<rect x="752.6" y="924" width="32.8" height="2" fill="#000050"/>
<rect x="818.1" y="924" width="10.9" height="2" fill="#000050"/>
<rect x="840.0" y="924" width="10.9" height="2" fill="#000050"/>
<rect x="872.7" y="924" width="10.9" height="2" fill="#000050"/>
<rect x="894.6" y="924" width="21.8" height="2" fill="#000050"/>
<rect x="1069.3" y="924" width="10.9" height="2" fill="#000050"/>
<rect x="1102.0" y="924" width="21.8" height="2" fill="#000050"/>
<rect x="97.0" y="926" width="44.1" height="2" fill="#000033"/>
<rect x="217.5" y="926" width="10.9" height="2" fill="#000033"/>
<rect x="250.3" y="926" width="21.8" height="2" fill="#000033"/>
<rect x="304.9" y="926" width="10.9" height="2" fill="#000033"/>
<rect x="337.6" y="926" width="10.9" height="2" fill="#000033"/>
<rect x="359.5" y="926" width="10.9" height="2" fill="#000033"/>
<rect x="403.2" y="926" width="21.8" height="2" fill="#000033"/>
<rect x="446.8" y="926" width="21.8" height="2" fill="#000033"/>
<rect x="479.6" y="926" width="10.9" height="2" fill="#000033"/>
<rect x="501.4" y="926" width="21.8" height="2" fill="#000033"/>
<rect x="556.0" y="926" width="10.9" height="2" fill="#000033"/>
<rect x="577.9" y="926" width="10.9" height="2" fill="#000033"/>
<rect x="643.4" y="926" width="10.9" height="2" fill="#000033"/>
<rect x="687.1" y="926" width="21.8" height="2" fill="#000033"/>
<rect x="796.3" y="926" width="10.9" height="2" fill="#000033"/>
<rect x="818.1" y="926" width="21.8" height="2" fill="#000033"/>
<rect x="850.9" y="926" width="10.9" height="2" fill="#000033"/>
<rect x="894.6" y="926" width="21.8" height="2" fill="#000033"/>
<rect x="981.9" y="926" width="21.8" height="2" fill="#000033"/>
<rect x="1025.6" y="926" width="10.9" height="2" fill="#000033"/>
<rect x="1047.4" y="926" width="10.9" height="2" fill="#000033"/>
<rect x="1156.6" y="926" width="10.9" height="2" fill="#000033"/>
<rect x="97.0" y="928" width="11.3" height="2" fill="#000030"/>
<rect x="130.2" y="928" width="10.9" height="2" fill="#000030"/>
<rect x="162.9" y="928" width="21.8" height="2" fill="#000030"/>
<rect x="217.5" y="928" width="10.9" height="2" fill="#000030"/>
<rect x="239.4" y="928" width="10.9" height="2" fill="#000030"/>
<rect x="261.2" y="928" width="21.8" height="2" fill="#000030"/>
<rect x="294.0" y="928" width="43.7" height="2" fill="#000030"/>
<rect x="359.5" y="928" width="21.8" height="2" fill="#000030"/>
<rect x="414.1" y="928" width="21.8" height="2" fill="#000030"/>
<rect x="446.8" y="928" width="21.8" height="2" fill="#000030"/>
<rect x="534.2" y="928" width="10.9" height="2" fill="#000030"/>
<rect x="577.9" y="928" width="21.8" height="2" fill="#000030"/>
<rect x="610.6" y="928" width="10.9" height="2" fill="#000030"/>
<rect x="643.4" y="928" width="21.8" height="2" fill="#000030"/>
<rect x="687.1" y="928" width="10.9" height="2" fill="#000030"/>
<rect x="719.8" y="928" width="10.9" height="2" fill="#000030"/>
<rect x="752.6" y="928" width="10.9" height="2" fill="#000030"/>
<rect x="807.2" y="928" width="10.9" height="2" fill="#000030"/>
<rect x="894.6" y="928" width="10.9" height="2" fill="#000030"/>
<rect x="949.2" y="928" width="21.8" height="2" fill="#000030"/>
<rect x="1025.6" y="928" width="10.9" height="2" fill="#000030"/>
<rect x="1102.0" y="928" width="10.9" height="2" fill="#000030"/>
<rect x="1145.7" y="928" width="10.9" height="2" fill="#000030"/>
<rect x="130.2" y="930" width="10.9" height="2" fill="#00002d"/>
<rect x="184.8" y="930" width="10.9" height="2" fill="#00002d"/>
<rect x="272.1" y="930" width="10.9" height="2" fill="#00002d"/>
<rect x="294.0" y="930" width="21.8" height="2" fill="#00002d"/>
<rect x="326.7" y="930" width="10.9" height="2" fill="#00002d"/>
<rect x="348.6" y="930" width="32.8" height="2" fill="#00002d"/>
<rect x="392.2" y="930" width="10.9" height="2" fill="#00002d"/>
<rect x="545.1" y="930" width="10.9" height="2" fill="#00002d"/>
<rect x="632.5" y="930" width="10.9" height="2" fill="#00002d"/>
<rect x="687.1" y="930" width="10.9" height="2" fill="#00002d"/>
<rect x="708.9" y="930" width="10.9" height="2" fill="#00002d"/>
<rect x="763.5" y="930" width="10.9" height="2" fill="#00002d"/>
<rect x="818.1" y="930" width="10.9" height="2" fill="#00002d"/>
<rect x="850.9" y="930" width="10.9" height="2" fill="#00002d"/>
<rect x="927.3" y="930" width="10.9" height="2" fill="#00002d"/>
<rect x="971.0" y="930" width="10.9" height="2" fill="#00002d"/>
<rect x="1014.7" y="930" width="10.9" height="2" fill="#00002d"/>
<rect x="1069.3" y="930" width="10.9" height="2" fill="#00002d"/>
<rect x="1145.7" y="930" width="21.8" height="2" fill="#00002d"/>
<rect x="97.0" y="932" width="44.1" height="2" fill="#000040"/>
<rect x="152.0" y="932" width="43.7" height="2" fill="#000040"/>
<rect x="217.5" y="932" width="32.8" height="2" fill="#000040"/>
<rect x="272.1" y="932" width="32.8" height="2" fill="#000040"/>
<rect x="326.7" y="932" width="10.9" height="2" fill="#000040"/>
<rect x="348.6" y="932" width="21.8" height="2" fill="#000040"/>
<rect x="381.3" y="932" width="54.6" height="2" fill="#000040"/>
<rect x="446.8" y="932" width="21.8" height="2" fill="#000040"/>
<rect x="479.6" y="932" width="21.8" height="2" fill="#000040"/>
<rect x="523.3" y="932" width="21.8" height="2" fill="#000040"/>
<rect x="556.0" y="932" width="32.8" height="2" fill="#000040"/>
<rect x="599.7" y="932" width="10.9" height="2" fill="#000040"/>
<rect x="643.4" y="932" width="21.8" height="2" fill="#000040"/>
<rect x="730.8" y="932" width="10.9" height="2" fill="#000040"/>
<rect x="752.6" y="932" width="65.5" height="2" fill="#000040"/>
<rect x="829.0" y="932" width="10.9" height="2" fill="#000040"/>
<rect x="872.7" y="932" width="87.4" height="2" fill="#000040"/>
<rect x="971.0" y="932" width="21.8" height="2" fill="#000040"/>
<rect x="1003.8" y="932" width="76.4" height="2" fill="#000040"/>
<rect x="1091.1" y="932" width="43.7" height="2" fill="#000040"/>
<rect x="1145.7" y="932" width="43.8" height="2" fill="#000040"/>
<rect x="108.3" y="934" width="10.9" height="2" fill="#00003d"/>
<rect x="162.9" y="934" width="21.8" height="2" fill="#00003d"/>
<rect x="239.4" y="934" width="10.9" height="2" fill="#00003d"/>
<rect x="272.1" y="934" width="21.8" height="2" fill="#00003d"/>
<rect x="326.7" y="934" width="21.8" height="2" fill="#00003d"/>
<rect x="392.2" y="934" width="10.9" height="2" fill="#00003d"/>
<rect x="435.9" y="934" width="10.9" height="2" fill="#00003d"/>
<rect x="457.8" y="934" width="10.9" height="2" fill="#00003d"/>
<rect x="501.4" y="934" width="10.9" height="2" fill="#00003d"/>
<rect x="556.0" y="934" width="43.7" height="2" fill="#00003d"/>
<rect x="610.6" y="934" width="10.9" height="2" fill="#00003d"/>
<rect x="632.5" y="934" width="10.9" height="2" fill="#00003d"/>
<rect x="665.2" y="934" width="21.8" height="2" fill="#00003d"/>
<rect x="708.9" y="934" width="43.7" height="2" fill="#00003d"/>
<rect x="796.3" y="934" width="21.8" height="2" fill="#00003d"/>
<rect x="850.9" y="934" width="32.8" height="2" fill="#00003d"/>
<rect x="894.6" y="934" width="10.9" height="2" fill="#00003d"/>
<rect x="949.2" y="934" width="32.8" height="2" fill="#00003d"/>
<rect x="1025.6" y="934" width="10.9" height="2" fill="#00003d"/>
<rect x="1058.4" y="934" width="10.9" height="2" fill="#00003d"/>
<rect x="1091.1" y="934" width="10.9" height="2" fill="#00003d"/>
<rect x="1123.9" y="934" width="21.8" height="2" fill="#00003d"/>
<rect x="1167.6" y="934" width="21.9" height="2" fill="#00003d"/>
<rect x="97.0" y="936" width="11.3" height="2" fill="#00003c"/>
<rect x="130.2" y="936" width="21.8" height="2" fill="#00003c"/>
<rect x="162.9" y="936" width="32.8" height="2" fill="#00003c"/>
<rect x="206.6" y="936" width="65.5" height="2" fill="#00003c"/>
<rect x="272.1" y="936" width="32.8" height="2" fill="#000046"/>
<rect x="304.9" y="936" width="43.7" height="2" fill="#00003c"/>
<rect x="348.6" y="936" width="10.9" height="2" fill="#000046"/>
<rect x="359.5" y="936" width="21.8" height="2" fill="#00003c"/>
<rect x="381.3" y="936" width="21.8" height="2" fill="#000046"/>
<rect x="403.2" y="936" width="32.8" height="2" fill="#00003c"/>
<rect x="446.8" y="936" width="10.9" height="2" fill="#00003c"/>
<rect x="468.7" y="936" width="10.9" height="2" fill="#000046"/>
<rect x="479.6" y="936" width="21.8" height="2" fill="#00003c"/>
<rect x="501.4" y="936" width="10.9" height="2" fill="#000046"/>
<rect x="523.3" y="936" width="10.9" height="2" fill="#000046"/>
<rect x="534.2" y="936" width="10.9" height="2" fill="#00003c"/>
<rect x="556.0" y="936" width="21.8" height="2" fill="#00003c"/>
<rect x="577.9" y="936" width="10.9" height="2" fill="#000046"/>
<rect x="588.8" y="936" width="21.8" height="2" fill="#00003c"/>
<rect x="610.6" y="936" width="10.9" height="2" fill="#000046"/>
<rect x="632.5" y="936" width="10.9" height="2" fill="#00003c"/>
<rect x="654.3" y="936" width="10.9" height="2" fill="#00003c"/>
<rect x="676.2" y="936" width="10.9" height="2" fill="#000046"/>
<rect x="687.1" y="936" width="21.8" height="2" fill="#00003c"/>
<rect x="719.8" y="936" width="21.8" height="2" fill="#00003c"/>
<rect x="752.6" y="936" width="21.8" height="2" fill="#00003c"/>
<rect x="785.4" y="936" width="32.8" height="2" fill="#00003c"/>
<rect x="818.1" y="936" width="32.8" height="2" fill="#000046"/>
<rect x="850.9" y="936" width="21.8" height="2" fill="#00003c"/>
<rect x="872.7" y="936" width="10.9" height="2" fill="#000046"/>
<rect x="883.6" y="936" width="21.8" height="2" fill="#00003c"/>
<rect x="905.5" y="936" width="10.9" height="2" fill="#000046"/>
<rect x="916.4" y="936" width="10.9" height="2" fill="#00003c"/>
<rect x="927.3" y="936" width="10.9" height="2" fill="#000046"/>
<rect x="938.2" y="936" width="10.9" height="2" fill="#00003c"/>
<rect x="960.1" y="936" width="10.9" height="2" fill="#00003c"/>
<rect x="981.9" y="936" width="10.9" height="2" fill="#00003c"/>
<rect x="1003.8" y="936" width="10.9" height="2" fill="#000046"/>
<rect x="1014.7" y="936" width="21.8" height="2" fill="#00003c"/>
<rect x="1047.4" y="936" width="21.8" height="2" fill="#00003c"/>
<rect x="1080.2" y="936" width="10.9" height="2" fill="#000046"/>
<rect x="1102.0" y="936" width="10.9" height="2" fill="#00003c"/>
<rect x="1123.9" y="936" width="21.8" height="2" fill="#000046"/>
<rect x="1156.6" y="936" width="32.9" height="2" fill="#00003c"/>
<line x1="64.5" y1="719" x2="64.5" y2="952" stroke="#9a9a9a" stroke-width="1"/>
<line x1="64" y1="951.5" x2="1224" y2="951.5" stroke="#9a9a9a" stroke-width="1"/>
<line x1="65" y1="936.5" x2="71" y2="936.5" stroke="#9a9a9a" stroke-width="1"/>
<line x1="65" y1="896.5" x2="71" y2="896.5" stroke="#9a9a9a" stroke-width="1"/>
<line x1="65" y1="855.5" x2="71" y2="855.5" stroke="#9a9a9a" stroke-width="1"/>
<line x1="65" y1="815.5" x2="71" y2="815.5" stroke="#9a9a9a" stroke-width="1"/>
<line x1="65" y1="774.5" x2="71" y2="774.5" stroke="#9a9a9a" stroke-width="1"/>
<line x1="65" y1="734.5" x2="71" y2="734.5" stroke="#9a9a9a" stroke-width="1"/>
<line x1="65" y1="944.5" x2="68" y2="944.5" stroke="#646464" stroke-width="1"/>
<line x1="65" y1="928.5" x2="68" y2="928.5" stroke="#646464" stroke-width="1"/>
<line x1="65" y1="920.5" x2="68" y2="920.5" stroke="#646464" stroke-width="1"/>
<line x1="65" y1="912.5" x2="68" y2="912.5" stroke="#646464" stroke-width="1"/>
<line x1="65" y1="904.5" x2="68" y2="904.5" stroke="#646464" stroke-width="1"/>
<line x1="65" y1="887.5" x2="68" y2="887.5" stroke="#646464" stroke-width="1"/>
<line x1="65" y1="879.5" x2="68" y2="879.5" stroke="#646464" stroke-width="1"/>
<line x1="65" y1="871.5" x2="68" y2="871.5" stroke="#646464" stroke-width="1"/>
<line x1="65" y1="863.5" x2="68" y2="863.5" stroke="#646464" stroke-width="1"/>
<line x1="65" y1="847.5" x2="68" y2="847.5" stroke="#646464" stroke-width="1"/>
<line x1="65" y1="839.5" x2="68" y2="839.5" stroke="#646464" stroke-width="1"/>
<line x1="65" y1="831.5" x2="68" y2="831.5" stroke="#646464" stroke-width="1"/>
<line x1="65" y1="823.5" x2="68" y2="823.5" stroke="#646464" stroke-width="1"/>
<line x1="65" y1="806.5" x2="68" y2="806.5" stroke="#646464" stroke-width="1"/>
<line x1="65" y1="798.5" x2="68" y2="798.5" stroke="#646464" stroke-width="1"/>
<line x1="65" y1="790.5" x2="68" y2="790.5" stroke="#646464" stroke-width="1"/>
<line x1="65" y1="782.5" x2="68" y2="782.5" stroke="#646464" stroke-width="1"/>
<line x1="65" y1="766.5" x2="68" y2="766.5" stroke="#646464" stroke-width="1"/>
<line x1="65" y1="758.5" x2="68" y2="758.5" stroke="#646464" stroke-width="1"/>
<line x1="65" y1="750.5" x2="68" y2="750.5" stroke="#646464" stroke-width="1"/>
<line x1="65" y1="742.5" x2="68" y2="742.5" stroke="#646464" stroke-width="1"/>
<line x1="65" y1="725.5" x2="68" y2="725.5" stroke="#646464" stroke-width="1"/>
<text x="59.5" y="941" font-size="12" fill="#a8a8a8" text-anchor="end" font-weight="normal" >0</text>
<text x="59.5" y="900.5" font-size="12" fill="#a8a8a8" text-anchor="end" font-weight="normal" >0.5</text>
<text x="59.5" y="860" font-size="12" fill="#a8a8a8" text-anchor="end" font-weight="normal" >1</text>
<text x="59.5" y="819.5" font-size="12" fill="#a8a8a8" text-anchor="end" font-weight="normal" >1.5</text>
<text x="59.5" y="779" font-size="12" fill="#a8a8a8" text-anchor="end" font-weight="normal" >2</text>
<text x="59.5" y="738.5" font-size="12" fill="#a8a8a8" text-anchor="end" font-weight="normal" >2.5</text>
<line x1="97.5" y1="951" x2="97.5" y2="945" stroke="#9a9a9a" stroke-width="1"/>
<line x1="206.5" y1="951" x2="206.5" y2="945" stroke="#9a9a9a" stroke-width="1"/>
<line x1="315.5" y1="951" x2="315.5" y2="945" stroke="#9a9a9a" stroke-width="1"/>
<line x1="425.5" y1="951" x2="425.5" y2="945" stroke="#9a9a9a" stroke-width="1"/>
<line x1="534.5" y1="951" x2="534.5" y2="945" stroke="#9a9a9a" stroke-width="1"/>
<line x1="643.5" y1="951" x2="643.5" y2="945" stroke="#9a9a9a" stroke-width="1"/>
<line x1="752.5" y1="951" x2="752.5" y2="945" stroke="#9a9a9a" stroke-width="1"/>
<line x1="861.5" y1="951" x2="861.5" y2="945" stroke="#9a9a9a" stroke-width="1"/>
<line x1="971.5" y1="951" x2="971.5" y2="945" stroke="#9a9a9a" stroke-width="1"/>
<line x1="1080.5" y1="951" x2="1080.5" y2="945" stroke="#9a9a9a" stroke-width="1"/>
<line x1="1189.5" y1="951" x2="1189.5" y2="945" stroke="#9a9a9a" stroke-width="1"/>
<line x1="75.5" y1="951" x2="75.5" y2="947" stroke="#646464" stroke-width="1"/>
<line x1="119.5" y1="951" x2="119.5" y2="947" stroke="#646464" stroke-width="1"/>
<line x1="141.5" y1="951" x2="141.5" y2="947" stroke="#646464" stroke-width="1"/>
<line x1="162.5" y1="951" x2="162.5" y2="947" stroke="#646464" stroke-width="1"/>
<line x1="184.5" y1="951" x2="184.5" y2="947" stroke="#646464" stroke-width="1"/>
<line x1="228.5" y1="951" x2="228.5" y2="947" stroke="#646464" stroke-width="1"/>
<line x1="250.5" y1="951" x2="250.5" y2="947" stroke="#646464" stroke-width="1"/>
<line x1="272.5" y1="951" x2="272.5" y2="947" stroke="#646464" stroke-width="1"/>
<line x1="293.5" y1="951" x2="293.5" y2="947" stroke="#646464" stroke-width="1"/>
<line x1="337.5" y1="951" x2="337.5" y2="947" stroke="#646464" stroke-width="1"/>
<line x1="359.5" y1="951" x2="359.5" y2="947" stroke="#646464" stroke-width="1"/>
<line x1="381.5" y1="951" x2="381.5" y2="947" stroke="#646464" stroke-width="1"/>
<line x1="403.5" y1="951" x2="403.5" y2="947" stroke="#646464" stroke-width="1"/>
<line x1="446.5" y1="951" x2="446.5" y2="947" stroke="#646464" stroke-width="1"/>
<line x1="468.5" y1="951" x2="468.5" y2="947" stroke="#646464" stroke-width="1"/>
<line x1="490.5" y1="951" x2="490.5" y2="947" stroke="#646464" stroke-width="1"/>
<line x1="512.5" y1="951" x2="512.5" y2="947" stroke="#646464" stroke-width="1"/>
<line x1="556.5" y1="951" x2="556.5" y2="947" stroke="#646464" stroke-width="1"/>
<line x1="577.5" y1="951" x2="577.5" y2="947" stroke="#646464" stroke-width="1"/>
<line x1="599.5" y1="951" x2="599.5" y2="947" stroke="#646464" stroke-width="1"/>
<line x1="621.5" y1="951" x2="621.5" y2="947" stroke="#646464" stroke-width="1"/>
<line x1="665.5" y1="951" x2="665.5" y2="947" stroke="#646464" stroke-width="1"/>
<line x1="687.5" y1="951" x2="687.5" y2="947" stroke="#646464" stroke-width="1"/>
<line x1="708.5" y1="951" x2="708.5" y2="947" stroke="#646464" stroke-width="1"/>
<line x1="730.5" y1="951" x2="730.5" y2="947" stroke="#646464" stroke-width="1"/>
<line x1="774.5" y1="951" x2="774.5" y2="947" stroke="#646464" stroke-width="1"/>
<line x1="796.5" y1="951" x2="796.5" y2="947" stroke="#646464" stroke-width="1"/>
<line x1="818.5" y1="951" x2="818.5" y2="947" stroke="#646464" stroke-width="1"/>
<line x1="839.5" y1="951" x2="839.5" y2="947" stroke="#646464" stroke-width="1"/>
<line x1="883.5" y1="951" x2="883.5" y2="947" stroke="#646464" stroke-width="1"/>
<line x1="905.5" y1="951" x2="905.5" y2="947" stroke="#646464" stroke-width="1"/>
<line x1="927.5" y1="951" x2="927.5" y2="947" stroke="#646464" stroke-width="1"/>
<line x1="949.5" y1="951" x2="949.5" y2="947" stroke="#646464" stroke-width="1"/>
<line x1="992.5" y1="951" x2="992.5" y2="947" stroke="#646464" stroke-width="1"/>
<line x1="1014.5" y1="951" x2="1014.5" y2="947" stroke="#646464" stroke-width="1"/>
<line x1="1036.5" y1="951" x2="1036.5" y2="947" stroke="#646464" stroke-width="1"/>
<line x1="1058.5" y1="951" x2="1058.5" y2="947" stroke="#646464" stroke-width="1"/>
<line x1="1102.5" y1="951" x2="1102.5" y2="947" stroke="#646464" stroke-width="1"/>
<line x1="1123.5" y1="951" x2="1123.5" y2="947" stroke="#646464" stroke-width="1"/>
<line x1="1145.5" y1="951" x2="1145.5" y2="947" stroke="#646464" stroke-width="1"/>
<line x1="1167.5" y1="951" x2="1167.5" y2="947" stroke="#646464" stroke-width="1"/>
<line x1="1211.5" y1="951" x2="1211.5" y2="947" stroke="#646464" stroke-width="1"/>
<text x="97.7" y="964.5" font-size="12" fill="#a8a8a8" text-anchor="middle" font-weight="normal" >0</text>
<text x="206.9" y="964.5" font-size="12" fill="#a8a8a8" text-anchor="middle" font-weight="normal" >10</text>
<text x="316.1" y="964.5" font-size="12" fill="#a8a8a8" text-anchor="middle" font-weight="normal" >20</text>
<text x="425.3" y="964.5" font-size="12" fill="#a8a8a8" text-anchor="middle" font-weight="normal" >30</text>
<text x="534.5" y="964.5" font-size="12" fill="#a8a8a8" text-anchor="middle" font-weight="normal" >40</text>
<text x="643.7" y="964.5" font-size="12" fill="#a8a8a8" text-anchor="middle" font-weight="normal" >50</text>
<text x="752.9" y="964.5" font-size="12" fill="#a8a8a8" text-anchor="middle" font-weight="normal" >60</text>
<text x="862.1" y="964.5" font-size="12" fill="#a8a8a8" text-anchor="middle" font-weight="normal" >70</text>
<text x="971.3" y="964.5" font-size="12" fill="#a8a8a8" text-anchor="middle" font-weight="normal" >80</text>
<text x="1080.5" y="964.5" font-size="12" fill="#a8a8a8" text-anchor="middle" font-weight="normal" >90</text>
<text x="1189.7" y="964.5" font-size="12" fill="#a8a8a8" text-anchor="middle" font-weight="normal" >100</text>
<text x="32.2" y="831" font-size="12" fill="#a8a8a8" text-anchor="middle" font-weight="normal" textLength="86" lengthAdjust="spacingAndGlyphs" transform="rotate(-90 32.2 831)">Frequency (kHz)</text>
<text x="643.3" y="712.5" font-size="15" fill="#ffa500" text-anchor="middle" font-weight="bold" textLength="200.5" lengthAdjust="spacingAndGlyphs" >Spectrogram (Acoustic Map)</text>
</svg></body></html>
